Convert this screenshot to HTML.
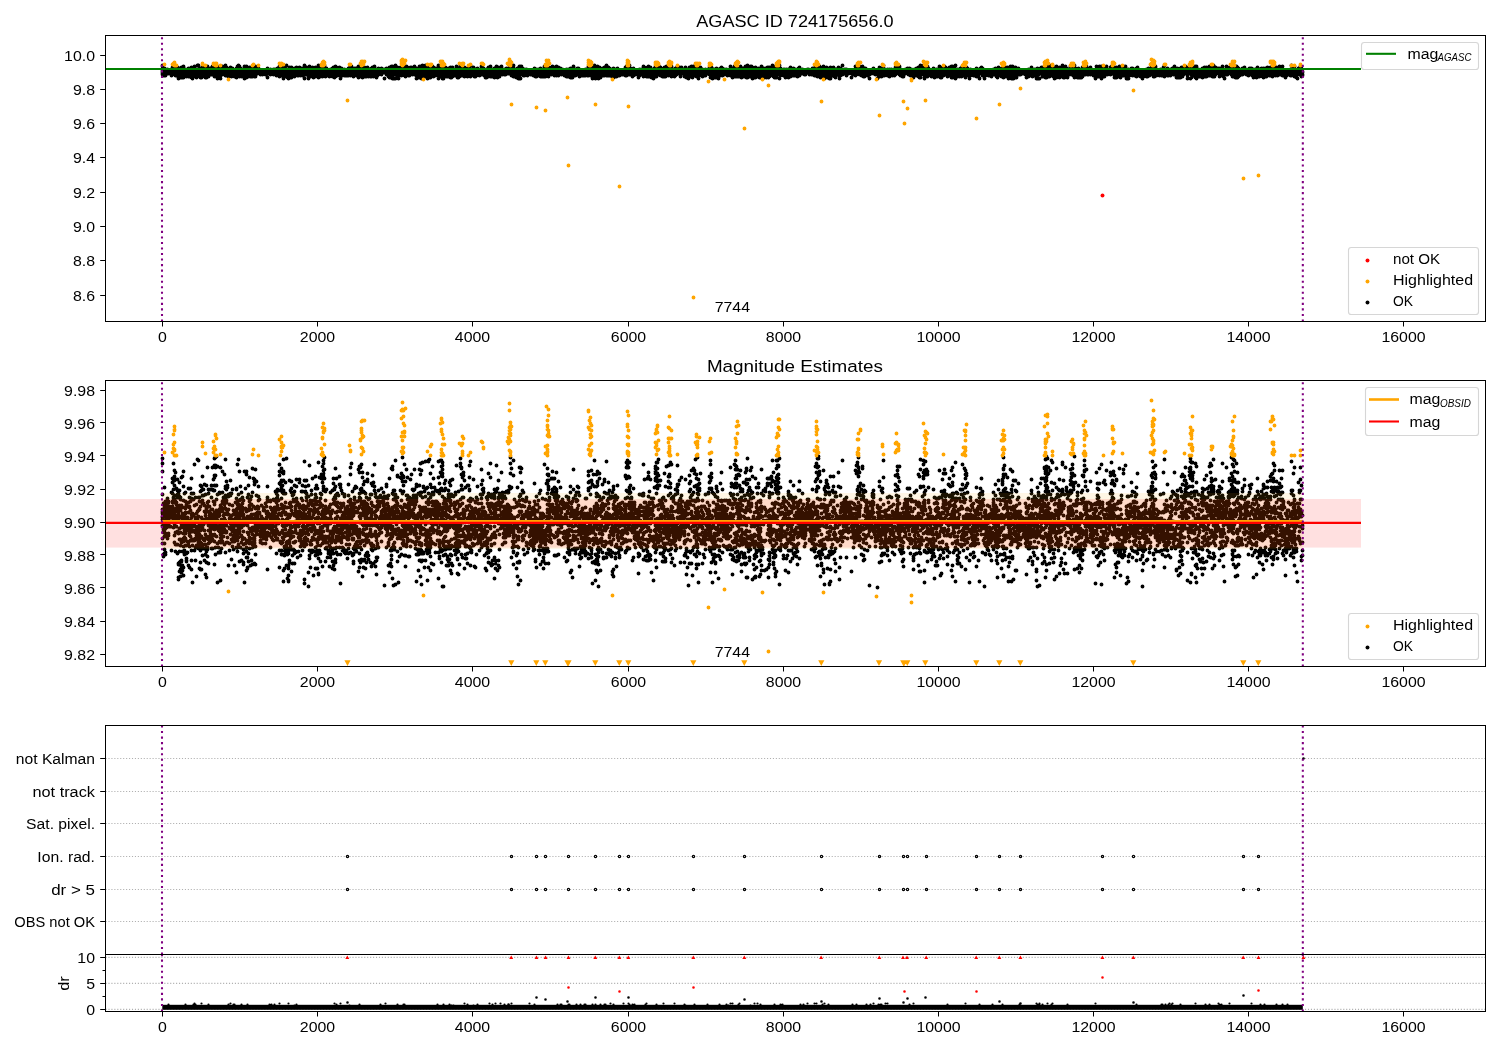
<!DOCTYPE html>
<html><head><meta charset="utf-8"><style>html,body{margin:0;padding:0;background:#fff;overflow:hidden}svg{display:block;will-change:transform}</style></head><body>
<svg width="1500" height="1050" viewBox="0 0 1500 1050" font-family="&quot;Liberation Sans&quot;, sans-serif">
<rect width="1500" height="1050" fill="#fff"/>
<defs>
<clipPath id="c1"><rect x="105.5" y="35.5" width="1380.0" height="286.0"/></clipPath>
<clipPath id="c2"><rect x="105.5" y="380.5" width="1380.0" height="286.0"/></clipPath>
<clipPath id="c3"><rect x="105.5" y="725.5" width="1380.0" height="229.0"/></clipPath>
<clipPath id="c4"><rect x="105.5" y="954.5" width="1380.0" height="57.0"/></clipPath>
</defs>
<g clip-path="url(#c1)">
<path d="M162.5 74.5h0m0-3h0m0-1h0m0-1h0m0-3h0m0 7h0m0-2h0m0 1h0m0-1h0m0 1h0m0-1h0m0-6h0m0 7h0m0-6h0m0 5h0m1 1h0m0 1h0m0-2h0m0 4h0m0-5h0m0 2h0m0 1h0m0-3h0m0 2h0m1 1h0m0-3h0m0 1h0m0 1h0m0-1h0m0 2h0m0-3h0m0-2h0m0 4h0m0 3h0m0-4h0m0 3h0m0-3h0m0 2h0m1 0h0m0-2h0m0-1h0m0 2h0m0-2h0m0 3h0m0-3h0m0 5h0m0-4h0m0-2h0m0 3h0m1-1h0m0 1h0m0-2h0m0 2h0m0-2h0m1-1h0m0 3h0m0-1h0m0-1h0m0 3h0m0-2h0m0 1h0m0-2h0m0 1h0m0 2h0m0-3h0m0 1h0m1 2h0m0-2h0m0 1h0m0 1h0m0-3h0m0 1h0m0-1h0m1 1h0m0-1h0m1 2h0m0-1h0m0-1h0m1 1h0m0 4h0m0-5h0m0-1h0m0 1h0m1 1h0m0-1h0m0 1h0m0-4h0m0 3h0m0-1h0m0 3h0m0-4h0m0 3h0m0-2h0m1 1h0m0-2h0m0 1h0m0 3h0m0-2h0m0-4h0m0 6h0m1-3h0m0 5h0m0-3h0m0-4h0m0 1h0m0 3h0m0-1h0m0 2h0m0-3h0m0 2h0m0-1h0m0 3h0m0-3h0m0 2h0m0-6h0m0 1h0m1-1h0m0 1h0m0 6h0m0-3h0m0 1h0m0 3h0m0-2h0m0-2h0m0 5h0m1-5h0m0 2h0m0-2h0m0 1h0m0-1h0m0 1h0m0-1h0m0-2h0m1 7h0m0-6h0m0 5h0m0-2h0m0-5h0m0 2h0m0-1h0m0 5h0m1-2h0m0-1h0m0-1h0m0 7h0m0 1h0m0-6h0m0-1h0m0 1h0m0 2h0m0 5h0m0-10h0m0 8h0m1-3h0m0 4h0m0-9h0m0 4h0m0-3h0m0 1h0m0 6h0m0-8h0m0 7h0m0 1h0m1-7h0m0 1h0m0 7h0m0-8h0m0 4h0m0-3h0m0 3h0m0-1h0m0-2h0m0 4h0m0 3h0m0-1h0m1-4h0m0 4h0m0-2h0m0-2h0m0-2h0m0 6h0m0-9h0m0 10h0m0-1h0m0-5h0m0 1h0m0-1h0m1-4h0m0 8h0m0-5h0m0 1h0m0 6h0m0-5h0m0 4h0m1-3h0m0 1h0m0-2h0m0 5h0m0-9h0m0 1h0m0 3h0m0-6h0m0 6h0m0 1h0m0 3h0m0-2h0m1-3h0m0 4h0m0-3h0m0 1h0m0 2h0m0-6h0m0 3h0m0-1h0m0 1h0m0-1h0m0 1h0m0-2h0m0 3h0m1-2h0m0 3h0m0-5h0m0 4h0m0-3h0m0 4h0m0-1h0m0-3h0m1 0h0m0 6h0m0-4h0m0 2h0m0-2h0m0 3h0m0 1h0m0-6h0m0 2h0m1 0h0m0 2h0m0-2h0m0-1h0m0 4h0m0-3h0m1 0h0m0-2h0m0 1h0m0 1h0m0 2h0m0-6h0m0 8h0m0-2h0m1-2h0m0-2h0m0 6h0m0-6h0m0 1h0m0 1h0m0 1h0m0-4h0m0 5h0m0-1h0m1-1h0m0 1h0m0-5h0m0 4h0m0 2h0m0-2h0m0 1h0m0-4h0m0 1h0m1 2h0m0-1h0m0-2h0m0 5h0m0-5h0m0 7h0m0-4h0m0-1h0m0 6h0m0-6h0m0 4h0m0-8h0m1 5h0m0-1h0m0 3h0m0-3h0m0 1h0m0 1h0m0 1h0m0-2h0m0 1h0m0 5h0m0-6h0m1 1h0m0-1h0m0-3h0m0 3h0m0 2h0m0-3h0m1 1h0m0 3h0m0-9h0m0 4h0m0 4h0m1-2h0m0 1h0m0-2h0m0 5h0m0-7h0m0 2h0m0 3h0m1-2h0m0 1h0m0-3h0m0 7h0m0-6h0m0 3h0m0-2h0m1 1h0m0-1h0m0-7h0m0 8h0m0-2h0m0 2h0m1-4h0m0 4h0m0-1h0m0 1h0m0 1h0m0-3h0m0 2h0m0-1h0m0-2h0m0-5h0m1 8h0m0-3h0m0 4h0m0-5h0m0 4h0m0-1h0m0-2h0m0 6h0m0-2h0m1 2h0m0-2h0m0-6h0m0 6h0m0 3h0m0-5h0m0-2h0m0 5h0m0-7h0m0 5h0m1-1h0m0-1h0m0 3h0m0-6h0m0 6h0m0-1h0m0 1h0m0-1h0m0-2h0m0 6h0m0-9h0m1 6h0m0-2h0m0 3h0m0-3h0m0-2h0m0-3h0m0 2h0m0 3h0m0 3h0m0-3h0m0 2h0m0-3h0m0-2h0m1 3h0m0-4h0m0 5h0m0 1h0m0-4h0m0-1h0m1 5h0m0-1h0m0-5h0m0 3h0m0 3h0m0-4h0m0 3h0m0 3h0m1-2h0m0-3h0m0 6h0m0-4h0m0-2h0m0 2h0m0 1h0m0-5h0m0 5h0m0 1h0m0-2h0m0-1h0m1 4h0m0-4h0m0 5h0m0-7h0m0 1h0m0 4h0m0-3h0m0-4h0m0 4h0m0 1h0m0 4h0m1-2h0m0-9h0m0 8h0m0-3h0m0-1h0m1 2h0m0 4h0m0-7h0m0 4h0m0-1h0m0-3h0m0 3h0m0-4h0m0 6h0m0-1h0m1-2h0m0 2h0m0-3h0m0 1h0m0-1h0m0 4h0m1-2h0m0 2h0m0-3h0m0-3h0m0 5h0m0-1h0m1 1h0m0-2h0m0-2h0m0 4h0m0-1h0m0-1h0m0-1h0m0 4h0m0-6h0m0 4h0m0-1h0m1 0h0m0-5h0m0 6h0m0-2h0m0 3h0m0-2h0m0 3h0m0-2h0m0-1h0m0-3h0m0 6h0m1-2h0m0-1h0m0-4h0m0 6h0m0-1h0m0-2h0m0-2h0m1 2h0m0-2h0m0 5h0m0-7h0m0 10h0m0-8h0m0 4h0m0-1h0m0 1h0m0-5h0m0 3h0m0 1h0m0-4h0m0-2h0m0 9h0m1-7h0m0 5h0m0-5h0m0-1h0m0 5h0m0 1h0m0-7h0m0 7h0m0 2h0m0-2h0m0-7h0m0 10h0m0-9h0m0 5h0m0 1h0m1-4h0m0-3h0m0 4h0m0 1h0m0 3h0m0-5h0m0 3h0m0 2h0m0-2h0m1-2h0m0 5h0m0-3h0m0-5h0m0 12h0m0-6h0m1-1h0m0 3h0m0-2h0m0 1h0m0-1h0m0-1h0m0 1h0m0 3h0m0-4h0m0 1h0m1 1h0m0-2h0m0 3h0m0-4h0m0-1h0m0 5h0m0-3h0m0-2h0m1-3h0m0 6h0m0 6h0m0-6h0m0 3h0m0-1h0m0-2h0m0 3h0m0-2h0m0-3h0m0 3h0m1 1h0m0-4h0m0 3h0m0-1h0m0 1h0m0-2h0m0 2h0m0-1h0m0 1h0m0 1h0m1 0h0m0-4h0m0-4h0m0 7h0m0-3h0m0-1h0m0 2h0m0 1h0m1-1h0m0 1h0m0-1h0m0 1h0m0-1h0m0-1h0m0 3h0m0-4h0m0 3h0m0-3h0m0 3h0m1-2h0m0-1h0m0 1h0m0 1h0m0 3h0m0-4h0m0 1h0m0 1h0m0-5h0m0 3h0m0 2h0m1 0h0m0-1h0m0-3h0m0 4h0m0-1h0m0 2h0m0-3h0m0 1h0m0-1h0m0 5h0m0-7h0m0 1h0m0-4h0m1 5h0m0 4h0m0-2h0m0 1h0m0-3h0m0-1h0m0 1h0m0-2h0m0-1h0m0 6h0m1-2h0m0 2h0m0-5h0m0 3h0m0-3h0m0 6h0m1-3h0m0-2h0m0 7h0m0-7h0m0 1h0m0 1h0m0-2h0m1 5h0m0 1h0m0-5h0m0 1h0m0 1h0m1-3h0m0 2h0m0 1h0m0-1h0m0 1h0m0 1h0m0-6h0m0 6h0m0-4h0m1 3h0m0 1h0m0-1h0m0 4h0m0-5h0m0 1h0m0-3h0m1 2h0m0 2h0m0-5h0m0 6h0m0-4h0m0 2h0m0-1h0m1 2h0m0-1h0m0-1h0m0 2h0m0 1h0m0-4h0m0 2h0m1 4h0m0-4h0m0 1h0m0-2h0m0 2h0m0-1h0m0 2h0m0-3h0m1 2h0m0-1h0m0-1h0m0 2h0m0-2h0m0 1h0m0 1h0m0-3h0m0 3h0m0-2h0m1 1h0m0 5h0m0-7h0m0-2h0m0 4h0m0-1h0m0 3h0m0-6h0m0 3h0m0 1h0m0-3h0m0 3h0m0-1h0m1 0h0m0-1h0m0 3h0m0-1h0m0-1h0m0 4h0m0-1h0m0-4h0m0-4h0m1 7h0m0-2h0m0 3h0m0-2h0m0-1h0m0 2h0m0-2h0m0 1h0m0-3h0m0 3h0m0-7h0m0 5h0m1-1h0m0 4h0m0-3h0m0 3h0m0-2h0m0 2h0m0-1h0m0-1h0m0 1h0m0-1h0m0 5h0m0-10h0m1 4h0m0 1h0m0-1h0m0 4h0m0-3h0m0-3h0m0 1h0m0 1h0m1 0h0m0 4h0m0-1h0m0 3h0m0-4h0m0-1h0m0-2h0m0 2h0m0 2h0m0-1h0m1 1h0m0-2h0m0-1h0m0 3h0m0-2h0m0-2h0m0 1h0m1 5h0m0 1h0m0-2h0m0-2h0m0 2h0m0-3h0m0-2h0m0 3h0m0-1h0m0 5h0m0-3h0m0-1h0m1 1h0m0 5h0m0-12h0m1 4h0m0 2h0m0-1h0m0 3h0m0-6h0m1 3h0m0 4h0m0-4h0m0 4h0m0-1h0m0-2h0m0 5h0m0-7h0m0-4h0m0 1h0m1 4h0m0 5h0m0-7h0m0 7h0m0-3h0m0-1h0m0 3h0m0-1h0m1-3h0m0 1h0m0 3h0m0 1h0m0-3h0m0-3h0m0-2h0m0 1h0m0 1h0m1 1h0m0-1h0m0 1h0m0 3h0m0-1h0m0-3h0m0 4h0m0-5h0m0 1h0m0 4h0m0-4h0m0-1h0m0 5h0m0-1h0m0-1h0m0-5h0m1 6h0m0-4h0m0 4h0m0 3h0m0-5h0m0 3h0m0-4h0m0 2h0m0-1h0m1 2h0m0-2h0m0-2h0m0 5h0m0-3h0m0 3h0m0-4h0m0 6h0m0-6h0m0 1h0m0-2h0m1 3h0m0 1h0m0 1h0m0-5h0m0-3h0m0 8h0m0-2h0m0 4h0m1-6h0m0 1h0m0 1h0m0-5h0m0 5h0m0-5h0m0 5h0m0 1h0m0 1h0m0-1h0m1-2h0m0 3h0m0-7h0m0 6h0m0-2h0m0-4h0m0 7h0m0-1h0m0-5h0m0 8h0m0-2h0m0-3h0m1 0h0m0 1h0m0 4h0m0-2h0m0-3h0m0 4h0m0-4h0m0-1h0m0 2h0m0-6h0m0 6h0m1-1h0m0 2h0m0-2h0m0 1h0m0-5h0m0 4h0m0 1h0m0-1h0m0 2h0m0-2h0m0 1h0m0-3h0m0 3h0m0-1h0m1 0h0m0-1h0m0 3h0m0-2h0m0-1h0m0 3h0m1-3h0m0-2h0m0 3h0m0-1h0m0-1h0m0 3h0m0-3h0m1 0h0m0 2h0m0 1h0m0-1h0m0 2h0m0-2h0m1 3h0m0-1h0m0-1h0m0-1h0m0 2h0m0 1h0m0-2h0m0 2h0m1-2h0m0 1h0m0-1h0m0-1h0m0-1h0m0 2h0m0-1h0m0 2h0m1-1h0m0 2h0m0-1h0m0-2h0m0 2h0m1-1h0m0 1h0m0-2h0m0 1h0m0-2h0m0 2h0m0-2h0m1 3h0m0-1h0m0-2h0m1 0h0m0 1h0m0 1h0m0 1h0m0 1h0m0-3h0m1 0h0m0 2h0m0-2h0m0 1h0m0 1h0m0-1h0m0-1h0m0-1h0m0 1h0m1 0h0m0 1h0m0-3h0m0 2h0m0-3h0m0 9h0m0-4h0m0-4h0m0 3h0m0-2h0m1 3h0m0-2h0m0 1h0m0-1h0m0 1h0m1 0h0m0-1h0m0 1h0m0 1h0m1-1h0m0-2h0m0 1h0m0-1h0m0 4h0m0-2h0m0-3h0m1 2h0m0 1h0m0-1h0m0-1h0m0 3h0m0-1h0m0-1h0m0 1h0m1 0h0m0-1h0m0 2h0m0-3h0m0 3h0m0-2h0m0 1h0m0-1h0m0 1h0m0-1h0m0 1h0m1-3h0m0 5h0m0-2h0m0 1h0m0-1h0m0 1h0m1 0h0m0-3h0m0 1h0m0-2h0m0 4h0m0-2h0m0-1h0m1 2h0m0 1h0m0-2h0m0 2h0m0-1h0m0-1h0m0-2h0m0 1h0m0 3h0m1 0h0m0 2h0m0-5h0m0 2h0m0-3h0m0 1h0m0-1h0m0 1h0m0 1h0m0 2h0m1-2h0m0-2h0m0 4h0m0-1h0m0-4h0m0 6h0m0-3h0m0-2h0m0 1h0m0 2h0m0-4h0m0 3h0m0 2h0m0-1h0m1-1h0m0-1h0m0-1h0m0 2h0m0-3h0m0 1h0m0 3h0m1 1h0m0-7h0m0 1h0m0 8h0m0-9h0m0 7h0m0-2h0m0-3h0m0 8h0m1-2h0m0-4h0m0-2h0m0 6h0m0-6h0m1-2h0m0 6h0m0-1h0m0-2h0m0 1h0m0 4h0m0-6h0m0 5h0m0 2h0m0-8h0m0 3h0m0-3h0m0 8h0m1-1h0m0 1h0m0-4h0m0 2h0m0-3h0m0-3h0m0 6h0m0-2h0m0 1h0m0-4h0m0 5h0m0-4h0m0 4h0m0-3h0m1 2h0m0-5h0m0 6h0m0-6h0m0-2h0m0 13h0m0-12h0m0 7h0m0-2h0m0 1h0m0-4h0m0-1h0m0 2h0m0 1h0m0 1h0m0 6h0m1-3h0m0 2h0m0-2h0m0-4h0m0 3h0m0 2h0m0-3h0m1 0h0m0-1h0m0-3h0m0 1h0m0 6h0m0-3h0m0-2h0m1 5h0m0-5h0m0-5h0m0 10h0m0-1h0m0 2h0m0-2h0m0-3h0m0 1h0m0 3h0m0-3h0m0 3h0m0-2h0m0 1h0m0-3h0m0 2h0m1-3h0m0 2h0m0 2h0m0-2h0m0-1h0m0 4h0m0-4h0m0 3h0m0 1h0m0 2h0m0-5h0m1 1h0m0 3h0m0-3h0m0 5h0m0-4h0m0 1h0m0-4h0m0 4h0m0-1h0m0 1h0m0-2h0m0 4h0m0 1h0m0-2h0m0-5h0m1-1h0m0 4h0m0-1h0m0-1h0m0 4h0m0-9h0m0 4h0m0 3h0m0-3h0m0 5h0m1-2h0m0-1h0m0-3h0m0-2h0m0 2h0m0 3h0m0-3h0m0 2h0m0-1h0m0 1h0m1-4h0m0 2h0m0 2h0m0 1h0m0-6h0m0 6h0m0 4h0m0-4h0m0-3h0m0-1h0m1 0h0m0 2h0m0 4h0m0-2h0m0 2h0m0 1h0m1-4h0m0 3h0m0-6h0m0 3h0m0-3h0m0 4h0m0-4h0m0 5h0m1-3h0m0 4h0m0-6h0m0 7h0m0-8h0m0 6h0m0-2h0m0 3h0m0-6h0m0 3h0m1-2h0m0 5h0m0-5h0m0 1h0m0 1h0m0 3h0m0-3h0m0 1h0m0-3h0m0 2h0m0-3h0m0 5h0m0-4h0m1 0h0m0 1h0m0-2h0m0 2h0m0-4h0m0 4h0m0-2h0m0-1h0m1 2h0m0 3h0m0 2h0m0-3h0m0-2h0m0 2h0m0-1h0m0 1h0m1 0h0m0-1h0m0 1h0m0 1h0m0-2h0m0-1h0m0 5h0m1-4h0m0-1h0m0 2h0m0-4h0m0 5h0m0-2h0m0-1h0m0 2h0m0-2h0m0 2h0m0-1h0m0-4h0m0 3h0m0 4h0m1 0h0m0-1h0m0-2h0m0 2h0m0-2h0m0 2h0m0 1h0m0-2h0m0 3h0m0-4h0m1 0h0m0-3h0m0 5h0m0-2h0m0 2h0m0-2h0m0-2h0m0 5h0m1-3h0m0-1h0m0 4h0m0-5h0m0 3h0m0-4h0m0 5h0m0-2h0m0-1h0m0-2h0m0 7h0m1-4h0m0 3h0m0-1h0m0-3h0m0 1h0m0 1h0m0-2h0m0 2h0m0 1h0m1 0h0m0 1h0m0-3h0m0 7h0m0-11h0m0 7h0m0-9h0m1 6h0m0-1h0m0 1h0m0-3h0m0 3h0m0-3h0m0 4h0m0 1h0m0-4h0m0 2h0m0-1h0m0 3h0m0-2h0m0 3h0m1-2h0m0-3h0m0 1h0m0-1h0m0-2h0m0 7h0m0-4h0m0 1h0m0 3h0m1-3h0m0 2h0m0 1h0m0-2h0m1-2h0m0 1h0m0-1h0m0 2h0m0 6h0m0-1h0m0-4h0m0-1h0m0-1h0m0-2h0m0-1h0m1 2h0m0 2h0m0-1h0m0 4h0m0-9h0m0 9h0m0-5h0m0 1h0m0 1h0m0-1h0m0 4h0m1-1h0m0-2h0m0 2h0m0 2h0m0-4h0m0-2h0m0-1h0m0 1h0m1 0h0m0 1h0m0 2h0m0-3h0m0 5h0m0-1h0m0-2h0m0-1h0m0 3h0m0-6h0m0 1h0m0 6h0m1-8h0m0 4h0m0 1h0m0 1h0m0 2h0m0-5h0m0 2h0m0 1h0m1-4h0m0 4h0m0-1h0m0 5h0m0-5h0m0-1h0m1-1h0m0 5h0m0-5h0m0 4h0m0-3h0m0 1h0m0 1h0m1-6h0m0 7h0m0 2h0m0-5h0m0 2h0m0 2h0m0-7h0m0 1h0m0 4h0m0-4h0m0 1h0m1 1h0m0 2h0m0-4h0m0 4h0m0-5h0m0 2h0m1 4h0m0 2h0m0-8h0m0 3h0m0 2h0m0-3h0m0 4h0m0 1h0m0-4h0m0 1h0m1 5h0m0-6h0m0 6h0m0-12h0m0 8h0m0 2h0m0-4h0m0 2h0m1-6h0m0 5h0m0-2h0m0 5h0m0-5h0m0 2h0m0-2h0m1 3h0m0-1h0m0-2h0m0 3h0m0-4h0m0 7h0m0-4h0m0 3h0m0-1h0m0-5h0m1 2h0m0 1h0m0-5h0m0 2h0m0 2h0m0-1h0m0-3h0m0 6h0m1-6h0m0 9h0m0-4h0m0 2h0m0-2h0m0-1h0m0 1h0m0-6h0m0 5h0m0 2h0m0-1h0m0-2h0m0-3h0m1-1h0m0 2h0m0 2h0m0-3h0m0-1h0m0 8h0m0-2h0m0-5h0m0-2h0m0 9h0m0-1h0m0-3h0m0 1h0m0 2h0m0-2h0m0-3h0m1-3h0m0 5h0m0 1h0m0-5h0m0 6h0m0 2h0m0-3h0m0-4h0m0 4h0m1 2h0m0-4h0m0 7h0m0-2h0m0-3h0m0-1h0m0-1h0m0 2h0m0 1h0m0 2h0m0-1h0m0-1h0m0-2h0m1 4h0m0-4h0m0 4h0m0-6h0m0 6h0m0-1h0m0-1h0m1 1h0m0-1h0m0-2h0m0 2h0m0-1h0m0 1h0m0 2h0m0-1h0m0-2h0m0 4h0m0-4h0m1 4h0m0-2h0m0 2h0m0-2h0m0-2h0m0 4h0m0-4h0m1-1h0m0 3h0m0 3h0m0-4h0m0 2h0m0-3h0m0 3h0m0 1h0m1-2h0m0 2h0m0-6h0m0 6h0m0-2h0m0-1h0m0 2h0m0-1h0m0-3h0m0 1h0m0 2h0m0-2h0m0 2h0m1-2h0m0 2h0m0-2h0m0 3h0m0 1h0m1 1h0m0-3h0m0 3h0m0-6h0m0 5h0m0-7h0m1 8h0m0-4h0m0 2h0m0-1h0m0-5h0m0 2h0m0 2h0m0-3h0m0-2h0m0 7h0m0-2h0m0 3h0m1-6h0m0-1h0m0 6h0m0-5h0m0 3h0m0-4h0m0 9h0m1-6h0m0 2h0m0-2h0m0-2h0m0 5h0m0-5h0m0 5h0m0 2h0m0-8h0m0 4h0m0-2h0m0 6h0m0-2h0m0-5h0m0 1h0m0 2h0m0-6h0m1 5h0m0 2h0m0-1h0m0 2h0m0-4h0m0-3h0m0 2h0m0 3h0m0 1h0m0 2h0m0-5h0m1 3h0m0-1h0m0-1h0m0 1h0m0-3h0m0 6h0m0-5h0m0 1h0m0-1h0m1 3h0m0-3h0m0 2h0m0-3h0m0 4h0m0 1h0m1 0h0m0-7h0m0 5h0m0-4h0m0 4h0m1-4h0m0 10h0m0-6h0m0-4h0m0 2h0m0 1h0m0 4h0m0-5h0m0 1h0m0 1h0m0 1h0m1-1h0m0 2h0m0-1h0m0-3h0m0 3h0m0-5h0m0 4h0m0-2h0m0 3h0m0-3h0m1 1h0m0 4h0m0-2h0m0-4h0m0 5h0m0-2h0m0-1h0m0 2h0m0-1h0m1 0h0m0 1h0m0-3h0m0 1h0m0 1h0m0 2h0m1-5h0m0 3h0m0 3h0m0-4h0m0-2h0m1 4h0m0-3h0m0 1h0m0 4h0m0-3h0m0-1h0m0 1h0m0-2h0m0 2h0m1-1h0m0 1h0m0-1h0m0 3h0m0-2h0m0 3h0m0-3h0m0 3h0m1-4h0m0 2h0m0-1h0m0-1h0m0 4h0m0-3h0m0 1h0m0-3h0m0 3h0m0-1h0m0-1h0m0 1h0m0-2h0m0 1h0m0 1h0m0 1h0m1-2h0m0-1h0m0 5h0m0-3h0m0-1h0m0 2h0m0-2h0m0-2h0m0 3h0m0 2h0m0-1h0m0-1h0m0 1h0m0-5h0m0 6h0m0-3h0m0 1h0m1-1h0m0 2h0m0-2h0m0 2h0m0 1h0m0-4h0m1 2h0m0 3h0m0-6h0m0 2h0m0-1h0m0-3h0m0 2h0m0 3h0m0-2h0m0-4h0m0 5h0m1 1h0m0-6h0m0 5h0m0 2h0m0-1h0m0-1h0m0 1h0m0-1h0m0 1h0m0-1h0m0-1h0m1 3h0m0-2h0m0-1h0m0 1h0m0 4h0m0-7h0m0 3h0m0-1h0m0 2h0m0-2h0m0 3h0m1-3h0m0 3h0m0 2h0m0-4h0m0 2h0m0 3h0m0-6h0m0 4h0m0-1h0m0-1h0m0-2h0m0 5h0m1-6h0m0-1h0m0 4h0m0 2h0m0-4h0m0 4h0m0-2h0m0-3h0m0 3h0m0-1h0m1-1h0m0 4h0m0-6h0m0 6h0m0-1h0m0 1h0m0-3h0m0 2h0m1 1h0m0-2h0m0 3h0m0-7h0m0 4h0m1 2h0m0-3h0m0 3h0m0-1h0m0-3h0m0 3h0m0 1h0m0-3h0m0 2h0m1 4h0m0-7h0m0 3h0m0-3h0m0 3h0m0-7h0m0 7h0m1 0h0m0-3h0m0 6h0m0-4h0m0 1h0m0-2h0m0-5h0m0 6h0m0-3h0m0 4h0m0-4h0m0 6h0m0-8h0m0 2h0m0 7h0m1-8h0m0-2h0m0 8h0m0-5h0m0 5h0m0-5h0m0 2h0m0 5h0m0-2h0m1 1h0m0-7h0m0 4h0m0-4h0m0 2h0m0 3h0m0 3h0m0-7h0m0-3h0m1 4h0m0 4h0m0-2h0m0-6h0m0 4h0m0 1h0m0 6h0m0-10h0m0 7h0m0-3h0m1-1h0m0 1h0m0 5h0m0-8h0m0 5h0m0-3h0m0 3h0m0-1h0m0-4h0m0 4h0m0 1h0m0-2h0m0-1h0m0 6h0m1-5h0m0-1h0m0 6h0m0-7h0m0 5h0m0-5h0m0 2h0m0-1h0m0 2h0m0-2h0m0-3h0m0 7h0m1 1h0m0-6h0m0 1h0m0 1h0m0 2h0m0 3h0m0-5h0m0 1h0m1-2h0m0 4h0m0-2h0m0 1h0m0-2h0m0 5h0m0-1h0m0-3h0m0 1h0m0-4h0m0 2h0m0-1h0m1 2h0m0 1h0m0-3h0m0 1h0m0-4h0m0 4h0m0-4h0m0 8h0m0-8h0m0 8h0m0-2h0m1 1h0m0-1h0m0-3h0m0 1h0m0 4h0m0-6h0m0 4h0m0 1h0m0-4h0m0 6h0m1-7h0m0 1h0m0 2h0m0-2h0m0 1h0m0-2h0m0 4h0m1 0h0m0-3h0m0-1h0m0 3h0m0-2h0m0 3h0m0 1h0m0 2h0m0-5h0m1 5h0m0-2h0m0-3h0m0-1h0m0 4h0m0-3h0m0 3h0m0-4h0m0-2h0m0 5h0m0-4h0m0 4h0m1 1h0m0-2h0m0-4h0m0 2h0m0 2h0m0-1h0m0-4h0m0 1h0m0 4h0m0 3h0m1-7h0m0 5h0m0 3h0m0-3h0m0-2h0m0 3h0m1-1h0m0-5h0m0-2h0m0 4h0m0-2h0m1 3h0m0 2h0m0-1h0m0-3h0m0 7h0m0-2h0m0-3h0m0-2h0m0 7h0m0-5h0m1-2h0m0 8h0m0-2h0m0-2h0m0-2h0m0 5h0m0-6h0m0 4h0m1 0h0m0-5h0m0 1h0m0 3h0m0-3h0m0 2h0m0 3h0m0-3h0m0 2h0m1-2h0m0 2h0m0-1h0m0-4h0m0-1h0m1 2h0m0 1h0m0 2h0m0-3h0m0 2h0m0-2h0m1 2h0m0-3h0m0 2h0m0 1h0m1 0h0m0-4h0m0 6h0m0-3h0m0 1h0m0-2h0m0 1h0m0 3h0m0-5h0m0 4h0m1-1h0m0-1h0m0-2h0m0 1h0m0 1h0m0-1h0m0 1h0m1 0h0m0 1h0m0-2h0m0 1h0m0 1h0m0-3h0m0 1h0m0-1h0m0 1h0m1 2h0m0-1h0m0-1h0m0 2h0m0-3h0m0 3h0m0-2h0m0 8h0m0-6h0m1 0h0m0-2h0m0 2h0m0-1h0m0-1h0m0 1h0m1 1h0m0-2h0m0 1h0m0 1h0m0 2h0m0-1h0m0-5h0m0 1h0m0 1h0m0-2h0m1 5h0m0-4h0m0 1h0m0 1h0m0 1h0m0-1h0m0 1h0m1 2h0m0-4h0m0 2h0m0-3h0m0 1h0m0 4h0m0-3h0m0-1h0m0 4h0m0-3h0m0 3h0m0 2h0m1 1h0m0-5h0m0 1h0m0-2h0m0-4h0m0 6h0m0-2h0m0 1h0m1 0h0m0-1h0m0 2h0m0 2h0m0-5h0m0 2h0m0 4h0m1-1h0m0-4h0m0 1h0m0 4h0m0-3h0m0 2h0m0-3h0m0 4h0m0-5h0m0 4h0m0-2h0m0 3h0m0-6h0m0 2h0m0-1h0m0 4h0m0-3h0m0 1h0m0-7h0m0 8h0m1-1h0m0-2h0m0 3h0m0-2h0m0 6h0m0-7h0m0-5h0m0 7h0m0 1h0m0-4h0m0-1h0m0 1h0m1 4h0m0-6h0m0 3h0m0 7h0m0-9h0m0 2h0m0 2h0m0-1h0m0-1h0m0-2h0m0 2h0m0 3h0m1-1h0m0 1h0m0-3h0m0-1h0m0 1h0m0 2h0m0-2h0m0 2h0m0-2h0m0-3h0m0 6h0m0-4h0m0 1h0m0 3h0m0-6h0m1 2h0m0-5h0m0 4h0m0 3h0m0 1h0m0 5h0m0-9h0m0 3h0m1 1h0m0-3h0m0 1h0m0-1h0m0 2h0m0-2h0m0 1h0m0 1h0m0-1h0m1 5h0m0-5h0m0-4h0m0 6h0m0-1h0m0-1h0m0-1h0m0 1h0m0-2h0m0-2h0m0 3h0m0 1h0m0 4h0m0-5h0m1 1h0m0 1h0m0 6h0m1-7h0m0 2h0m0 2h0m0-2h0m1 0h0m0-2h0m0-3h0m0 2h0m0 4h0m0-3h0m0 2h0m0-6h0m1 5h0m0-1h0m0-4h0m0 8h0m0-3h0m0-5h0m0 4h0m0 1h0m0-5h0m0 2h0m0 1h0m1-3h0m0 4h0m0 1h0m0 1h0m0-6h0m0 4h0m0 3h0m0-4h0m0 3h0m0-3h0m0 1h0m0-2h0m0-2h0m0 5h0m0 1h0m0-2h0m0-6h0m1 7h0m0-5h0m0 7h0m0-6h0m0 5h0m0-5h0m0 3h0m0 3h0m0-1h0m0-2h0m0-4h0m1 3h0m0 2h0m0-2h0m0 1h0m0-5h0m0 9h0m0-3h0m0 1h0m0-3h0m0 3h0m0-2h0m1 1h0m0-1h0m0 2h0m0 2h0m0-8h0m0 9h0m0-3h0m0-3h0m0 2h0m0-1h0m0-1h0m0 1h0m1-5h0m0 8h0m0-2h0m0 1h0m0 1h0m0-5h0m0 1h0m0 1h0m1 2h0m0-2h0m0 2h0m0-2h0m0 1h0m0 1h0m0-1h0m0-3h0m0 5h0m0-3h0m0-2h0m0-2h0m1 3h0m0 1h0m0 4h0m0-5h0m0 2h0m0-1h0m0 1h0m0-2h0m1 1h0m0 1h0m0-3h0m0 3h0m0-2h0m0 5h0m0-5h0m1-3h0m0 7h0m0-1h0m0-1h0m0-2h0m0-1h0m0 3h0m0-3h0m0 5h0m1-5h0m0 2h0m0-1h0m0-3h0m0 3h0m0 2h0m0-2h0m0 1h0m1-3h0m0 2h0m0 2h0m0 2h0m1-3h0m0-1h0m0 1h0m0 1h0m0-3h0m0 4h0m0-2h0m0-2h0m0 2h0m0-3h0m0 3h0m0-1h0m0-1h0m1 3h0m0-3h0m0-3h0m0 2h0m0 2h0m0 4h0m0-4h0m0 1h0m0-1h0m0 3h0m1-3h0m0 2h0m0 2h0m0-5h0m0 5h0m0-1h0m0-3h0m0 2h0m0 2h0m0-3h0m1 3h0m0-6h0m0 1h0m0 3h0m0 1h0m0 2h0m0-6h0m0-1h0m0 2h0m0 2h0m0-1h0m0 7h0m1-7h0m0 2h0m0 2h0m0-1h0m0-3h0m0 1h0m1-3h0m0 6h0m0-2h0m0-2h0m0 3h0m0 3h0m1-7h0m0-4h0m0 6h0m0-4h0m0 5h0m0 3h0m0-1h0m0-4h0m0 3h0m0-2h0m0 2h0m1 2h0m0-6h0m0 4h0m0-3h0m0 2h0m0-2h0m0 1h0m0-2h0m0 4h0m0-4h0m0 5h0m0-8h0m0 2h0m0 2h0m0 6h0m0-6h0m0-5h0m0 4h0m0 5h0m1-4h0m0 7h0m0-6h0m0 4h0m0-7h0m0 6h0m0-9h0m0 8h0m0 1h0m0-5h0m0 2h0m0-2h0m0 1h0m1 1h0m0 4h0m0-11h0m0 4h0m0 2h0m0 2h0m0 2h0m1-3h0m0-2h0m0 1h0m0-1h0m0 5h0m0-7h0m0 7h0m0-3h0m1-2h0m0-2h0m0 2h0m0 6h0m0-3h0m0-2h0m0 1h0m0 1h0m1 1h0m0-3h0m0-1h0m0 1h0m0-2h0m0 7h0m0-4h0m0-7h0m0 6h0m0 2h0m0 1h0m0-2h0m1 1h0m0-3h0m0 2h0m0-1h0m0 3h0m0-6h0m0 6h0m0-1h0m0-1h0m0 1h0m0 2h0m0-4h0m0 1h0m1 1h0m0-3h0m0 1h0m0 4h0m0-5h0m0-2h0m0 6h0m0-3h0m0 7h0m0-5h0m0 1h0m0-1h0m1-1h0m0-3h0m0 1h0m0-5h0m0 5h0m0-1h0m0 4h0m0-4h0m0 7h0m0-5h0m0 3h0m0-1h0m0 1h0m0-9h0m1 8h0m0-2h0m0 1h0m0 3h0m0-1h0m0-1h0m0-3h0m0 1h0m0 2h0m0 2h0m0-10h0m1 10h0m0-4h0m0 2h0m0-2h0m0-1h0m0 2h0m0 1h0m0-5h0m0 6h0m0-7h0m0 7h0m0 3h0m0-3h0m0-5h0m1 0h0m0 3h0m0-1h0m0 3h0m0-3h0m0 1h0m0-1h0m0 5h0m0-4h0m0-4h0m1 1h0m0-3h0m0 3h0m0 1h0m0 1h0m0 1h0m1 0h0m0-3h0m0 2h0m0 5h0m0-4h0m0 1h0m0-3h0m0 2h0m0-2h0m0-1h0m0-2h0m0 5h0m0 1h0m0 1h0m1-6h0m0 3h0m1 0h0m0 3h0m0-3h0m0 4h0m0-3h0m0-1h0m0-1h0m0-2h0m0 3h0m0-2h0m0 2h0m0-1h0m1 1h0m0 2h0m0-3h0m0 2h0m0-1h0m0-1h0m0 1h0m0 1h0m0-1h0m0-3h0m1 5h0m0-2h0m0-1h0m0 3h0m0-3h0m0 1h0m0 3h0m0-4h0m0 2h0m0-4h0m0 2h0m0 1h0m1 7h0m0-6h0m0-2h0m0 1h0m0-4h0m0 8h0m0-10h0m0 6h0m1 3h0m0-4h0m0-2h0m0 6h0m0-6h0m0 4h0m0 1h0m0 2h0m0-1h0m0-4h0m0 3h0m0-1h0m0-3h0m0 6h0m0-4h0m1 1h0m0 1h0m0-5h0m0 6h0m0-2h0m0-7h0m0 5h0m0 1h0m0 3h0m0-4h0m0-4h0m1 8h0m0-7h0m0 1h0m0 3h0m0 2h0m0-2h0m0 4h0m0-3h0m0-1h0m0 3h0m0-8h0m0 10h0m0-11h0m0 6h0m1-6h0m0 2h0m0 4h0m0-5h0m0 1h0m0 11h0m0-8h0m0-2h0m0 4h0m0-1h0m0-1h0m0 2h0m0-1h0m0 4h0m0-4h0m0-2h0m0-3h0m0 6h0m1 1h0m0 2h0m0-3h0m0-2h0m0 3h0m0-2h0m0 2h0m0 1h0m0 4h0m0-7h0m1 1h0m0 1h0m0-3h0m0-2h0m0 6h0m0-6h0m0 1h0m0 3h0m0-3h0m0 5h0m0-4h0m0 4h0m0-4h0m1 4h0m0-2h0m0-4h0m0 4h0m0 3h0m0-2h0m0-6h0m0 4h0m0 1h0m0 2h0m0-2h0m0-1h0m0-1h0m1 0h0m0 1h0m0 5h0m0-4h0m0-2h0m0 4h0m0-2h0m0-2h0m0 2h0m0-2h0m0 3h0m0-2h0m1 3h0m0-5h0m0 3h0m0-3h0m0 6h0m0 1h0m0-5h0m0 3h0m0-1h0m0-2h0m1 3h0m0-5h0m0 1h0m0-1h0m0 7h0m0-2h0m0-5h0m0 2h0m0 3h0m0 2h0m0-7h0m0-1h0m0 6h0m1-4h0m0 2h0m0 4h0m0-7h0m0-1h0m0 1h0m0 5h0m0-2h0m0-2h0m0 2h0m1-2h0m0-1h0m0 1h0m0 2h0m0-3h0m0 6h0m0-4h0m0-3h0m0 6h0m0-7h0m0 4h0m0 6h0m1-4h0m0-1h0m0 2h0m0 2h0m0 1h0m0-2h0m0-5h0m0-1h0m0 2h0m1 1h0m0-5h0m0 4h0m0 5h0m0-5h0m0 3h0m0-3h0m1 1h0m0-1h0m0 1h0m0-3h0m1 1h0m0 5h0m0-3h0m0-1h0m0-1h0m0 3h0m1 2h0m0-2h0m0 1h0m0-3h0m0 1h0m0-1h0m0-1h0m0 4h0m0-5h0m0 3h0m0 2h0m0-1h0m0-4h0m0 2h0m1 2h0m0 2h0m0-9h0m0 8h0m0-1h0m0-1h0m0 1h0m0-3h0m0 4h0m0-1h0m0 1h0m0-1h0m0-1h0m0 2h0m1-1h0m0 4h0m0-7h0m0 4h0m0-3h0m0 3h0m0-3h0m0-1h0m0 5h0m0-3h0m0 4h0m1 1h0m0-6h0m0 4h0m0-4h0m0 3h0m0-1h0m0-1h0m0-4h0m0 4h0m0 2h0m1 0h0m0-2h0m0 4h0m0-5h0m0 3h0m0-2h0m0-2h0m0 3h0m0 1h0m0-1h0m0-3h0m1-4h0m0-1h0m0 8h0m0-2h0m0 3h0m0-5h0m0 1h0m0 1h0m0-5h0m0 6h0m1 2h0m0-8h0m0 1h0m0-1h0m0 5h0m0-3h0m0-2h0m0 2h0m0 7h0m1-1h0m0-2h0m0-1h0m0 4h0m0-6h0m0-2h0m0 1h0m0 2h0m0 3h0m0-1h0m1 1h0m0-6h0m0 6h0m0-2h0m0-4h0m0 5h0m0 1h0m0-4h0m0 2h0m0-1h0m0 2h0m0-2h0m0 1h0m1 1h0m0-1h0m0 3h0m0-1h0m0 1h0m0-7h0m0 7h0m0-3h0m0 5h0m0-5h0m0 2h0m0-1h0m1-2h0m0-2h0m0 6h0m0 1h0m0-1h0m0 1h0m0-3h0m1-2h0m0 5h0m0-2h0m0-1h0m0 2h0m0-1h0m1-1h0m0-4h0m0 4h0m0 1h0m0 3h0m0-6h0m0 3h0m0-2h0m0-1h0m0 5h0m0-4h0m1 2h0m0-4h0m0 2h0m0 2h0m0-2h0m0 1h0m0-4h0m0 3h0m1 0h0m0 3h0m0-7h0m0 6h0m0-1h0m0-1h0m0 3h0m0-5h0m0 3h0m0-2h0m0-2h0m0-2h0m0 5h0m0-3h0m1 3h0m0-2h0m0 3h0m0-1h0m0-6h0m0 4h0m0 2h0m0 3h0m0-1h0m0 3h0m0-4h0m0 3h0m0-2h0m1-2h0m0 4h0m0-3h0m0 3h0m0-3h0m0 1h0m0-3h0m0 1h0m0 1h0m0-1h0m0 1h0m0 1h0m1-2h0m0 1h0m0-1h0m0 1h0m0-3h0m0 2h0m0 1h0m0-1h0m0 3h0m1-1h0m0 1h0m0-2h0m0-5h0m0 5h0m0-2h0m0 3h0m0-2h0m0 2h0m1-3h0m0 2h0m0-1h0m0 5h0m0-5h0m0 2h0m0-1h0m0 2h0m0-4h0m0 3h0m0-2h0m0 2h0m1-1h0m0 4h0m0-6h0m0 3h0m0-2h0m0 1h0m0 1h0m0-1h0m0-2h0m0 1h0m0 1h0m0-3h0m1 6h0m0-4h0m0-1h0m0 3h0m0-1h0m0-1h0m0 1h0m0 1h0m0-4h0m0 4h0m1 1h0m0-3h0m0-2h0m0 2h0m0 1h0m0-1h0m0-3h0m0 3h0m0 1h0m1 1h0m0-2h0m0 2h0m0 1h0m0-1h0m0-2h0m0 2h0m0-2h0m0-1h0m0 4h0m0-2h0m1 0h0m0-1h0m0-1h0m0 1h0m0 3h0m0-3h0m0 4h0m0-3h0m0-1h0m0 2h0m1-1h0m0 1h0m0-2h0m0 3h0m0-2h0m0-1h0m0-2h0m0 5h0m0-1h0m1-7h0m0 8h0m0-4h0m0 2h0m0-2h0m0-1h0m0-1h0m0 6h0m0-2h0m0-1h0m0 1h0m0 1h0m0-1h0m0-1h0m1 2h0m0-1h0m0-1h0m0 3h0m0-5h0m0 1h0m0 1h0m0-3h0m0 5h0m0-6h0m1 6h0m0-4h0m0 1h0m0 3h0m0-5h0m0 3h0m0 3h0m0-1h0m0-5h0m1 3h0m0 3h0m0-1h0m0 2h0m0-2h0m0-1h0m1 0h0m0 5h0m0-3h0m0-3h0m0 2h0m0-2h0m0 3h0m0-2h0m1 3h0m0-1h0m0-5h0m0 2h0m0 2h0m0 1h0m0-3h0m0 6h0m1-7h0m0 4h0m0-3h0m0 1h0m0 3h0m0-4h0m0 2h0m0 1h0m0-1h0m0 1h0m0-3h0m0-2h0m0 3h0m0-3h0m1 0h0m0 4h0m0-3h0m0 1h0m0 1h0m0-2h0m0 5h0m0 1h0m0-6h0m0 2h0m0-5h0m0 3h0m0 5h0m1-4h0m0-1h0m1 3h0m0-2h0m0 4h0m0 1h0m0-6h0m0 1h0m0-5h0m0 6h0m0-5h0m0 2h0m0 1h0m0 1h0m0 4h0m1-4h0m0-1h0m0 1h0m0 3h0m0-5h0m0 1h0m0-1h0m0 4h0m0 1h0m0 2h0m1 0h0m0-3h0m0-2h0m0 2h0m0 3h0m0-3h0m1-4h0m0 1h0m0 1h0m0-1h0m1-1h0m0 5h0m0-3h0m0-3h0m0 5h0m0-3h0m0-1h0m0 8h0m0-4h0m0-1h0m0 3h0m1 1h0m0-8h0m0 2h0m0 3h0m0-2h0m0 2h0m0-2h0m0 5h0m0-7h0m0 7h0m0-5h0m0-1h0m1-2h0m0-2h0m0 5h0m0-1h0m0-2h0m1 5h0m0 4h0m0-9h0m0 2h0m0 1h0m1 5h0m0-9h0m0 4h0m0-2h0m0 3h0m0-3h0m0 3h0m0-2h0m0-1h0m0 7h0m1-7h0m0 4h0m0-2h0m0-2h0m0 1h0m0 1h0m0 5h0m0-1h0m1-5h0m0 2h0m0-2h0m0-1h0m1 2h0m0-5h0m0 5h0m0-1h0m0 1h0m0 1h0m0-1h0m0 1h0m1 2h0m0-2h0m0-3h0m0 1h0m0-1h0m0 3h0m0-3h0m1 2h0m0 1h0m0 1h0m0-2h0m1 0h0m0-2h0m0 4h0m0-3h0m0 1h0m0-1h0m0 1h0m0 1h0m0 1h0m0 1h0m0-2h0m1-1h0m0 1h0m0-2h0m0-1h0m0 3h0m0-1h0m0-1h0m0 4h0m0-3h0m0 2h0m0-1h0m0 1h0m0-4h0m1 2h0m0 1h0m0-1h0m0-3h0m0 3h0m0-1h0m0 1h0m0 2h0m1-1h0m0-2h0m0-1h0m0 2h0m0 1h0m0-1h0m0 2h0m0-3h0m0 1h0m0 1h0m0-2h0m1-2h0m0 3h0m0-1h0m0 1h0m0-3h0m0 3h0m0-1h0m0 2h0m0-3h0m0 2h0m0 2h0m0-1h0m1-1h0m0-3h0m0 5h0m0-1h0m0-1h0m0 1h0m1-1h0m0-1h0m0-2h0m0-2h0m0 5h0m0-1h0m0-3h0m0 5h0m0-7h0m0 8h0m0-1h0m0-1h0m1-3h0m0 4h0m0-1h0m0 2h0m0-2h0m0 2h0m0-2h0m0 2h0m0-7h0m0 9h0m1-2h0m0-1h0m0 2h0m0-1h0m0-1h0m0-1h0m0 3h0m0-2h0m1 0h0m0-7h0m0 7h0m0 2h0m0-3h0m0-4h0m0 3h0m0 5h0m0-2h0m0 3h0m0-3h0m0 2h0m1-3h0m0-3h0m0 5h0m0-3h0m0 1h0m0-2h0m1 3h0m0-1h0m0 2h0m1 1h0m0-5h0m0 7h0m0-5h0m1 0h0m0 2h0m0 3h0m0-2h0m0-4h0m0 5h0m0-4h0m0-4h0m0 6h0m0-4h0m0 3h0m1-2h0m0 2h0m0-2h0m0 2h0m0-1h0m0 1h0m0 1h0m0 4h0m1-9h0m0 2h0m0 1h0m0-2h0m0 6h0m0-7h0m0-3h0m0 10h0m0-6h0m1-4h0m0 5h0m0 7h0m0-9h0m0 3h0m0 1h0m0-4h0m0-2h0m1 4h0m0 2h0m0-1h0m0-4h0m0-2h0m0 4h0m1-1h0m0-1h0m0 6h0m0-1h0m0-2h0m0-1h0m0 1h0m0 2h0m0-1h0m1-1h0m0 2h0m0 2h0m0-3h0m0-3h0m0 3h0m0-3h0m0 4h0m1-3h0m0 1h0m0-2h0m0 6h0m0-2h0m1 0h0m0-3h0m0 1h0m0 1h0m1 2h0m0-3h0m0-2h0m0 3h0m0 1h0m0-4h0m1 2h0m0 4h0m0-1h0m0-3h0m0 1h0m1-1h0m0 3h0m0-3h0m0 1h0m0-2h0m1 0h0m0 3h0m0-2h0m0 2h0m0-2h0m1 0h0m0 2h0m0-1h0m0-2h0m0 4h0m0-1h0m0-1h0m1 0h0m0-1h0m0 1h0m0 2h0m0-1h0m0-2h0m0 1h0m0 2h0m0-1h0m0-1h0m0 2h0m0-3h0m0 2h0m0-1h0m1-1h0m0 2h0m0-2h0m0 1h0m0 2h0m0-3h0m1 3h0m0-1h0m0-1h0m0-1h0m0 2h0m0 1h0m0-4h0m0 5h0m1-4h0m0 1h0m0 3h0m0-2h0m0 1h0m0-6h0m0 5h0m0-4h0m0 1h0m1 6h0m0-4h0m0 1h0m0-3h0m0 6h0m0-3h0m0-2h0m0 1h0m1 4h0m0-4h0m0-1h0m0-2h0m0 3h0m0 1h0m0 1h0m0-3h0m0 3h0m0-3h0m1 2h0m0-3h0m0 3h0m0-1h0m0-1h0m0-1h0m1 2h0m0 1h0m0-1h0m0 1h0m0-4h0m0 6h0m0-3h0m0-1h0m0 1h0m1 0h0m0 3h0m0-2h0m0-1h0m0-2h0m0 3h0m0-1h0m0 3h0m0-6h0m0 5h0m0-1h0m1-2h0m0 2h0m0 3h0m0-2h0m0-3h0m0-3h0m0 3h0m0 1h0m0 2h0m0-1h0m0-1h0m0-1h0m0 2h0m0-2h0m1 2h0m0-1h0m0 1h0m0-1h0m0-1h0m0 1h0m0 1h0m1-1h0m0 3h0m0-4h0m0 2h0m0-1h0m0-1h0m0 2h0m0 1h0m0-1h0m0-4h0m0 3h0m0 4h0m1-5h0m0 2h0m0 3h0m0-5h0m0 5h0m0-1h0m0-1h0m1-8h0m0 7h0m0 2h0m0-4h0m1-2h0m0 3h0m0 4h0m0-3h0m0 1h0m0-2h0m0 1h0m0-1h0m0 2h0m0-1h0m0 1h0m1-1h0m0 1h0m0-6h0m0 5h0m0 2h0m0-2h0m0-2h0m0 1h0m1 2h0m0-2h0m0 3h0m0-7h0m0-2h0m0 1h0m0 3h0m0-1h0m0 1h0m0-3h0m0 1h0m0-1h0m0 4h0m1 1h0m0 1h0m0-5h0m0-1h0m0 4h0m0-2h0m0-2h0m0 9h0m0-8h0m0 3h0m0 4h0m0-1h0m0-6h0m0-1h0m1 6h0m0-4h0m0 4h0m0-1h0m0-3h0m0 1h0m0 2h0m0 1h0m0 1h0m0-2h0m0-3h0m0 2h0m0-1h0m1 3h0m0-2h0m0 1h0m0 1h0m0-3h0m0 3h0m0-3h0m1-1h0m0 4h0m0-6h0m0 7h0m0-2h0m0-1h0m0 1h0m1-6h0m0 4h0m0-1h0m0-2h0m0 1h0m0 2h0m1 1h0m0-2h0m0 4h0m0-1h0m0-3h0m0 1h0m1 2h0m0-3h0m0 2h0m0 1h0m0-5h0m0 3h0m0 3h0m0-5h0m0 7h0m0-4h0m1-2h0m0 1h0m0-2h0m0 3h0m0-2h0m1-3h0m0 3h0m0 2h0m0 2h0m0-5h0m0 5h0m0-3h0m0 5h0m0-7h0m0 2h0m1 1h0m0-2h0m0 2h0m0-2h0m0 1h0m0 3h0m0-2h0m0 1h0m1-2h0m0 2h0m0-2h0m0-1h0m0 3h0m0 2h0m0-2h0m0 1h0m0-3h0m0 5h0m0-3h0m0-1h0m0-4h0m0 7h0m0-3h0m1-1h0m0 4h0m0-3h0m0-1h0m0 3h0m0 1h0m1-2h0m0-2h0m0 2h0m0-2h0m0 2h0m0 1h0m0-5h0m0 3h0m0-1h0m1 2h0m0-1h0m0-2h0m0 5h0m0-3h0m0-1h0m0 2h0m1-2h0m0-1h0m0 2h0m0 1h0m0-2h0m0 2h0m1 1h0m0 1h0m0-1h0m0-2h0m0 2h0m0-3h0m0 2h0m0-2h0m1 5h0m0-2h0m0-2h0m0 2h0m0-2h0m0-1h0m0 3h0m0-3h0m1 3h0m0-2h0m0 2h0m0-2h0m0 2h0m0 1h0m1-4h0m0 2h0m0-2h0m0-1h0m0 4h0m0-2h0m0 2h0m0 3h0m1-5h0m0-1h0m0 3h0m0-2h0m0 4h0m0-2h0m0 1h0m0-1h0m0 3h0m1-2h0m0-1h0m0 1h0m0-2h0m0-3h0m0 5h0m0-4h0m0 2h0m0-3h0m0 2h0m1 1h0m0 3h0m0-5h0m0 4h0m0-4h0m0 3h0m0 2h0m0-3h0m0 3h0m1-2h0m0-4h0m0-1h0m0 3h0m0-1h0m0 2h0m0-1h0m0 6h0m0-5h0m1 2h0m0-3h0m0-1h0m0 2h0m0 1h0m0-3h0m0 4h0m0-2h0m0 5h0m1 0h0m0-8h0m0 1h0m0 2h0m0-1h0m0 1h0m0 1h0m0 1h0m1 0h0m0-3h0m0 3h0m0-1h0m0-4h0m0 4h0m0-5h0m0 4h0m0-6h0m0 5h0m0-2h0m0 1h0m1 1h0m0 3h0m0-1h0m0-2h0m0 4h0m0-4h0m1 1h0m0 3h0m0-4h0m0 2h0m0-2h0m0 2h0m0-2h0m0 2h0m0-4h0m0 3h0m1-3h0m0 3h0m0-3h0m0 3h0m0-3h0m0 1h0m0 1h0m0 3h0m0-3h0m1-2h0m0 5h0m0-3h0m0-1h0m0 1h0m0 2h0m0-5h0m1 2h0m0 3h0m0-1h0m0-1h0m0-2h0m0 4h0m0-2h0m0 3h0m0-6h0m0 4h0m0 1h0m1 3h0m0-4h0m0-1h0m0 1h0m0-1h0m0 1h0m0-3h0m0 3h0m0 3h0m1 0h0m0-1h0m0-1h0m0 2h0m0-2h0m0-1h0m0 1h0m1 2h0m0-2h0m0-1h0m0 1h0m0 2h0m0-3h0m0 2h0m0-3h0m0 1h0m0 1h0m0-1h0m0 2h0m0-2h0m1 0h0m0-2h0m0 4h0m0 1h0m0-1h0m0-4h0m1 2h0m0-1h0m0 1h0m0 1h0m0 1h0m0 1h0m1-3h0m0 2h0m0-3h0m0 3h0m0-1h0m0-2h0m0 2h0m0 1h0m0-2h0m0 2h0m0 1h0m0-3h0m0-1h0m0 3h0m1-2h0m0 3h0m0-6h0m0 6h0m0-5h0m0 4h0m0-3h0m0 2h0m0 1h0m0-2h0m1-3h0m0 3h0m0 2h0m0-3h0m0 2h0m0-2h0m0 2h0m1 0h0m0-2h0m0 2h0m0-2h0m0 4h0m0-2h0m0-1h0m0-1h0m1 1h0m0-1h0m0-3h0m0 7h0m0-4h0m0-5h0m0 7h0m0-2h0m0 1h0m0-5h0m0 4h0m0 2h0m0-5h0m0 3h0m0 1h0m0-4h0m1 5h0m0-1h0m0-1h0m0-4h0m0 5h0m0 2h0m0-3h0m0 3h0m1-1h0m0-6h0m0 1h0m0 2h0m0 2h0m0 2h0m0-2h0m0 3h0m0-5h0m0 2h0m0-3h0m1-3h0m0 1h0m0 8h0m0-4h0m0 2h0m0 1h0m0-2h0m0-5h0m0 8h0m0-4h0m0 4h0m1 1h0m0-4h0m0 6h0m0-7h0m0-3h0m0 3h0m1 0h0m0 2h0m0 1h0m0-3h0m0-4h0m0 7h0m0-1h0m1-1h0m0-2h0m0 2h0m0 4h0m0-6h0m0-5h0m0 3h0m1 10h0m0-5h0m0-3h0m0 1h0m0 5h0m0-3h0m0 1h0m0 1h0m1-3h0m0-1h0m0 4h0m0-6h0m0 3h0m0-5h0m0 3h0m0 3h0m0 3h0m0-8h0m0 5h0m0-4h0m0 2h0m0 6h0m1-8h0m0 2h0m0-2h0m0 5h0m0-2h0m0-6h0m0 6h0m0-4h0m0 8h0m0-2h0m0-4h0m0-3h0m0 3h0m0 5h0m0-7h0m0 2h0m0 4h0m0 3h0m0-2h0m0-3h0m1 4h0m0-5h0m0 7h0m0-3h0m0-1h0m0 1h0m1-2h0m0-1h0m0-5h0m0 4h0m0 1h0m0-3h0m0-2h0m0 5h0m0-3h0m1 1h0m0 7h0m0-3h0m0-2h0m0-1h0m0 1h0m0 2h0m0-2h0m0 2h0m0-1h0m1-4h0m0 4h0m0-3h0m0 1h0m0 2h0m0-1h0m0-1h0m1-3h0m0 2h0m0 3h0m0 1h0m0 1h0m0-3h0m0-1h0m0-1h0m1 2h0m0-2h0m0 1h0m0-2h0m0 2h0m0-1h0m0 5h0m0-5h0m0 5h0m1-6h0m0-2h0m0 4h0m0 4h0m0-3h0m0 2h0m0-2h0m1 2h0m0-3h0m0-1h0m0 4h0m0-2h0m0-2h0m0 2h0m0-1h0m0 3h0m1-2h0m0-1h0m0 1h0m0-3h0m0 2h0m0 1h0m0 3h0m0-4h0m0-2h0m0 6h0m0-3h0m0-1h0m0-6h0m1 6h0m0 4h0m0-3h0m0-1h0m0 1h0m0-1h0m0-2h0m1 2h0m0-1h0m0 5h0m0-1h0m0-5h0m0 1h0m0 2h0m0-3h0m0 5h0m0-2h0m0-1h0m0 1h0m0-5h0m1 6h0m0-2h0m0 1h0m0 1h0m0-5h0m0 7h0m1-6h0m0 2h0m0-2h0m0 6h0m0-4h0m0 2h0m0 1h0m0-2h0m1 3h0m0-4h0m0-2h0m0 4h0m0-2h0m0 1h0m0 1h0m0 1h0m0-2h0m1 5h0m0-5h0m0 5h0m0-5h0m0-3h0m0 6h0m0-4h0m1 0h0m0 6h0m0-4h0m0-4h0m0 1h0m0 3h0m0-2h0m0 1h0m0 1h0m0-5h0m0 9h0m0-7h0m0 3h0m0-5h0m0 5h0m0-3h0m1 2h0m0-2h0m0-1h0m0 1h0m0 1h0m0-1h0m1 5h0m0-3h0m0-1h0m0-2h0m0 1h0m0 3h0m0-1h0m0 2h0m0 1h0m0-3h0m0-2h0m0 1h0m0 1h0m0-1h0m1-2h0m0 2h0m0 3h0m0 2h0m0-7h0m1 0h0m0 4h0m0-5h0m0 4h0m0-2h0m0 3h0m0-2h0m0 1h0m0 2h0m0-4h0m1 4h0m0-1h0m0 2h0m0-4h0m0 2h0m0-3h0m0 2h0m1 2h0m0 1h0m0-4h0m0-1h0m0 3h0m0-2h0m0 2h0m0-1h0m0 3h0m1-5h0m0 2h0m0 1h0m0 1h0m0-3h0m0-1h0m0 1h0m0-1h0m1 1h0m0 3h0m0-3h0m0-1h0m0 4h0m0-2h0m0-1h0m0 1h0m0 1h0m1-2h0m0 2h0m0 1h0m0-2h0m0-2h0m0 3h0m0-2h0m0 2h0m0-2h0m1 0h0m0 3h0m0-3h0m0 1h0m0-2h0m0 1h0m1-1h0m0 3h0m0-3h0m0 1h0m0 1h0m0 1h0m0-1h0m1-1h0m0 4h0m0-2h0m0-6h0m0 5h0m0-2h0m0 1h0m0-1h0m0 1h0m0-1h0m0 1h0m0 4h0m0-6h0m1 2h0m0 3h0m0-3h0m0-3h0m0-2h0m0 5h0m0-4h0m0-1h0m0 9h0m0-2h0m0-1h0m1 2h0m0-9h0m0 6h0m0-5h0m0 3h0m0 3h0m0-6h0m0 3h0m0 4h0m0-1h0m1 0h0m0 2h0m0-2h0m0-6h0m0 5h0m0-1h0m0-3h0m1 0h0m0 3h0m0 1h0m0-3h0m0 4h0m0-1h0m0-3h0m0 1h0m0 1h0m0-5h0m0 9h0m0-4h0m1 2h0m0-1h0m0-1h0m0 2h0m0-4h0m0 1h0m0 2h0m0 3h0m1-4h0m0-1h0m0 2h0m0-1h0m0 1h0m0-1h0m0 2h0m0 1h0m0-1h0m1-2h0m0 3h0m0 3h0m0-6h0m0 2h0m0-1h0m0 1h0m0-1h0m1 1h0m0-2h0m0 1h0m0-1h0m0 2h0m0 1h0m0-3h0m0 1h0m0 4h0m0-3h0m0-1h0m0 1h0m0-4h0m0 3h0m1-1h0m0 3h0m0-1h0m0-1h0m0 2h0m0-1h0m0 1h0m0 1h0m0-4h0m0 1h0m1 2h0m0-3h0m0 4h0m0-1h0m0-2h0m0-1h0m1 3h0m0-1h0m0-1h0m0 2h0m0-1h0m0-2h0m0 2h0m0-1h0m0 1h0m1-2h0m0 3h0m0 1h0m0-1h0m0-1h0m0-1h0m0 2h0m0-2h0m0-1h0m0 3h0m1-3h0m0 4h0m0-1h0m0-2h0m0 4h0m0-3h0m0-1h0m0-1h0m0 5h0m0-2h0m0-1h0m0-1h0m0 6h0m1-4h0m0-4h0m0 2h0m0 4h0m0-5h0m0 5h0m0-1h0m1-3h0m0 3h0m0-1h0m0-1h0m0 2h0m0-1h0m0-2h0m0-1h0m0 4h0m1-2h0m0 2h0m0-2h0m0 2h0m0-2h0m0 1h0m0-4h0m0 3h0m1-2h0m0-1h0m0 4h0m0-1h0m0 2h0m0-3h0m1 4h0m0-6h0m0 3h0m0 4h0m0-3h0m0-3h0m0 3h0m0-7h0m0 5h0m1 2h0m0-2h0m0-1h0m0 1h0m0-4h0m0 4h0m0 3h0m1-2h0m0-2h0m0 5h0m0-4h0m0-1h0m1 1h0m0 1h0m0 1h0m0 3h0m0-6h0m0 4h0m0-3h0m0 2h0m0-2h0m0 3h0m0-4h0m0 1h0m0-1h0m0 1h0m1 4h0m0-2h0m0-1h0m0-5h0m0 3h0m0 1h0m0-4h0m0 3h0m0 2h0m0 2h0m0-3h0m0 4h0m1-3h0m0 2h0m0 2h0m0-9h0m0 5h0m0-1h0m0-5h0m0 3h0m0 2h0m1 2h0m0-3h0m0-2h0m0 3h0m0 4h0m0-5h0m0 3h0m0 2h0m0-3h0m0-2h0m0 5h0m1-5h0m0 2h0m0-1h0m0 1h0m0 4h0m0-3h0m0 1h0m0-3h0m0 2h0m0 2h0m0-8h0m0 5h0m1 5h0m0-6h0m0-2h0m0 2h0m1-1h0m0 1h0m0 2h0m1 1h0m0-4h0m0 1h0m0 7h0m0-8h0m0 4h0m0-5h0m0 4h0m0 1h0m1 0h0m0-1h0m0-1h0m0-2h0m0-2h0m0 6h0m0-2h0m1-1h0m0 3h0m0 2h0m0-4h0m0-6h0m0 6h0m0 3h0m0-1h0m0-7h0m0-1h0m0 7h0m0-1h0m0 1h0m0-1h0m0-6h0m0 1h0m0 6h0m0-6h0m1 6h0m0-8h0m0 3h0m0 4h0m0-5h0m0 7h0m0 2h0m0-4h0m0 2h0m0-1h0m0-1h0m0-3h0m1-2h0m0-2h0m0 7h0m0-1h0m0-5h0m0 8h0m0-6h0m0 4h0m0-5h0m0 5h0m0-4h0m0 2h0m1 3h0m0 1h0m0-4h0m0-3h0m0 7h0m0-9h0m0 2h0m0 5h0m0 1h0m1-3h0m0 2h0m0 1h0m0-4h0m0-1h0m0 4h0m0 1h0m0 1h0m0-3h0m1 1h0m0 2h0m0-3h0m0 1h0m0-1h0m0 1h0m0 3h0m0-2h0m0-2h0m0-4h0m0 7h0m1-3h0m0 1h0m0-1h0m0 3h0m0-4h0m0-1h0m1 6h0m0-5h0m0 3h0m0-4h0m0 1h0m0 6h0m0-1h0m0-4h0m1 1h0m0 3h0m0-1h0m0-1h0m0-3h0m0-1h0m0 3h0m0 1h0m0 1h0m0 1h0m0-3h0m1 0h0m0 3h0m0-4h0m0 3h0m0-4h0m0-3h0m0 6h0m0-1h0m0 2h0m0-2h0m0 3h0m0-4h0m0 5h0m1-4h0m0 1h0m0-2h0m0 1h0m0-1h0m0-3h0m0 4h0m0-1h0m0-2h0m0 5h0m0-3h0m0 2h0m0 2h0m0 1h0m1-5h0m0 1h0m0-2h0m0 2h0m0-1h0m0-1h0m0 2h0m0 1h0m0-1h0m0 2h0m0-8h0m0 5h0m1 2h0m0-3h0m0 4h0m0-1h0m0-2h0m0 1h0m0 1h0m0-2h0m1 0h0m0-2h0m0 3h0m0 1h0m0-6h0m0 1h0m0 3h0m0 2h0m0 2h0m0-9h0m0 7h0m0-1h0m0-1h0m0 1h0m0-1h0m0-4h0m1 0h0m0 7h0m0-2h0m0 1h0m0-6h0m1-2h0m0 6h0m0 3h0m0-2h0m0 2h0m0-3h0m0 4h0m0-2h0m0-5h0m0 6h0m0-6h0m0 3h0m0-2h0m1-3h0m0 7h0m0-1h0m0-2h0m0 6h0m0-6h0m0 3h0m0 1h0m0-2h0m0-3h0m0 4h0m0-3h0m1 5h0m0-5h0m0 4h0m0-2h0m0-1h0m0-2h0m1 4h0m0-1h0m0 1h0m0-3h0m0-1h0m0 4h0m0-4h0m0 5h0m0-3h0m1 1h0m0 2h0m0 2h0m1-4h0m0 2h0m0-5h0m0 4h0m0 2h0m0-2h0m0-3h0m0 4h0m0-3h0m0-3h0m0 4h0m1 0h0m0 1h0m0 1h0m0-1h0m1-3h0m0 2h0m0-6h0m0 6h0m0-3h0m0 3h0m0-4h0m0 2h0m0-2h0m0 3h0m0-1h0m0 1h0m0 2h0m0-5h0m0 4h0m1-2h0m0-2h0m0 3h0m0 1h0m0-2h0m0 1h0m0 2h0m1 0h0m0-6h0m0 6h0m0-4h0m0 4h0m0-1h0m0 1h0m0-3h0m1 0h0m0 2h0m0-2h0m0 3h0m0-3h0m0 6h0m0-2h0m0-2h0m0-1h0m0 1h0m0 1h0m0-1h0m0-3h0m0 4h0m0-2h0m1-4h0m0 4h0m0 1h0m0-3h0m0 2h0m0-1h0m0 2h0m1 0h0m0-1h0m0 2h0m0-1h0m0-1h0m0 1h0m0-1h0m0-1h0m0 2h0m0-3h0m0 1h0m0 3h0m1 0h0m0-1h0m0 1h0m0-1h0m0-1h0m0 2h0m0-1h0m1 0h0m0-1h0m0 2h0m0 1h0m0-2h0m0 1h0m0-2h0m0 1h0m0 3h0m0-4h0m0 3h0m0-1h0m0 3h0m1-4h0m0-2h0m0 1h0m0 3h0m0-7h0m0 7h0m0-3h0m0-1h0m0 5h0m0-5h0m0 5h0m0-5h0m1 2h0m0 2h0m0 1h0m0 2h0m1-7h0m0 1h0m0-1h0m0 1h0m0-1h0m0 3h0m0-3h0m0 1h0m0 5h0m0-1h0m1-5h0m0 1h0m0 2h0m0-1h0m0 1h0m0 5h0m1-2h0m0-6h0m0 1h0m0-4h0m0 4h0m0-3h0m0 7h0m0-3h0m0-2h0m0 2h0m0 4h0m1-5h0m0-2h0m0 1h0m0-3h0m0 7h0m0 1h0m0-3h0m0-4h0m1-2h0m0 5h0m0-2h0m0 2h0m0 5h0m0-5h0m1 1h0m0-3h0m0 2h0m0 6h0m0-2h0m0-2h0m0-4h0m0 2h0m1 0h0m0 1h0m0-3h0m0 1h0m0 1h0m0 2h0m0 1h0m0-8h0m0 6h0m1 3h0m0-3h0m0 1h0m0 1h0m0-8h0m0 2h0m0 5h0m0-2h0m0 2h0m0-1h0m0-1h0m0-2h0m0-2h0m0 6h0m1-3h0m0 3h0m0 2h0m0-4h0m0 1h0m0 1h0m0-2h0m0-1h0m0-5h0m1 3h0m0 7h0m0 1h0m0-3h0m0-6h0m0 7h0m0-3h0m0 3h0m0-2h0m0-5h0m0 6h0m0-2h0m0 2h0m0 3h0m0-4h0m0-1h0m1 3h0m0-2h0m0-4h0m0 3h0m0 4h0m0-6h0m0 4h0m0-3h0m0 2h0m0-7h0m0 9h0m0-5h0m0-1h0m0 4h0m1-5h0m0 4h0m0-1h0m0 1h0m0-2h0m0 7h0m0-8h0m0 1h0m0 4h0m0-1h0m0 6h0m0-7h0m1 2h0m0-2h0m0 1h0m0-4h0m0 5h0m0-5h0m0 5h0m0-1h0m0-1h0m0 4h0m0-7h0m0 3h0m1 1h0m0-5h0m0 6h0m0 1h0m1 0h0m0-4h0m0 4h0m0-3h0m0 1h0m1 4h0m0-5h0m0-2h0m0 2h0m0 1h0m0 1h0m0-1h0m1 2h0m0-1h0m0 1h0m0-4h0m0 4h0m0-3h0m0 2h0m0-2h0m0 4h0m0-4h0m1 3h0m0-4h0m0 4h0m0-1h0m0 2h0m0-2h0m0 1h0m0-2h0m0 1h0m1 0h0m0-2h0m0 2h0m0 2h0m0-1h0m0-1h0m0-3h0m0-1h0m1 1h0m0 2h0m0 1h0m0-2h0m0 1h0m0-1h0m1-1h0m0 2h0m0-1h0m0 1h0m0 1h0m0-1h0m0-1h0m0-1h0m0 3h0m1-1h0m0 1h0m0-4h0m0 3h0m0 1h0m0-2h0m0 2h0m0-1h0m0-2h0m0-1h0m1 2h0m0-1h0m0 3h0m0-2h0m0 1h0m0-5h0m0 4h0m0-3h0m0 6h0m0-1h0m0-1h0m0 2h0m0-3h0m0-3h0m1 5h0m0-5h0m0-1h0m0 6h0m0-1h0m0 1h0m0-2h0m0 4h0m0-2h0m0-7h0m0 1h0m0 6h0m0 4h0m0-12h0m0 7h0m1-5h0m0 4h0m0 1h0m0-4h0m0-1h0m0 6h0m0-1h0m0-1h0m0 3h0m0 2h0m0-8h0m1 3h0m0 3h0m0 4h0m0-5h0m0 1h0m0 1h0m0-3h0m0-3h0m0 5h0m1-2h0m0 3h0m0-3h0m0 1h0m0-4h0m0 1h0m0 3h0m0 3h0m0-2h0m0-4h0m1 5h0m0-6h0m0 5h0m0-2h0m0 1h0m0 1h0m0-1h0m0 1h0m0-2h0m1-1h0m0 5h0m0-1h0m0-4h0m0 5h0m0-5h0m0 1h0m0-3h0m0 5h0m0 3h0m0-5h0m0 3h0m0-2h0m1-1h0m0-4h0m0 6h0m0-3h0m0-1h0m0 1h0m0-1h0m0 1h0m0 2h0m0-5h0m0 4h0m0-1h0m1 0h0m0 1h0m0-1h0m0-2h0m0 4h0m0 1h0m0-4h0m0-1h0m1 6h0m0-5h0m0 1h0m0 2h0m0-1h0m0-3h0m0 3h0m0 1h0m0-1h0m0 6h0m1-7h0m0 2h0m0-3h0m0 4h0m0-2h0m0-1h0m0 4h0m0-5h0m0 3h0m0-2h0m1-3h0m0 4h0m0 1h0m0-2h0m0 2h0m0-3h0m0 2h0m0-1h0m0 3h0m0-4h0m0 5h0m1-8h0m0 5h0m0-2h0m0-1h0m0 2h0m0 1h0m0-2h0m0 2h0m0 2h0m0-2h0m1-2h0m0 5h0m0-4h0m0 1h0m0-1h0m0 1h0m0-1h0m0-1h0m0-2h0m0 4h0m0-2h0m1 0h0m0 1h0m0-1h0m0 4h0m0-1h0m0-2h0m0 2h0m1-1h0m0-3h0m0 3h0m0-2h0m0 4h0m0-5h0m0 1h0m0 1h0m0 2h0m0-2h0m0 1h0m0-2h0m1 3h0m0-3h0m0 2h0m0-2h0m0 3h0m0-1h0m0 1h0m1 0h0m0-4h0m0 5h0m0-2h0m0 1h0m0-2h0m0 2h0m0-2h0m0-1h0m1 3h0m0-1h0m0 3h0m0-3h0m0 1h0m0-1h0m0-1h0m0 3h0m0-4h0m1 1h0m0-1h0m0 2h0m0 1h0m0-1h0m0 1h0m0-2h0m0 2h0m1-2h0m0 1h0m0 2h0m0-5h0m0 2h0m1 2h0m0-7h0m0 8h0m0-5h0m0 3h0m0-1h0m0-1h0m0 1h0m0 4h0m0-4h0m1 1h0m0-3h0m0-1h0m0 2h0m0 2h0m0-1h0m0-1h0m1 2h0m0 3h0m0 2h0m0-7h0m0 6h0m0-2h0m1-3h0m0 1h0m0-3h0m0 5h0m0-3h0m0-2h0m0 2h0m0 4h0m0-5h0m0 1h0m0-3h0m1 5h0m0-5h0m0 8h0m0-8h0m0 2h0m0 4h0m0-8h0m0 3h0m1 4h0m0-7h0m0 4h0m0 4h0m0-9h0m0 1h0m0 2h0m0 1h0m0 6h0m0-8h0m0 6h0m1 0h0m0 3h0m0-4h0m0 2h0m0-1h0m0-6h0m0 1h0m0 2h0m0 3h0m0-1h0m0-1h0m0-1h0m0 2h0m0-5h0m0 7h0m0-6h0m0 8h0m0-10h0m0 7h0m1-3h0m0 2h0m0-2h0m0 5h0m0-1h0m0-8h0m0 9h0m0-2h0m0-2h0m0-2h0m1 4h0m0-2h0m0 5h0m0-4h0m0-1h0m0 1h0m0-5h0m0 5h0m1 2h0m0-2h0m0-2h0m0-2h0m0-1h0m0 2h0m0 6h0m0-5h0m0 2h0m0 3h0m0-4h0m0 3h0m0-3h0m1-3h0m0 2h0m0 1h0m0-5h0m0 2h0m0 5h0m0-2h0m0 1h0m0-1h0m0-1h0m0 1h0m1-2h0m0 3h0m0 1h0m0-2h0m0 6h0m0-5h0m0-3h0m0 5h0m0-4h0m0 5h0m0 1h0m0-4h0m0 2h0m1-1h0m0 1h0m0-1h0m0-3h0m0-1h0m0 4h0m0 1h0m0-6h0m0 4h0m0 2h0m0-1h0m1-2h0m0 3h0m0-6h0m0 7h0m0-2h0m0-1h0m0-2h0m0 4h0m0 1h0m1-4h0m0-3h0m0 7h0m0-6h0m0 3h0m0-1h0m0 1h0m0-3h0m0 5h0m0-1h0m0 3h0m0-1h0m0-3h0m1 2h0m0-3h0m0-2h0m0-3h0m0 7h0m0 2h0m0 1h0m0-5h0m1-1h0m0 2h0m0 2h0m0 3h0m0-9h0m0 5h0m0 1h0m0 2h0m0-10h0m0 4h0m0-3h0m0-1h0m0 7h0m0-1h0m0-1h0m0 3h0m0-2h0m1-3h0m0 4h0m0 4h0m0-12h0m0 4h0m0-1h0m0 5h0m1-5h0m0 5h0m0-3h0m0-2h0m0 3h0m0-1h0m0 4h0m0 1h0m1-3h0m0 1h0m0-3h0m0 4h0m0 2h0m0-7h0m0 4h0m0-5h0m0 2h0m0 5h0m0-8h0m1 6h0m0-4h0m0 3h0m0-1h0m0-5h0m0 9h0m0-7h0m0 5h0m1 0h0m0-2h0m0-1h0m0-1h0m0 1h0m0 3h0m0-1h0m0-6h0m0 5h0m0 2h0m0-1h0m0-3h0m0 1h0m1 8h0m0-4h0m0-5h0m0 5h0m0-1h0m0 1h0m0-7h0m1 2h0m0 2h0m0 5h0m0-5h0m0 3h0m1 1h0m0 2h0m0-4h0m0-2h0m0 1h0m0 5h0m0-6h0m0 1h0m0 1h0m0 2h0m0-1h0m1 0h0m0 3h0m0-4h0m0-6h0m0 8h0m0 2h0m0-6h0m1 5h0m0-2h0m0-4h0m0-2h0m0 3h0m0-1h0m0 5h0m0-5h0m0 5h0m0-3h0m1-1h0m0-1h0m0 2h0m0-1h0m0 2h0m0-4h0m0 3h0m0-1h0m1 1h0m0-2h0m0 3h0m0 1h0m0-1h0m0-1h0m0-1h0m0-3h0m0 4h0m0-4h0m0 6h0m0-4h0m0 1h0m0 1h0m1-2h0m0 5h0m0-2h0m0-1h0m0 2h0m0 2h0m0-4h0m0 5h0m0-3h0m0-2h0m0 1h0m0 2h0m0-1h0m0-1h0m1-3h0m0 2h0m0 1h0m0-1h0m0 1h0m0-2h0m0 3h0m0-1h0m0-3h0m0 7h0m0-8h0m0 7h0m0-5h0m1 0h0m0 3h0m0-4h0m0-4h0m0 4h0m0 5h0m0-6h0m0 8h0m0-2h0m0-1h0m0-4h0m0 6h0m1-2h0m0 1h0m0-1h0m0-3h0m1 4h0m0-6h0m0 3h0m0-4h0m0 4h0m1-2h0m0 4h0m0 3h0m1-9h0m0 6h0m0-3h0m0-1h0m0-2h0m1 3h0m0 6h0m0-6h0m1 2h0m0-6h0m0 1h0m0 4h0m0-4h0m1 4h0m0 3h0m0 1h0m0-5h0m0-4h0m0 4h0m0 6h0m1-6h0m0-2h0m0 6h0m0-4h0m0-4h0m0 8h0m0-3h0m0 4h0m0-6h0m0 3h0m0-4h0m0 7h0m0-2h0m0-2h0m0 1h0m0-2h0m1-3h0m0 5h0m0-2h0m0 3h0m0-2h0m0-1h0m0 1h0m0-2h0m1-2h0m0 2h0m0-3h0m0 6h0m0-6h0m0 3h0m0 1h0m1 4h0m0-5h0m0 1h0m0-2h0m0-4h0m0 8h0m0 1h0m0-7h0m0 6h0m0 2h0m1-2h0m0-2h0m0-4h0m0 8h0m0-4h0m0 5h0m0-4h0m0-6h0m0 8h0m1-3h0m0 4h0m0-1h0m0-4h0m0 5h0m0-1h0m0-1h0m0 2h0m0 2h0m1-6h0m0 4h0m0-4h0m0 4h0m0 2h0m0-9h0m0 5h0m0-5h0m0 7h0m0 2h0m0-7h0m1 4h0m0-1h0m0-7h0m0 2h0m0 1h0m0 3h0m0-5h0m0 10h0m0-4h0m0-6h0m0-2h0m0 8h0m1-2h0m0-3h0m0 1h0m0 2h0m0-3h0m0-1h0m0 5h0m0-2h0m0-5h0m0 1h0m0 2h0m0 5h0m1-7h0m0 5h0m0-3h0m0 6h0m0-4h0m0-3h0m0 2h0m0-1h0m0-1h0m0 5h0m0-3h0m0 3h0m0-6h0m1 4h0m0-5h0m0 8h0m0 5h0m0-4h0m0-2h0m0 1h0m0 1h0m0-1h0m1 0h0m0-1h0m0 2h0m0-3h0m0 2h0m0-5h0m0 6h0m0 1h0m1-3h0m0-1h0m0 2h0m0-1h0m0 1h0m0 1h0m0-4h0m0 2h0m1-1h0m0 2h0m0-2h0m0-1h0m0 2h0m1 3h0m0-4h0m0 1h0m0 1h0m0-4h0m0 4h0m0 2h0m0-3h0m0-3h0m0 1h0m1 1h0m0 1h0m0 1h0m0-3h0m0 1h0m0-2h0m0 5h0m0-3h0m0 2h0m1-2h0m0 2h0m0-3h0m0 1h0m0 3h0m0-1h0m0-2h0m0 6h0m0-3h0m0-4h0m0 3h0m1-3h0m0 4h0m0 1h0m0-3h0m0-3h0m1 4h0m0-1h0m0 3h0m0-1h0m1-3h0m0 6h0m0-7h0m0 1h0m0-2h0m0 1h0m0-1h0m0 2h0m0 1h0m0-1h0m0-2h0m0 6h0m1-4h0m0 3h0m0-2h0m0-3h0m0 5h0m0-4h0m1-1h0m0 4h0m0-4h0m0 4h0m0 3h0m0-9h0m0 8h0m0-2h0m1-1h0m0 1h0m0 1h0m0-1h0m0 2h0m0-4h0m0 1h0m0-1h0m0 4h0m0-5h0m0 3h0m0-1h0m1-3h0m0 3h0m0 3h0m0-6h0m0 2h0m0-2h0m1 1h0m0 4h0m0-1h0m0-4h0m0 1h0m0-2h0m0 7h0m0-1h0m0-4h0m0 3h0m1 0h0m0-1h0m0 3h0m0-2h0m0-2h0m1-2h0m0 2h0m0 4h0m0-3h0m1 1h0m0-3h0m0 5h0m0-4h0m0 3h0m0-2h0m0-1h0m0 3h0m0-1h0m0-3h0m0 2h0m0 2h0m0-3h0m1 5h0m0-1h0m0-2h0m0 1h0m0-1h0m0-1h0m0-2h0m0 1h0m1 0h0m0 2h0m0-1h0m0-4h0m0 4h0m0-1h0m0 1h0m0 2h0m0-4h0m0 1h0m0-1h0m0 2h0m0-1h0m1 4h0m0-4h0m0-4h0m0 6h0m0-1h0m0-2h0m0 2h0m0-1h0m0 2h0m0-5h0m1 3h0m0 1h0m0-1h0m0-1h0m0 1h0m0-2h0m0 1h0m0 2h0m0 1h0m0-1h0m0-2h0m0 3h0m1-3h0m0 2h0m0 1h0m0-3h0m0 2h0m0-1h0m1 0h0m0 2h0m0-1h0m0 1h0m0-1h0m0-1h0m0 2h0m0-3h0m0-1h0m0 3h0m0-1h0m1 0h0m0 1h0m0 1h0m0-3h0m0 3h0m0-2h0m1 2h0m0-2h0m0 3h0m0-1h0m0-1h0m1 0h0m0 1h0m0-2h0m0 3h0m0-2h0m0-1h0m0 2h0m0-2h0m0 1h0m0-1h0m0 1h0m0-2h0m1 1h0m0 1h0m0-2h0m0 2h0m1-1h0m0-1h0m0-1h0m0 2h0m0-1h0m0 2h0m0-2h0m1 1h0m0 1h0m0-1h0m0-2h0m0 3h0m0-3h0m0 2h0m0 1h0m0-1h0m1 0h0m0-1h0m0 1h0m0-1h0m0 4h0m0-2h0m0-1h0m0-1h0m0 2h0m0 1h0m0-2h0m1 0h0m0-1h0m0 2h0m0-1h0m0 2h0m0-1h0m1 2h0m0-1h0m0-2h0m0 3h0m0-2h0m0-1h0m0-1h0m0 3h0m0-2h0m0 1h0m0-1h0m0 1h0m0 1h0m1-3h0m0 1h0m0 1h0m0 1h0m0-1h0m0-4h0m0 4h0m0-1h0m0 3h0m1-2h0m0-2h0m0 4h0m0-1h0m0-1h0m0-1h0m0 1h0m0-2h0m0 3h0m1-3h0m0 1h0m0 4h0m0-2h0m0 1h0m0-1h0m0 1h0m0-1h0m0-2h0m1 1h0m0-2h0m0 1h0m0 1h0m0-2h0m0 3h0m0 2h0m0-3h0m0-2h0m0 2h0m0-1h0m0 2h0m0-1h0m0 2h0m0-8h0m0 6h0m0-5h0m0 6h0m1-1h0m0-5h0m0 6h0m0 1h0m0-6h0m0 7h0m0-3h0m0-6h0m0 6h0m0-6h0m0 2h0m0 3h0m1-4h0m0 4h0m0-1h0m0-2h0m0 4h0m0-7h0m0 7h0m0-1h0m0 1h0m0-3h0m0 2h0m0 1h0m0-6h0m0 5h0m0 1h0m0 4h0m0-3h0m0-8h0m1 0h0m0 1h0m0-1h0m0 3h0m0 4h0m0 3h0m0-8h0m1 4h0m0 2h0m0-6h0m0 5h0m0 3h0m0-1h0m0-2h0m0-6h0m0 3h0m0 5h0m0 1h0m0-3h0m1 3h0m0-5h0m0-1h0m0 5h0m0-7h0m0 7h0m0 3h0m1-1h0m0-2h0m0-4h0m0 6h0m0-3h0m0 1h0m0-3h0m0 3h0m0 1h0m1 0h0m0-5h0m0 2h0m0-1h0m1 2h0m0-2h0m0 6h0m0-11h0m0 8h0m0-4h0m0 7h0m1-9h0m0 6h0m0 4h0m0-4h0m0-5h0m0 3h0m0-1h0m1-3h0m0 4h0m0 2h0m0-4h0m0-2h0m0 1h0m0 2h0m0 4h0m0-5h0m1 1h0m0 2h0m0-2h0m0 1h0m0-5h0m0 4h0m0 2h0m0-5h0m0 4h0m1-2h0m0 3h0m0-2h0m0-1h0m0-2h0m0 3h0m0 6h0m0-4h0m0-2h0m1-2h0m0 6h0m0-4h0m0-3h0m0 7h0m0-2h0m0-1h0m0 1h0m0-3h0m0 5h0m1 0h0m0-6h0m0 2h0m0 2h0m0 5h0m0-9h0m0 6h0m0-4h0m0 2h0m0 5h0m0-6h0m0-3h0m1 1h0m0 3h0m0 4h0m0-4h0m0 5h0m0-11h0m0 8h0m0-5h0m0 5h0m0-3h0m1-3h0m0 5h0m0 1h0m0-2h0m1 1h0m0 1h0m0-4h0m0 1h0m0-4h0m0 3h0m0 3h0m1-6h0m0 3h0m0-1h0m0-1h0m0 6h0m0-6h0m0 4h0m0-2h0m0-4h0m1 8h0m0-3h0m0-2h0m0 6h0m0-3h0m0-3h0m0 3h0m0-1h0m1 1h0m0 3h0m0-2h0m0-1h0m0 4h0m0-5h0m0-3h0m0 2h0m0 1h0m0-1h0m1 2h0m0-2h0m0-2h0m0 2h0m0-2h0m1 3h0m0 2h0m0-4h0m0 1h0m0 1h0m1-1h0m0 3h0m0-6h0m0-1h0m1 9h0m0-5h0m0 1h0m0-1h0m0 7h0m0-7h0m0 1h0m0 1h0m1-3h0m0 4h0m0-1h0m0-2h0m0 2h0m0 2h0m0-3h0m0-4h0m0 1h0m1 2h0m0 2h0m0-3h0m0 1h0m0 1h0m0-2h0m0 3h0m0-1h0m1 2h0m0-4h0m0 3h0m0-8h0m0 7h0m0 1h0m0-2h0m0-1h0m1 2h0m0-1h0m0 1h0m0 1h0m0-3h0m0 2h0m0-1h0m0 1h0m0-2h0m0 2h0m1-1h0m0 2h0m0-3h0m0-1h0m0 1h0m0 3h0m0-2h0m0 2h0m1-3h0m0 1h0m0-2h0m0 3h0m1-2h0m0 2h0m0-1h0m0-1h0m0 5h0m0-3h0m0-2h0m0-1h0m0 2h0m0 1h0m1 1h0m0-1h0m0 1h0m0-2h0m0 2h0m0-3h0m0 1h0m0 1h0m1-2h0m0 1h0m0 1h0m0 1h0m0-2h0m0-1h0m1 0h0m0 1h0m0-1h0m0 1h0m0-1h0m0 1h0m0 1h0m1-2h0m0 1h0m0 1h0m0-2h0m0 1h0m0-1h0m0 1h0m1-1h0m0 7h0m0-4h0m0-2h0m0-1h0m0 2h0m0-1h0m0 2h0m1-2h0m0 1h0m0-1h0m0 2h0m0-1h0m0-1h0m1-1h0m0 3h0m0-3h0m0 2h0m0 2h0m1-1h0m0-1h0m0 1h0m0-3h0m0 3h0m0-1h0m0 2h0m0-3h0m0 3h0m0-4h0m0 1h0m0 2h0m1 0h0m0 2h0m0-2h0m0-2h0m0-5h0m0 7h0m1 0h0m0-7h0m0 8h0m0-4h0m0 3h0m0-1h0m0-5h0m0 5h0m0-1h0m0 1h0m0-1h0m0-2h0m1-1h0m0 4h0m0-3h0m0 4h0m0-5h0m0 4h0m0-2h0m0-4h0m0 7h0m0-1h0m0-6h0m0-1h0m1 6h0m0-5h0m0 4h0m0 3h0m0-8h0m0 7h0m0-5h0m0 4h0m0-3h0m0 5h0m0-7h0m0 4h0m1 3h0m0 1h0m0-4h0m0-4h0m0 5h0m0 2h0m0-1h0m0-3h0m0 4h0m0-2h0m0-3h0m0 6h0m0-3h0m1 1h0m0-2h0m0-1h0m0 4h0m0-5h0m0 5h0m0-1h0m0-2h0m1-1h0m0-1h0m0 6h0m0 1h0m0-3h0m1-6h0m0 6h0m0-6h0m0 6h0m0-3h0m1 4h0m0 3h0m0-7h0m0 5h0m0-6h0m0 7h0m0-6h0m0 3h0m0-1h0m0-2h0m1 0h0m0 3h0m0-4h0m0 4h0m0 3h0m0 1h0m1-8h0m0 5h0m0-2h0m0-1h0m0 2h0m0-2h0m0 1h0m0-1h0m0 3h0m0-1h0m0-2h0m1 1h0m0 1h0m0 2h0m0-3h0m0 1h0m0 1h0m0-3h0m0 1h0m0-1h0m0-1h0m0 1h0m1 0h0m0 2h0m0-1h0m0-1h0m0 2h0m0-2h0m0 1h0m0 1h0m0-1h0m0 4h0m1-2h0m0-1h0m0 1h0m0-1h0m0-1h0m0 1h0m0 1h0m0-1h0m1 0h0m0-1h0m0 1h0m0 1h0m0-1h0m0-1h0m0 1h0m0 6h0m0-8h0m0 2h0m0 2h0m0-3h0m1 1h0m0-2h0m0 2h0m0-1h0m0 1h0m1-2h0m0 2h0m0-1h0m0 2h0m0-2h0m0 1h0m1-3h0m0 2h0m0-2h0m0 1h0m0 2h0m0-2h0m0-1h0m0 2h0m0-2h0m1-1h0m0 2h0m0 1h0m0-1h0m0-1h0m0 2h0m0-2h0m0 3h0m0-3h0m0 3h0m0 1h0m1 0h0m0-1h0m0-1h0m0 2h0m0-1h0m1 2h0m0-1h0m0-1h0m0 2h0m0-1h0m0-1h0m1 0h0m0 1h0m1-3h0m0 2h0m0 1h0m0-2h0m0-1h0m0 2h0m0 6h0m0-4h0m0-2h0m0 1h0m0 1h0m0-1h0m1-2h0m0 1h0m0-1h0m0-1h0m0 2h0m0-1h0m0 1h0m1-4h0m0-1h0m0 4h0m0 1h0m0 1h0m0-3h0m0 1h0m0 5h0m0-3h0m0-1h0m0 1h0m0-1h0m0-1h0m1-1h0m0-1h0m0 1h0m0 1h0m0 3h0m0-3h0m0 2h0m0 1h0m0-1h0m1 1h0m0-6h0m0 6h0m0-1h0m0-1h0m0-1h0m0 4h0m0-2h0m0 3h0m0-5h0m1 0h0m0 2h0m0-1h0m0-3h0m0 4h0m0-1h0m0-4h0m0 4h0m0 1h0m0 2h0m0-1h0m1-2h0m0 1h0m0-1h0m0 3h0m0-8h0m0 3h0m0-5h0m0 6h0m1 1h0m0 2h0m0-2h0m0 2h0m0 1h0m0-1h0m0-2h0m0 2h0m0-3h0m0 1h0m1 2h0m0-4h0m0 4h0m0-3h0m0 2h0m0-1h0m0 1h0m0-3h0m0 2h0m0 1h0m1-1h0m0 1h0m0-3h0m0 1h0m0 3h0m0-1h0m1-1h0m0 2h0m0-3h0m0 3h0m0 1h0m0-3h0m0-1h0m0 4h0m0-6h0m0 3h0m1-1h0m0 3h0m0-4h0m0 2h0m0-1h0m0 2h0m0-3h0m1 1h0m0 5h0m0-4h0m0-1h0m0 2h0m0-4h0m0 1h0m0 1h0m0 1h0m1 1h0m0-1h0m0 1h0m0 1h0m0-1h0m0-1h0m1-1h0m0 3h0m0-1h0m0 1h0m0-2h0m0 1h0m0-3h0m0-1h0m0 2h0m1 0h0m0 1h0m0-1h0m0 3h0m0-3h0m0 1h0m0-1h0m0 3h0m0 1h0m1-5h0m0 3h0m0 1h0m0-1h0m1-1h0m0 3h0m0-2h0m0-2h0m0 1h0m0-1h0m1 0h0m0 2h0m0 1h0m0-6h0m0 4h0m0-5h0m0 7h0m1-4h0m0 2h0m0-1h0m0 2h0m0-2h0m0-2h0m1-3h0m0 5h0m0-1h0m0 1h0m0-2h0m0-2h0m0 3h0m0 2h0m0-6h0m0 4h0m0-2h0m0 3h0m1-3h0m0 3h0m0 1h0m0 1h0m0-2h0m0 2h0m0-1h0m0-3h0m0 2h0m0 2h0m0-2h0m0-4h0m1-1h0m0 4h0m0 2h0m0-1h0m0 2h0m0-1h0m0 1h0m0-6h0m0 7h0m0-2h0m0-1h0m0 2h0m1-2h0m0 3h0m0-3h0m0 1h0m0 2h0m0 1h0m0-2h0m0 1h0m0-1h0m0-1h0m1 0h0m0 2h0m0 1h0m0-2h0m0 2h0m0-4h0m0 1h0m1 2h0m0-2h0m0-1h0m0 1h0m0 4h0m0-4h0m0-1h0m0-1h0m0 4h0m1-2h0m0 4h0m0-1h0m0-4h0m0 3h0m0 2h0m0-4h0m1-1h0m0-1h0m0 1h0m0-1h0m0 2h0m0-1h0m0 1h0m0-2h0m0 3h0m1 0h0m0-2h0m0 1h0m0 1h0m0-1h0m0-3h0m0 3h0m0-1h0m0-2h0m1 1h0m0 2h0m0-1h0m0 1h0m0-2h0m0 2h0m0-1h0m1 0h0m0 2h0m0-3h0m0 1h0m0-1h0m0 2h0m0-1h0m0-3h0m0 2h0m0 2h0m1-1h0m0 1h0m0-1h0m0 1h0m0 1h0m0 1h0m0-5h0m0 2h0m0 2h0m1-1h0m0 2h0m0-3h0m0 2h0m0-1h0m0 1h0m0-2h0m0 1h0m0-1h0m0-3h0m0 4h0m1 0h0m0 2h0m0-4h0m0-1h0m0 5h0m0 1h0m0-5h0m0 1h0m0 2h0m0-1h0m0-1h0m1-1h0m0 4h0m0-2h0m0-3h0m0 4h0m1-1h0m0 1h0m0-2h0m1 1h0m0 5h0m0-6h0m0 1h0m0 3h0m0-1h0m0 2h0m0-1h0m0-5h0m0 4h0m1-2h0m0-3h0m0 1h0m0 2h0m0 3h0m0-1h0m0-1h0m1-2h0m0 1h0m0 1h0m0 1h0m0-2h0m0-3h0m0 2h0m0 3h0m0-1h0m1 1h0m0-3h0m0-3h0m0 7h0m0-4h0m0-1h0m1 2h0m0 1h0m0-1h0m1 1h0m0-3h0m0-3h0m0 3h0m0 6h0m0-5h0m0-1h0m0 4h0m0-4h0m0 3h0m1 1h0m0-4h0m0 7h0m0-2h0m0-4h0m0-4h0m0 3h0m0 4h0m0-3h0m1-1h0m0 2h0m0-7h0m0 7h0m0 2h0m0-8h0m0 6h0m0-4h0m0 5h0m0 2h0m0-7h0m0 6h0m0-2h0m0 5h0m1-4h0m0 1h0m0-3h0m0 1h0m0-1h0m0-1h0m0 3h0m0-2h0m0 2h0m0-2h0m1-1h0m0 1h0m0 1h0m0-2h0m0-1h0m1-2h0m0-1h0m0 6h0m0 1h0m0-5h0m0 4h0m0-7h0m0 2h0m0 5h0m0-1h0m0-1h0m0-3h0m0 7h0m1-5h0m0 1h0m0-1h0m0 8h0m0-7h0m0 5h0m0-9h0m0 4h0m0 5h0m0-3h0m0-3h0m0 9h0m1-13h0m0 2h0m0 3h0m0 3h0m0-3h0m0-2h0m0-1h0m1 6h0m0-6h0m0 7h0m0-1h0m0 2h0m0-4h0m0-5h0m0 7h0m0 1h0m0-2h0m1-5h0m0 9h0m0-1h0m0-2h0m0-1h0m0-6h0m0 5h0m0 2h0m0 1h0m0-2h0m0 1h0m0-1h0m0 1h0m0-2h0m1 0h0m0 4h0m0-7h0m0 1h0m0 3h0m0-1h0m0-1h0m0 4h0m1-3h0m0 1h0m0-2h0m0 1h0m0 2h0m0-2h0m0 3h0m0-1h0m1-2h0m0 1h0m0 2h0m0 1h0m0-4h0m0 1h0m0 1h0m0 1h0m0-4h0m0 2h0m0 2h0m1 2h0m0-2h0m0 1h0m0-2h0m0-1h0m1 2h0m0-3h0m0 1h0m0 1h0m0 1h0m0-1h0m0 2h0m1 0h0m0-7h0m0 5h0m0 1h0m0-1h0m0-1h0m0 2h0m0-2h0m0-1h0m1 1h0m0-2h0m0 4h0m0-3h0m0 4h0m0-1h0m0-2h0m0 5h0m0-8h0m1 3h0m0-2h0m0 4h0m0 2h0m0-5h0m0-1h0m0 1h0m1 3h0m0-1h0m0-1h0m0-1h0m0 1h0m0-1h0m0 5h0m0-6h0m0 2h0m0 1h0m0-3h0m0-1h0m0 3h0m0 1h0m1 3h0m0-3h0m0-2h0m0-1h0m0-1h0m0 2h0m1 0h0m0 4h0m0-6h0m0 2h0m0-1h0m1 1h0m0-5h0m0 6h0m0 2h0m0 1h0m0-2h0m0-4h0m0 2h0m1 1h0m0-1h0m0 2h0m0-1h0m0 3h0m0-4h0m0 3h0m0 3h0m0-4h0m0 1h0m1-2h0m0-4h0m0 9h0m0-8h0m0 3h0m1-2h0m0-3h0m0 8h0m0-1h0m0-3h0m0 3h0m0-3h0m0-2h0m0-1h0m0 3h0m0-1h0m0 1h0m1-2h0m0-2h0m0 3h0m0 5h0m0-2h0m0-3h0m0 1h0m0-1h0m0 3h0m0 2h0m1-2h0m0-4h0m0-1h0m0 4h0m0-2h0m0-4h0m0 6h0m1-2h0m0-3h0m0 3h0m0 1h0m0-2h0m0 5h0m0-1h0m1-4h0m0 4h0m0 1h0m0-2h0m0-2h0m0 1h0m1 0h0m0 2h0m0 1h0m0 1h0m0-5h0m0 5h0m0 1h0m1-5h0m0 1h0m0-2h0m0 3h0m0-1h0m0-4h0m1 7h0m0-8h0m0 3h0m0-2h0m0 2h0m0-1h0m0 1h0m0-1h0m0 3h0m1-1h0m0-3h0m0 5h0m0-4h0m0 3h0m0-1h0m0 2h0m1-1h0m0 5h0m0-11h0m0 5h0m0-1h0m0-1h0m1-1h0m0 5h0m0-4h0m0 2h0m0-2h0m0 2h0m0-2h0m0 8h0m0-11h0m0 10h0m0-2h0m0-5h0m0-1h0m0 3h0m1 0h0m0 1h0m0-5h0m0 3h0m0 2h0m0 3h0m0-6h0m0 2h0m0 1h0m1 1h0m0 2h0m0-5h0m0 3h0m0-2h0m0-1h0m0 2h0m0-2h0m0 1h0m1 2h0m0 5h0m0-6h0m0-3h0m0 5h0m0-2h0m0 2h0m0-9h0m0 5h0m0 1h0m0-2h0m1 0h0m0 3h0m0-3h0m0 3h0m0 2h0m0-3h0m1 3h0m0-3h0m0 3h0m0-1h0m0 3h0m0-2h0m0 1h0m0 1h0m0-7h0m0 7h0m0-2h0m0-3h0m1 4h0m0-3h0m0-1h0m0 1h0m0 1h0m0-3h0m1 2h0m0 1h0m0 1h0m0-3h0m0-1h0m0-1h0m0 6h0m0 1h0m1-7h0m0-1h0m0 4h0m0-2h0m1 3h0m0 3h0m0-4h0m0-2h0m0 4h0m0-1h0m0-4h0m1 4h0m0-4h0m0 4h0m0-1h0m0 1h0m0-3h0m0 3h0m0-5h0m0 5h0m0-7h0m1 5h0m0 2h0m0-4h0m0 4h0m0 2h0m0-4h0m0 1h0m0-1h0m0 2h0m1-4h0m0 2h0m0 3h0m0-5h0m0 5h0m0-8h0m0 5h0m0 1h0m0 1h0m0-3h0m0 2h0m1-3h0m0-2h0m0-1h0m0 6h0m0 2h0m0 3h0m0-9h0m0 4h0m1-1h0m0-3h0m0 2h0m0 5h0m0-2h0m0-6h0m0 6h0m0-2h0m0 2h0m0-2h0m1-3h0m0 3h0m0-1h0m0-1h0m0 2h0m0 1h0m0 2h0m0-2h0m0 2h0m0-3h0m0 1h0m1-1h0m0 2h0m0-3h0m0 2h0m0-1h0m1 5h0m0-4h0m0-1h0m0 7h0m0-6h0m0 1h0m1-2h0m0-2h0m0 6h0m0-2h0m0-2h0m0-1h0m0 1h0m0 1h0m0-3h0m0 2h0m0 3h0m1-1h0m0-2h0m0 3h0m0-3h0m0 1h0m0 1h0m0-1h0m0-2h0m0 4h0m0-3h0m0 2h0m0-2h0m1 1h0m0 1h0m0-3h0m0 3h0m0-2h0m0 3h0m1-1h0m0-1h0m0 2h0m0-2h0m0 1h0m0-3h0m0 3h0m0-1h0m0 2h0m0 1h0m0-3h0m1 2h0m0-2h0m0 3h0m0-2h0m0-1h0m0-2h0m0 3h0m0-2h0m0 3h0m1-1h0m0-1h0m0-1h0m0 1h0m0-1h0m0 3h0m0-2h0m1-3h0m0 4h0m0 3h0m0-4h0m0-4h0m0 5h0m1-1h0m0-1h0m0-1h0m0 3h0m0-2h0m0 3h0m0-2h0m0-2h0m0 2h0m0 1h0m0-2h0m0-2h0m1 3h0m0 4h0m0-5h0m0-1h0m0 4h0m0-3h0m0 1h0m1 6h0m0-6h0m0-3h0m0 3h0m0-3h0m0 1h0m1 2h0m0-1h0m0 1h0m0-2h0m0 1h0m0-1h0m0-1h0m0-1h0m1 2h0m0-3h0m0 3h0m0 2h0m0 1h0m0-1h0m0-2h0m1 0h0m0 2h0m0-3h0m0 1h0m0 5h0m0-7h0m0 3h0m0-2h0m0 3h0m0-2h0m0 2h0m1 0h0m0 2h0m0-5h0m0 1h0m1 1h0m0 3h0m0-2h0m0 1h0m0 5h0m0-5h0m0-1h0m1 2h0m0-1h0m0 2h0m0-4h0m0 1h0m0-2h0m0 1h0m0 1h0m0-1h0m0 4h0m0-4h0m1 2h0m0-1h0m0-1h0m0 2h0m0 1h0m0-2h0m0 2h0m0-1h0m0-1h0m0 2h0m1-2h0m0 2h0m0-3h0m0-1h0m0 3h0m0-1h0m0 1h0m0 1h0m0-1h0m0-2h0m1 4h0m0-4h0m0 2h0m0 1h0m0-1h0m0 1h0m0-1h0m1 0h0m0-3h0m0 2h0m0 1h0m0 2h0m0-4h0m0 2h0m0-1h0m0 2h0m0-3h0m1 2h0m0 2h0m0-2h0m0 1h0m0-1h0m0-1h0m0 1h0m1-2h0m0 2h0m0-1h0m0 1h0m0 1h0m0-3h0m0 5h0m0-5h0m0 3h0m0-4h0m1 3h0m0-1h0m0-2h0m0 1h0m0 3h0m0-3h0m0 2h0m0-2h0m1-1h0m0 4h0m0-4h0m0-1h0m0 4h0m0-3h0m0 2h0m0-1h0m0-1h0m0 2h0m0-2h0m0 2h0m0-3h0m1 3h0m0-1h0m0-1h0m0 4h0m0-3h0m0 1h0m0 1h0m0-3h0m1 1h0m0-1h0m0 2h0m0-1h0m0 2h0m0-2h0m0 1h0m0-4h0m0 3h0m0 1h0m0-3h0m0 5h0m1-1h0m0-3h0m0 4h0m0-4h0m0 6h0m0-4h0m0-1h0m0-1h0m0 4h0m0-1h0m0-2h0m0 3h0m0 1h0m1-4h0m0 2h0m0 1h0m0-2h0m0 5h0m0-8h0m0 4h0m0 3h0m0-1h0m0-1h0m0-2h0m0 1h0m1-1h0m0-2h0m0 2h0m0-5h0m0 7h0m0-3h0m0-3h0m0 3h0m0 3h0m1-3h0m0 2h0m0-1h0m0-1h0m0 2h0m0 1h0m0-5h0m0 2h0m1 2h0m0-4h0m0 1h0m0 2h0m0 2h0m0-3h0m0-2h0m0 6h0m1-2h0m0 1h0m0-3h0m0 1h0m0 4h0m0-7h0m1 2h0m0-3h0m0 4h0m0 2h0m0 2h0m0-9h0m0 7h0m0-7h0m0 2h0m1 5h0m0-1h0m0-2h0m0-4h0m0 4h0m0 1h0m0-5h0m0-1h0m0 4h0m0-5h0m0 12h0m0-4h0m0 4h0m0-5h0m0-3h0m0-2h0m0 8h0m0-6h0m0 4h0m0-2h0m0-5h0m0 5h0m0-3h0m1 3h0m0 2h0m0-1h0m0-3h0m0-3h0m0 4h0m0 5h0m0-7h0m0 7h0m1-7h0m0 8h0m0-7h0m0 1h0m0-3h0m0 3h0m0 2h0m0-1h0m1 3h0m0-3h0m0-1h0m0 3h0m0 1h0m0-4h0m0-1h0m0 6h0m0-2h0m0-3h0m0-1h0m1-2h0m0 6h0m0-2h0m0-2h0m0 3h0m0-1h0m0 2h0m0-2h0m0-1h0m1 1h0m0-1h0m0 6h0m0-4h0m0-2h0m0-1h0m0 9h0m0-7h0m1 2h0m0 3h0m0-7h0m0 3h0m0 3h0m0-2h0m1-2h0m0 1h0m0-2h0m0-4h0m0 4h0m0 2h0m0 3h0m0-3h0m0 1h0m0 1h0m0-4h0m0 1h0m0 2h0m0-3h0m1-2h0m0 2h0m0 1h0m0 2h0m0-3h0m0 2h0m0-2h0m0 4h0m0-5h0m0 5h0m0 4h0m0-8h0m0 3h0m1-4h0m0 3h0m0 3h0m0-7h0m0-2h0m0 8h0m0 1h0m0-4h0m1-1h0m0 2h0m0 2h0m0-7h0m0 11h0m0-5h0m1 0h0m0-2h0m0-1h0m0 3h0m0-2h0m0 2h0m0-1h0m0-1h0m0-1h0m1 7h0m0-5h0m0-5h0m0 3h0m0 3h0m0-1h0m0-1h0m0-3h0m0 5h0m1 4h0m0-4h0m0-2h0m0 3h0m0-1h0m0-1h0m0-2h0m0-2h0m0 3h0m1 1h0m0-1h0m0 2h0m0-4h0m0 4h0m0 1h0m1-2h0m0-1h0m0-3h0m0 5h0m0 1h0m0-2h0m0-1h0m0 3h0m0-3h0m0 2h0m0-4h0m0 3h0m0 1h0m0 1h0m0-3h0m1 0h0m0 2h0m0-3h0m0 1h0m0 3h0m0-3h0m0 1h0m1-1h0m0 3h0m0-1h0m0-1h0m0-1h0m0 1h0m0-1h0m1 1h0m0-1h0m0 2h0m0-1h0m1 1h0m0-1h0m0-1h0m0 1h0m0-1h0m0 1h0m1 0h0m0 1h0m0-1h0m0 1h0m0-1h0m1 0h0m0 1h0m0-1h0m0 1h0m1 0h0m0-1h0m0-1h0m0-1h0m0 3h0m0 1h0m0-2h0m0 1h0m0-1h0m0-1h0m1 0h0m0 2h0m0-2h0m0 2h0m0-3h0m0 4h0m0-3h0m0-1h0m0 3h0m0-2h0m0 6h0m0-3h0m1-1h0m0-1h0m0 1h0m0-1h0m0-1h0m0-1h0m0 2h0m0-1h0m0 3h0m0-1h0m0-2h0m0 1h0m0-1h0m1 3h0m0-1h0m0-3h0m0 6h0m0-7h0m0 3h0m0-1h0m1 1h0m0-1h0m0-1h0m0 3h0m0-2h0m0 2h0m0 1h0m0-3h0m0 3h0m0-3h0m0 1h0m0 1h0m1-2h0m0 1h0m0 1h0m0 1h0m0-2h0m0 1h0m0 2h0m0-4h0m0 1h0m0 2h0m0-3h0m1-4h0m0 2h0m0 3h0m0-4h0m0 3h0m0 2h0m0-2h0m1 5h0m0-2h0m0-1h0m0-3h0m0 2h0m0 1h0m0-3h0m0 3h0m0 3h0m0-4h0m0-3h0m1 6h0m0-2h0m0-2h0m0 2h0m0-3h0m0 2h0m0 2h0m0-3h0m1-1h0m0 2h0m0 1h0m0 2h0m0-1h0m0-5h0m0 3h0m0 1h0m0-4h0m0 2h0m0-1h0m1 2h0m0-2h0m0 3h0m0-1h0m0 1h0m0-3h0m0 1h0m0-2h0m1 2h0m0 3h0m0-4h0m0 3h0m0 4h0m0-5h0m0 1h0m0 4h0m0-5h0m0-3h0m0 5h0m0 4h0m1-6h0m0 1h0m0-3h0m0 2h0m0-4h0m0 10h0m0-7h0m0 1h0m0 3h0m1-2h0m0 1h0m0-3h0m0-1h0m0-1h0m0 1h0m0 1h0m0 2h0m0-2h0m0-2h0m0 2h0m1 2h0m0-2h0m0 2h0m0-2h0m0 2h0m0 5h0m0-8h0m0-1h0m1 2h0m0 2h0m0-5h0m0 4h0m0-2h0m0 2h0m1 0h0m0-3h0m0 3h0m0-3h0m0 4h0m0-6h0m0 4h0m0-1h0m0 2h0m0-2h0m1 6h0m0-6h0m0 4h0m0-2h0m0-1h0m0 4h0m0-3h0m0-3h0m0 2h0m0-1h0m0 3h0m0-2h0m1-4h0m0 2h0m0 2h0m0 3h0m0-2h0m0 1h0m0-2h0m1-1h0m0 1h0m0-1h0m0-1h0m0 7h0m0-2h0m0-8h0m0 4h0m0-4h0m0 5h0m0 4h0m1-10h0m0 8h0m0-1h0m0-1h0m0-2h0m0 1h0m0 1h0m0 2h0m0-1h0m0 5h0m0-6h0m0-4h0m0 4h0m0-3h0m0-2h0m0-1h0m0 2h0m0 2h0m1-2h0m0 2h0m0 8h0m0-12h0m0 11h0m0-8h0m0 4h0m0-2h0m0-4h0m0 5h0m0-5h0m0 2h0m0 4h0m0-3h0m0 1h0m0-4h0m0 2h0m1 1h0m0 1h0m0-5h0m0 6h0m0-2h0m0 5h0m0-5h0m0-2h0m0 6h0m0-2h0m0-3h0m1 6h0m0-8h0m0 5h0m0 2h0m0-3h0m0 4h0m0-7h0m0 2h0m0 2h0m1 3h0m0-3h0m0 1h0m0 1h0m0-1h0m0-2h0m0 4h0m0 2h0m0-2h0m0-1h0m0 2h0m0-1h0m1-2h0m0-6h0m0 7h0m0-1h0m0-1h0m0 1h0m0 2h0m0-2h0m0 2h0m0-1h0m0-4h0m0 4h0m1 2h0m0-3h0m0-3h0m0 4h0m0-5h0m0 4h0m0-3h0m0 6h0m0-2h0m0-8h0m0 9h0m0-2h0m0 2h0m0-3h0m0 1h0m1-7h0m0 7h0m0-4h0m0 4h0m0 2h0m0-3h0m0 1h0m1 3h0m0-3h0m0 4h0m0-3h0m0-2h0m0 1h0m1-1h0m0 2h0m0 2h0m0 3h0m0-10h0m0 4h0m0-3h0m0 6h0m0-5h0m0 2h0m1 2h0m0-4h0m0 2h0m0-1h0m0 2h0m0-1h0m0-2h0m1 3h0m0 4h0m0-3h0m0-8h0m0 7h0m0-2h0m0-2h0m0-1h0m1 2h0m0 4h0m0-5h0m0 3h0m0 1h0m0-2h0m1-3h0m0 6h0m0-4h0m0 1h0m0-1h0m0-1h0m0 3h0m0-1h0m0 4h0m0-1h0m0-3h0m0 3h0m1-2h0m0 1h0m0-4h0m0 1h0m0-2h0m0 2h0m0 2h0m0 1h0m0 4h0m0-7h0m0-3h0m0 6h0m1 1h0m0 2h0m0-7h0m0 1h0m0 1h0m0 1h0m0-3h0m0 4h0m1-3h0m0-1h0m0 4h0m0-2h0m0 5h0m0-6h0m0 4h0m0 1h0m0-5h0m0 3h0m0-3h0m1-2h0m0-2h0m0 4h0m0-2h0m0 4h0m0-7h0m1 7h0m0-2h0m0 7h0m0-10h0m0 5h0m0-1h0m1 1h0m0 3h0m0-6h0m0 8h0m0-7h0m1 4h0m0 2h0m0-10h0m0 7h0m0-1h0m1 0h0m0-4h0m0 5h0m0-5h0m1 1h0m0 2h0m0-2h0m0 5h0m0-3h0m0 6h0m0-6h0m1 2h0m0-4h0m0 1h0m0 1h0m0-1h0m0 1h0m0 1h0m1 0h0m0 2h0m0-3h0m0 2h0m0-1h0m1 0h0m0-2h0m0 2h0m0-5h0m0 2h0m0 3h0m0-3h0m0 1h0m0-1h0m0 2h0m0 1h0m0-4h0m0 2h0m0-2h0m0-2h0m1 6h0m0-2h0m0 2h0m0-5h0m0 6h0m0-2h0m0 3h0m0-5h0m0 2h0m1 1h0m0-6h0m0 2h0m0-1h0m0 6h0m0-1h0m0-4h0m0 2h0m0 2h0m0-1h0m1 2h0m0-5h0m0 3h0m0-1h0m0 5h0m0-7h0m0 3h0m1 1h0m0-5h0m0 4h0m0 4h0m0-10h0m0 7h0m0-2h0m0 2h0m0 5h0m0-3h0m0-2h0m1 2h0m0 1h0m0-4h0m0 3h0m0-4h0m0 2h0m0-1h0m0 3h0m0-2h0m0-4h0m1 7h0m0-2h0m0-1h0m0-1h0m0 1h0m0-1h0m0-1h0m0-1h0m0 5h0m0-4h0m0 5h0m0-4h0m0 1h0m0 2h0m1-5h0m0 4h0m0 4h0m0-8h0m0 3h0m0-1h0m0 1h0m1 0h0m0-1h0m0 2h0m0 1h0m0-6h0m0 6h0m0-3h0m0 1h0m0 2h0m0-1h0m0 2h0m0-5h0m1 4h0m0-2h0m0 1h0m0 4h0m0-5h0m0 2h0m0 2h0m1-4h0m0 3h0m0-3h0m0 3h0m0-2h0m0-1h0m0 2h0m0-3h0m0 4h0m0-2h0m1 0h0m0-3h0m0 1h0m0 3h0m0-3h0m0-2h0m0 5h0m0-1h0m0 4h0m0-2h0m0-6h0m0 2h0m1 2h0m0-2h0m0 4h0m0-3h0m0 3h0m0-8h0m0 1h0m0 8h0m0-7h0m1 4h0m0-6h0m0 5h0m0-5h0m0 2h0m1 4h0m0-3h0m0 4h0m0-8h0m0 8h0m0-4h0m0 2h0m0 2h0m0-4h0m0 4h0m0-4h0m0 3h0m0-8h0m1 7h0m0 2h0m0-2h0m0 1h0m0-2h0m0-1h0m0-3h0m0 1h0m0 5h0m0-2h0m0 3h0m0-3h0m1-1h0m0 2h0m0 1h0m0-2h0m0-1h0m0-4h0m0 5h0m0 2h0m0-3h0m0 3h0m0-7h0m0 4h0m0 3h0m1-2h0m0 1h0m0-2h0m0 1h0m0 2h0m0 1h0m0-2h0m0-4h0m0 4h0m1 2h0m0-4h0m0 2h0m1-1h0m0 1h0m0-2h0m0 2h0m0-1h0m1 2h0m0 1h0m0-1h0m0-1h0m0 1h0m0-1h0m0 1h0m0-1h0m0-1h0m0 1h0m0 1h0m0-6h0m0 3h0m1 0h0m0 2h0m0 1h0m0-3h0m0 2h0m1-1h0m0 2h0m0 1h0m0-1h0m0-1h0m0-1h0m0 3h0m0-2h0m0 1h0m1-3h0m0 5h0m0-2h0m0-1h0m0-1h0m0 1h0m0-1h0m0 2h0m1-1h0m0-2h0m0 3h0m0-2h0m0 1h0m0 2h0m1-3h0m0-1h0m0 1h0m0-1h0m0 8h0m0-8h0m1 3h0m0-3h0m0 5h0m0-2h0m0-2h0m0 2h0m0-3h0m0 3h0m0-1h0m0 3h0m0-2h0m0-7h0m1 9h0m0-3h0m0-2h0m0 1h0m0 2h0m0-1h0m0-4h0m0 1h0m0-1h0m0 1h0m0 2h0m1 1h0m0-1h0m0-2h0m0-1h0m0 5h0m0-1h0m0 3h0m0 1h0m1-8h0m0 4h0m0 3h0m0-5h0m0 5h0m0-5h0m0 1h0m0-1h0m0 2h0m0-6h0m0 8h0m0-3h0m1 2h0m0-1h0m0 2h0m0-4h0m0 1h0m0 5h0m0-4h0m1 3h0m0-9h0m0 5h0m0 3h0m0-1h0m0 5h0m0-4h0m0-2h0m0 3h0m1-5h0m0 2h0m0-2h0m0 4h0m0-4h0m0 3h0m1 1h0m0-1h0m0 2h0m0-4h0m0 1h0m0 1h0m0-5h0m0 2h0m1 4h0m0-2h0m0 2h0m0-7h0m0 7h0m0-1h0m0 3h0m0-5h0m0 1h0m1-4h0m0 3h0m0 1h0m0 2h0m0-1h0m0-1h0m1 0h0m0-2h0m0 2h0m0-2h0m0 3h0m0-7h0m0 5h0m1 3h0m0-4h0m0 3h0m0-3h0m0 2h0m0-1h0m0 1h0m0 1h0m0-3h0m0 3h0m1-3h0m0 1h0m0 2h0m0-3h0m0 1h0m1 0h0m0-1h0m0 2h0m0-2h0m0 2h0m0-1h0m0 1h0m0-1h0m0 1h0m0-1h0m0-1h0m0 2h0m0-1h0m0-1h0m1 3h0m0-2h0m0 1h0m0-5h0m0 5h0m0-2h0m0 1h0m0 1h0m0 2h0m0-3h0m0-2h0m0 2h0m0-4h0m0 4h0m1-2h0m0 1h0m0-4h0m0 4h0m0 1h0m0-1h0m0-2h0m0 2h0m0 1h0m1 2h0m0-2h0m0-2h0m0-2h0m0 5h0m0-5h0m0 5h0m0-1h0m0-4h0m0 3h0m0 2h0m0-3h0m0-2h0m1 5h0m0-6h0m0 1h0m0 5h0m0-3h0m0 3h0m0 1h0m0-2h0m0 1h0m0 1h0m0-5h0m0 4h0m1-5h0m0 1h0m0 5h0m0 1h0m0 3h0m0-7h0m0 2h0m0-4h0m0 4h0m0 3h0m0-4h0m0 1h0m0-2h0m1 0h0m0 2h0m0 4h0m0-3h0m0 2h0m0-3h0m0-1h0m0 3h0m1-2h0m0-5h0m0 6h0m0 1h0m0 2h0m0 1h0m1-6h0m0 5h0m0-6h0m0 3h0m0 1h0m0-4h0m0 4h0m0-2h0m0 2h0m1-5h0m0 4h0m0-1h0m0 1h0m0 3h0m0-1h0m0-2h0m0 1h0m0-2h0m0-1h0m0 1h0m1 0h0m0 2h0m0-1h0m0-1h0m0-6h0m0 9h0m1 0h0m0-5h0m0 7h0m0-6h0m0 4h0m0-5h0m0 3h0m1 0h0m0 1h0m0-5h0m0 2h0m0 4h0m0-6h0m0 2h0m0-2h0m1 5h0m0-1h0m0-1h0m0 3h0m0-1h0m0-2h0m0 1h0m0-1h0m0 2h0m0-1h0m1 1h0m0-2h0m0 2h0m0-7h0m0 8h0m0-1h0m0-2h0m0-6h0m0 7h0m0-1h0m0-4h0m0 7h0m1-3h0m0 1h0m0-1h0m0 1h0m0-1h0m0 3h0m0-4h0m0 4h0m1-3h0m0 1h0m0-7h0m0 6h0m0-1h0m0 2h0m0 1h0m0-1h0m0 1h0m0-2h0m0 2h0m0-2h0m0 1h0m1-3h0m0 3h0m0 5h0m0-5h0m0-3h0m0 1h0m0 2h0m0-1h0m0 1h0m1-1h0m0-3h0m0 8h0m0-6h0m0 1h0m0-1h0m1 1h0m0 3h0m0-4h0m0-2h0m0 9h0m0-6h0m0-1h0m0 5h0m0-6h0m0 3h0m0-2h0m1 2h0m0-2h0m0 4h0m0-1h0m0-2h0m0 1h0m0-2h0m1 2h0m0-1h0m0-2h0m0 1h0m0-1h0m0 2h0m0 1h0m0-3h0m1 1h0m0-2h0m0 2h0m0 3h0m0-6h0m0 6h0m1-1h0m0 2h0m0-5h0m0-2h0m0 4h0m0 1h0m0 2h0m0-3h0m1-2h0m0 1h0m0 1h0m0-3h0m0 4h0m0 1h0m1-4h0m0-1h0m0 1h0m0 2h0m0 2h0m0-3h0m0 4h0m0-2h0m0-2h0m0 2h0m0-1h0m0-1h0m1 2h0m0 1h0m0-1h0m0-1h0m0-3h0m0 4h0m0-1h0m0 3h0m0-4h0m1-1h0m0 2h0m0-4h0m0 8h0m0-6h0m0 4h0m0-4h0m0-1h0m1 3h0m0-5h0m0 6h0m0-1h0m0 1h0m0 2h0m0-3h0m1 1h0m0-1h0m0-2h0m0 4h0m0-1h0m0-2h0m0 2h0m0-1h0m0-1h0m0 4h0m0-4h0m1 1h0m0 1h0m0 1h0m0-1h0m0-2h0m1 1h0m0-1h0m0 5h0m0-4h0m0 2h0m0-3h0m1 0h0m0-1h0m0 1h0m0 2h0m0 2h0m0-1h0m1 0h0m0 4h0m0-5h0m0 1h0m0 1h0m0-3h0m0 1h0m0 1h0m0 1h0m0 2h0m0-2h0m0-3h0m1-1h0m0 2h0m0-2h0m0 1h0m0 3h0m0-5h0m0 5h0m0 1h0m1-6h0m0 2h0m0-1h0m0 2h0m0-3h0m0 3h0m0-1h0m0-1h0m0 3h0m0-1h0m0 1h0m1 0h0m0-3h0m0 3h0m0-1h0m0-2h0m0-1h0m0 1h0m0-1h0m0 3h0m0-1h0m1 1h0m0-4h0m0 7h0m0-5h0m0 2h0m0-1h0m0-1h0m0 2h0m0-1h0m1 2h0m0-2h0m0 4h0m0-2h0m0-2h0m0-1h0m1 3h0m0-6h0m0 3h0m0 2h0m1-1h0m0-1h0m0-1h0m0 5h0m0-4h0m0 1h0m0 2h0m0-5h0m0 4h0m0-3h0m1 4h0m0-2h0m0 2h0m0-3h0m0 2h0m0-2h0m0 1h0m0 1h0m0-4h0m0 2h0m0 1h0m0-1h0m0 1h0m0 2h0m0-5h0m0 3h0m0-1h0m1-3h0m0 3h0m0-4h0m0 1h0m0 4h0m0-4h0m0 2h0m0-2h0m0 4h0m0-2h0m0 1h0m1-1h0m0 2h0m0-7h0m0 2h0m0 4h0m0-2h0m0-1h0m0 2h0m0-1h0m0 4h0m0-4h0m0-1h0m0 4h0m0-4h0m0-1h0m1 4h0m0 4h0m0-5h0m0 1h0m0-1h0m0 6h0m0-5h0m0-1h0m0-4h0m0 5h0m0-3h0m0 7h0m0-5h0m1 2h0m0-3h0m0-2h0m0 4h0m0 5h0m0-3h0m0-2h0m1-4h0m0 5h0m0-5h0m0 4h0m0 1h0m0 1h0m0-2h0m0-3h0m0 4h0m0 1h0m0 1h0m0-8h0m0 7h0m0-2h0m0-2h0m0 4h0m0-6h0m0 5h0m1-1h0m0 1h0m0-2h0m0 2h0m0 3h0m0-2h0m1-2h0m0 3h0m0-1h0m0-2h0m0 3h0m0-2h0m0 1h0m0-2h0m0 1h0m1 0h0m0 1h0m0-2h0m0 2h0m0-1h0m0 1h0m1 2h0m0-4h0m0 3h0m0-2h0m1 1h0m0-1h0m0-1h0m0 2h0m0-4h0m0 2h0m0 2h0m1 2h0m0-2h0m0-2h0m0 1h0m0-1h0m0 1h0m1 0h0m0 1h0m0 2h0m0-3h0m1 1h0m0 1h0m0-1h0m0-2h0m0 1h0m0-1h0m0-4h0m0 5h0m0 1h0m0-4h0m0 4h0m0-1h0m1 4h0m0-2h0m0-1h0m0-8h0m0 6h0m0 3h0m0-3h0m0-1h0m0 3h0m1 2h0m0-4h0m0-1h0m0 2h0m0 1h0m0-1h0m0 1h0m0 1h0m1-2h0m0 2h0m0-2h0m0 1h0m0-1h0m0-3h0m0 3h0m0 2h0m1 1h0m0-2h0m0-3h0m0 3h0m0-3h0m0 3h0m0-5h0m0 2h0m0 3h0m0-1h0m1 0h0m0 2h0m0-3h0m0-1h0m0 2h0m0 3h0m0-1h0m1-1h0m0 1h0m0-3h0m0 1h0m0 1h0m1 0h0m0-2h0m0 1h0m0-3h0m0 2h0m0-2h0m0 3h0m0 3h0m0-4h0m0 2h0m0-2h0m1 1h0m0-2h0m0 4h0m0-2h0m0-2h0m0-1h0m0 5h0m0-3h0m0-1h0m0 1h0m1 1h0m0-2h0m0 2h0m0 1h0m0-5h0m0 5h0m1-4h0m0 5h0m0-2h0m0 2h0m0-2h0m0-3h0m0 5h0m1-1h0m0-4h0m0 5h0m0-1h0m0-3h0m0 3h0m0-7h0m1 8h0m0-3h0m0 1h0m0-3h0m0 1h0m0 3h0m0 1h0m1 3h0m0-7h0m0 7h0m0-4h0m0 1h0m0-5h0m0 3h0m1 0h0m0-2h0m0 4h0m0-6h0m0 1h0m1 1h0m0 3h0m0 4h0m0-3h0m0-4h0m0-1h0m0 5h0m1-4h0m0 4h0m0 2h0m0-2h0m0 2h0m0-5h0m0 1h0m0 1h0m1-1h0m0-4h0m0 7h0m0-3h0m0 1h0m0 2h0m0-2h0m0-3h0m0 4h0m0 3h0m0-7h0m1 3h0m0-1h0m0-3h0m0 4h0m0-3h0m0-3h0m0 4h0m0 1h0m0 3h0m0-4h0m0-2h0m0 7h0m1-6h0m0 4h0m0-1h0m0-2h0m0 3h0m0-3h0m0 3h0m0-7h0m0 9h0m0-5h0m0 1h0m0-1h0m0 4h0m0-7h0m0 2h0m1 3h0m0-1h0m0-3h0m0 2h0m0 3h0m1-3h0m0-4h0m0 4h0m0-2h0m0 1h0m0-1h0m0-2h0m0 4h0m0 1h0m0 1h0m1-1h0m0-1h0m0-3h0m0-1h0m0 4h0m0-3h0m0 1h0m0 2h0m0-5h0m0 2h0m1 0h0m0 3h0m0-1h0m0-2h0m0 3h0m0-2h0m0 3h0m1 2h0m0 1h0m0-6h0m0 9h0m0-10h0m0 3h0m1-1h0m0 1h0m0 2h0m0-4h0m0 1h0m0 3h0m0-1h0m1 1h0m0-3h0m0-2h0m0-1h0m0 3h0m0-4h0m1 6h0m0-2h0m0-3h0m0 11h0m0-13h0m0 6h0m0-6h0m0 1h0m0 1h0m0 5h0m0-3h0m0-3h0m1 11h0m0-8h0m0 1h0m0 1h0m0-2h0m0 8h0m0-4h0m0-8h0m0 9h0m1-4h0m0 2h0m0 1h0m0-6h0m0 4h0m0-4h0m0 8h0m0-3h0m0 2h0m0-7h0m0-1h0m0 2h0m0 4h0m1 3h0m0-4h0m0-5h0m1 6h0m0-3h0m0 5h0m0-1h0m0 1h0m0-5h0m0-1h0m0 5h0m0-1h0m1 3h0m0-6h0m0 3h0m0-1h0m0-1h0m0 2h0m0-6h0m0 5h0m0 6h0m0-1h0m0-2h0m0-4h0m1 1h0m0 7h0m0-4h0m0 1h0m0-4h0m0 5h0m0-3h0m0 3h0m0-10h0m0 6h0m0-4h0m1 7h0m0-4h0m0 1h0m0-1h0m0-2h0m0 3h0m0 4h0m0-5h0m1 0h0m0 2h0m0-2h0m0 3h0m0-2h0m0-1h0m0-1h0m0 1h0m0 3h0m0 1h0m0-6h0m1 5h0m0 2h0m0-6h0m0 2h0m0 1h0m1-1h0m0 4h0m0-4h0m1 2h0m0-2h0m0-1h0m0-2h0m0 1h0m0 6h0m0-4h0m0-1h0m0-2h0m1 0h0m0 2h0m0-2h0m0 5h0m0 1h0m0 2h0m0-4h0m0-1h0m0-4h0m0 2h0m0 4h0m1-5h0m0 1h0m0 2h0m0 1h0m0-2h0m0 1h0m0-2h0m0 2h0m0-2h0m0 6h0m0-3h0m0-2h0m0-2h0m1 5h0m0 2h0m0-6h0m0-2h0m0 6h0m0-2h0m0 1h0m0-3h0m0 1h0m0 2h0m0-3h0m0-3h0m0 2h0m0 3h0m0-2h0m0 2h0m1 1h0m0-1h0m0 2h0m0-3h0m0-1h0m0-1h0m1 2h0m0 1h0m0 2h0m0-7h0m0 3h0m0 3h0m0 3h0m0-6h0m0 2h0m1-4h0m0 3h0m0 3h0m0 1h0m0-3h0m0-3h0m0 3h0m1-2h0m0 4h0m0-1h0m0-2h0m0 1h0m0 3h0m0-6h0m0 1h0m1-2h0m0 2h0m0-1h0m0 6h0m0-2h0m0-7h0m1 3h0m0-2h0m0 4h0m0 4h0m0-1h0m0-3h0m0-5h0m0 4h0m0 3h0m0-4h0m0 1h0m0-3h0m1 6h0m0-1h0m0-4h0m0 3h0m0-4h0m0 4h0m0-2h0m0-1h0m0-2h0m0 5h0m0-2h0m0 4h0m0-3h0m0 1h0m0-3h0m0-1h0m1 5h0m0 1h0m0 3h0m0-6h0m0 1h0m0-3h0m0 3h0m0-4h0m1 5h0m0 3h0m0-1h0m0-5h0m0-1h0m0 7h0m0-7h0m0 1h0m0-1h0m0-3h0m0 6h0m1 2h0m0 3h0m0-1h0m0-4h0m0 3h0m0-5h0m0 4h0m0-3h0m0 3h0m1-3h0m0 2h0m0-5h0m0 6h0m0-2h0m0 3h0m0-2h0m0-1h0m0 2h0m0-3h0m1 1h0m0 2h0m0-3h0m0-1h0m0 2h0m0 2h0m1-3h0m0 2h0m0-1h0m0-3h0m1 2h0m0 2h0m0-3h0m0 1h0m0 1h0m0 1h0m0-1h0m0-2h0m0-1h0m1 3h0m0-3h0m0 8h0m0-7h0m0 3h0m0-2h0m0 2h0m0 2h0m0-1h0m0-3h0m0 2h0m0-2h0m0 1h0m1-2h0m0 4h0m0-3h0m0 3h0m0-3h0m0 1h0m0-2h0m0 5h0m1-6h0m0 3h0m0 1h0m0 1h0m0-4h0m0 2h0m0 4h0m0-4h0m0 3h0m0-5h0m1 1h0m0 2h0m0 1h0m0-2h0m0 2h0m0-7h0m0 8h0m0-3h0m0 2h0m0-4h0m0 3h0m0-5h0m0 4h0m0 3h0m1-2h0m0 2h0m0-4h0m0 6h0m0-5h0m0 2h0m0 2h0m0-3h0m0-2h0m0-1h0m1 2h0m0 7h0m0-8h0m0 1h0m0 2h0m1-2h0m0 3h0m0-3h0m0-1h0m0 2h0m0-1h0m1-1h0m0-4h0m0 4h0m0 3h0m0-3h0m0 1h0m0 1h0m0 2h0m0-2h0m1-1h0m0 3h0m0-1h0m0-2h0m1-2h0m0 3h0m0-3h0m0 3h0m0 1h0m0-1h0m0-3h0m0 1h0m0 3h0m1-4h0m0-2h0m0 1h0m0 3h0m0-2h0m0-2h0m0 3h0m0-1h0m0 3h0m0-1h0m0 1h0m1-2h0m0 1h0m0 1h0m0-3h0m0 3h0m0-3h0m0 4h0m0-2h0m1 0h0m0 1h0m0-5h0m0 7h0m0-2h0m0-4h0m0 4h0m0-4h0m0-3h0m0 7h0m0-4h0m1 3h0m0 2h0m0-6h0m0 7h0m0 1h0m0 1h0m0-5h0m0-5h0m0 9h0m0-4h0m0 3h0m0-7h0m0 4h0m0-2h0m0-1h0m0 3h0m1-1h0m0 4h0m0-8h0m0 6h0m0 3h0m0 1h0m0-11h0m0 7h0m0-3h0m0 4h0m0-6h0m0 5h0m1-5h0m0 8h0m0-9h0m0 3h0m0-1h0m0 3h0m0-1h0m0 2h0m0-2h0m0 4h0m0-3h0m0-1h0m0-5h0m0 7h0m1 4h0m0-5h0m0 3h0m0-3h0m0 6h0m1-8h0m0-1h0m0 2h0m0 5h0m0 1h0m0-10h0m0 5h0m0-2h0m0 2h0m0 2h0m1-6h0m0 6h0m0-4h0m0 5h0m0-2h0m0-4h0m0 6h0m0-4h0m0 7h0m0-8h0m1 1h0m0 1h0m0-3h0m0 1h0m0 2h0m0 4h0m0-2h0m0 3h0m0-2h0m1 1h0m0-3h0m0 2h0m0-4h0m0 1h0m0 1h0m0-2h0m1 1h0m0-1h0m0 1h0m0 3h0m0-4h0m0 2h0m0-1h0m0 1h0m1 1h0m0 1h0m0-3h0m0 3h0m0-3h0m0-2h0m0 2h0m0 2h0m0-1h0m0-2h0m0 3h0m0-1h0m1-1h0m0-3h0m0 6h0m0-3h0m0 1h0m1-1h0m0 1h0m0-2h0m0 2h0m0 1h0m1-1h0m0-1h0m0 1h0m0-4h0m0 4h0m0 1h0m0-3h0m0 3h0m0-4h0m0 3h0m0-5h0m0 5h0m0-1h0m1 2h0m0-3h0m0 1h0m0-1h0m0 3h0m0-4h0m0 2h0m0 1h0m0-2h0m1 3h0m0-3h0m0 2h0m0 2h0m0-3h0m0 2h0m0-3h0m1 1h0m0 1h0m0-2h0m0 1h0m0 1h0m1 3h0m0-4h0m0 3h0m0-4h0m0 3h0m0-3h0m0 3h0m0-4h0m1 4h0m0-2h0m0 1h0m0-3h0m0 4h0m0-1h0m0-4h0m0 1h0m0 3h0m1 0h0m0-1h0m0 1h0m0-2h0m0 1h0m0 3h0m0-6h0m1 0h0m0 6h0m0-1h0m0 1h0m0-1h0m0-2h0m0 1h0m1-2h0m0 3h0m0-1h0m0 1h0m0 1h0m0-2h0m0 3h0m1-4h0m0 1h0m0 1h0m0 4h0m0-4h0m0-4h0m0 3h0m0 1h0m0-1h0m0-2h0m1 5h0m0-3h0m0-1h0m0 1h0m0-1h0m0-1h0m0 3h0m0-2h0m0 3h0m1-2h0m0-1h0m0 2h0m0-1h0m0-3h0m0 6h0m0-2h0m0-2h0m0 2h0m0-1h0m0-2h0m0 2h0m1-1h0m0 2h0m0-2h0m0 1h0m0 1h0m0-4h0m0 3h0m0 2h0m0-2h0m0 5h0m0-3h0m0-4h0m0 3h0m0-1h0m1 1h0m0-6h0m0 6h0m0-3h0m0-1h0m0 3h0m0 1h0m0-1h0m0 3h0m1-4h0m0 2h0m0 2h0m0-5h0m0 1h0m0-1h0m0 3h0m0-4h0m1 3h0m0-3h0m0 7h0m0-5h0m0 4h0m0-3h0m0-1h0m0 1h0m0 1h0m0 2h0m0-3h0m1-1h0m0 2h0m0 1h0m0 1h0m0-6h0m0 2h0m0-2h0m0 3h0m0 3h0m0-6h0m1 4h0m0-2h0m0 4h0m0-4h0m0-3h0m0 3h0m0 2h0m0-2h0m0-1h0m0-1h0m0 4h0m0-2h0m1 2h0m0 2h0m0-1h0m0 2h0m0-5h0m0 2h0m0-2h0m1-3h0m0 5h0m0-2h0m0-3h0m0 3h0m0 2h0m0-4h0m0 8h0m0-6h0m1-1h0m0 5h0m0-4h0m0-1h0m0 1h0m0 2h0m0-1h0m0 3h0m0-2h0m0-4h0m1-1h0m0 2h0m0 5h0m0-1h0m0-1h0m0-4h0m0 3h0m0-2h0m0 2h0m0 1h0m0 2h0m1 1h0m0-4h0m0-2h0m0 5h0m0-3h0m0-2h0m0 1h0m0-1h0m0-1h0m0 1h0m1-1h0m0 4h0m0-1h0m0-5h0m0 1h0m0 3h0m0 4h0m0-3h0m0-2h0m0 3h0m0-2h0m0-2h0m1 3h0m0-2h0m0 1h0m0-2h0m0 1h0m1 3h0m0-2h0m0 3h0m0 1h0m0-2h0m0-1h0m0-1h0m1 0h0m0 1h0m0-1h0m0-1h0m0-3h0m0 2h0m0 6h0m0-8h0m0 5h0m0 1h0m1-2h0m0-3h0m0 4h0m0 2h0m0-2h0m0 3h0m0-1h0m0-7h0m0 4h0m0 2h0m0 1h0m1-1h0m0-1h0m0 2h0m0-4h0m0 1h0m0 3h0m0 2h0m0-9h0m0 7h0m0-1h0m0-1h0m1 3h0m0-5h0m0 3h0m0-1h0m0-3h0m0-2h0m0 1h0m0-2h0m0 1h0m0 7h0m0-2h0m0 3h0m1-5h0m0-2h0m0 1h0m0-3h0m0 6h0m0-2h0m0-2h0m0 6h0m0-8h0m0 8h0m0-3h0m0 1h0m1 1h0m0 1h0m0-2h0m0-4h0m0 5h0m0 1h0m0-6h0m0 3h0m0 3h0m0-6h0m0 3h0m0-1h0m0 2h0m0 2h0m0-1h0m0 2h0m1-4h0m0 2h0m0-6h0m0 6h0m0-3h0m0 2h0m0-3h0m1 6h0m0-3h0m0 2h0m0 1h0m0-6h0m0 3h0m0-4h0m0 6h0m0-2h0m1-1h0m0-2h0m0 5h0m0-4h0m0 3h0m0-4h0m0 2h0m0-3h0m1 3h0m0-5h0m0 6h0m0-4h0m0 3h0m0 3h0m0-6h0m0 6h0m1-6h0m0 1h0m0 3h0m0-1h0m0 1h0m0-1h0m0-2h0m0 1h0m0 1h0m0 1h0m0-1h0m0 2h0m0-3h0m0 4h0m0-5h0m1 4h0m0-3h0m0-1h0m0 3h0m0-4h0m0 1h0m0 1h0m0 4h0m0-3h0m0 3h0m0-7h0m0 3h0m1 3h0m0-4h0m0 1h0m0 1h0m0 1h0m0 3h0m0-6h0m0 3h0m0 1h0m0-2h0m0-5h0m0 3h0m1 6h0m0-5h0m0 2h0m0-2h0m0 5h0m0-2h0m0-3h0m0 3h0m1 1h0m0-3h0m0 3h0m0-2h0m0 1h0m0-3h0m0 3h0m1 0h0m0 3h0m0-5h0m0 3h0m0 3h0m0-3h0m1-2h0m0 2h0m0-2h0m0-1h0m0 4h0m0-1h0m0 1h0m0-2h0m1 1h0m0-3h0m0 2h0m0 1h0m0-2h0m0-2h0m0 4h0m0-3h0m0 3h0m0-1h0m0-1h0m0 2h0m1 0h0m0-1h0m0 1h0m0-2h0m0-2h0m0 3h0m0-1h0m0-2h0m0 1h0m1 2h0m0-1h0m0 1h0m0 1h0m1-3h0m0 2h0m0-3h0m0 5h0m0-4h0m0 2h0m1-1h0m0-1h0m0 3h0m0-3h0m0 1h0m0-3h0m0 6h0m0-4h0m0 3h0m0-9h0m0 7h0m0-4h0m1 5h0m0-2h0m0 2h0m0-2h0m0-3h0m0 2h0m0 1h0m0 1h0m0 2h0m1 0h0m0-3h0m0 4h0m0-3h0m0 1h0m0-6h0m0 2h0m0 6h0m0-5h0m1 6h0m0-10h0m0 4h0m0-1h0m0 1h0m0 1h0m0 2h0m0 1h0m0-1h0m0 2h0m0-3h0m0-3h0m1 2h0m0 3h0m0-2h0m0-1h0m0 3h0m0-2h0m1 2h0m0 3h0m0-5h0m0-1h0m0 4h0m1-4h0m0 2h0m0 5h0m0-8h0m1 1h0m0 2h0m0-3h0m0 1h0m0-1h0m0-2h0m0 4h0m1 2h0m0-1h0m0-2h0m0-3h0m0 3h0m0-1h0m0 2h0m0-3h0m0 4h0m1-2h0m0-3h0m0 6h0m0-8h0m0 1h0m0 3h0m0-2h0m0 6h0m0-5h0m1 2h0m0 4h0m0-6h0m0-1h0m0 8h0m0-5h0m1 3h0m0 1h0m0-4h0m0 1h0m0 3h0m0-3h0" stroke="#000" stroke-width="3.90" stroke-linecap="round" fill="none"/>
<path d="M164.5 64.5h0m8 0h0m1 0h0m0-1h0m1 0h0m0 1h0m0-2h0m0 3h0m0-1h0m0-2h0m0 2h0m0 1h0m0-3h0m2 3h0m26-2h0m0 1h0m3 1h0m8-1h0m0-1h0m1 1h0m1 1h0m0-1h0m0-1h0m1 0h0m0 2h0m4 0h0m8 14h0m24-14h0m1-1h0m5 1h0m21-2h0m1 2h0m1-1h0m0-1h0m0 1h0m1 0h0m1 0h0m38 0h0m0 1h0m1 0h0m0-2h0m0 2h0m0-3h0m0 1h0m0 1h0m0-1h0m1 2h0m0-4h0m0 1h0m1 0h0m0 2h0m25 0h0m1 0h0m10-1h0m1 1h0m0-3h0m0 4h0m0-3h0m0 3h0m0-3h0m1 1h0m0-2h0m0 2h0m0 1h0m1-1h0m0 1h0m1-3h0m37 3h0m0-1h0m0-2h0m0-1h0m1 4h0m0-2h0m0-3h0m0 5h0m0-4h0m0 3h0m0 2h0m1-5h0m0 4h0m0-3h0m0 3h0m0-3h0m1 1h0m0 1h0m0-1h0m1-2h0m18 19h0m4-15h0m3 0h0m0 1h0m1-1h0m9-3h0m1 4h0m0-1h0m0-2h0m0-1h0m0 3h0m0-2h0m1-1h0m0 2h0m0 2h0m0-1h0m0 1h0m1 0h0m0-2h0m1 1h0m15-1h0m2 1h0m1 0h0m0 1h0m0-1h0m0-1h0m0 1h0m1-1h0m5 2h0m2-1h0m11-1h0m1 0h0m1 1h0m24-1h0m1 0h0m0 1h0m1-2h0m0-2h0m0 2h0m0 1h0m0 1h0m0-5h0m1 2h0m0 2h0m0-1h0m0 2h0m0-2h0m0 3h0m0-2h0m0 1h0m1-2h0m34 2h0m0 1h0m1-5h0m1 4h0m0 1h0m0-4h0m0 3h0m0-2h0m0-1h0m0 4h0m0-2h0m0 1h0m0-2h0m0 2h0m1-4h0m0 2h0m0 1h0m0-2h0m0 1h0m1 1h0m39-3h0m0 4h0m0-2h0m0-2h0m1 2h0m0-1h0m0 3h0m0 1h0m1-4h0m0 2h0m0 1h0m0-1h0m0 2h0m0-4h0m1 2h0m0-1h0m0 1h0m0-1h0m0 2h0m21 15h0m15-15h0m0-4h0m0 2h0m0 3h0m0-3h0m0 1h0m0 1h0m1 0h0m0 1h0m0-3h0m0 2h0m0-1h0m0-2h0m0 3h0m0-1h0m0 2h0m0-1h0m27-2h0m0 1h0m0 1h0m1-2h0m0 3h0m0-1h0m0-2h0m0 2h0m1-2h0m0 2h0m1-1h0m0 1h0m10-2h0m0 1h0m0 1h0m0-1h0m1-1h0m0 2h0m0-3h0m0 3h0m0 1h0m0-1h0m0 1h0m0-1h0m0-1h0m0 2h0m1 0h0m1-3h0m0 1h0m6 2h0m18-2h0m1 0h0m0 2h0m0-2h0m0 1h0m1 0h0m0 1h0m0-2h0m0 1h0m0 1h0m2-2h0m9 18h0m1-16h0m0-2h0m1 0h0m1 1h0m13 15h0m11-15h0m0-1h0m1 0h0m0 2h0m0-3h0m0 1h0m0 1h0m1 1h0m0-4h0m0 1h0m1 0h0m24 17h0m6 6h0m8-22h0m0 2h0m1-3h0m0 3h0m0-2h0m0 1h0m0 1h0m1-1h0m0-1h0m0-1h0m0 2h0m0 1h0m0-4h0m0 4h0m1-4h0m0 1h0m35 2h0m2-2h0m0 2h0m0-1h0m0-1h0m0 3h0m0-4h0m0 3h0m0 1h0m0-2h0m0-1h0m1 2h0m0-1h0m0-1h0m1 2h0m5 15h0m34-15h0m0 1h0m0-2h0m1 2h0m0-1h0m0-2h0m0 2h0m0-1h0m2-1h0m16 17h0m6-15h0m1 1h0m12-2h0m0 1h0m1-1h0m0 1h0m0-2h0m1 2h0m1 0h0m13 15h0m0 1h0m12-19h0m1 2h0m0 1h0m1-1h0m0-1h0m0 3h0m0-1h0m0-1h0m0 1h0m1-1h0m0-1h0m0 3h0m1-3h0m16 3h0m19 0h0m1-1h0m1 0h0m0-2h0m0 2h0m1 1h0m0-3h0m0 1h0m0 1h0m0-2h0m0 1h0m0 1h0m1-2h0m35 1h0m1 0h0m0 2h0m0-1h0m0-1h0m1 0h0m0 2h0m0-3h0m0 2h0m1-1h0m0 1h0m40 1h0m0-3h0m1 2h0m0-1h0m0 1h0m0-3h0m0 3h0m0-1h0m0 2h0m1-2h0m1-3h0m0 1h0m0 1h0m0-1h0m1 2h0m4 2h0m0-1h0m18 1h0m1-2h0m0 2h0m1-2h0m0 1h0m1 0h0m0-1h0m0 2h0m10 0h0m0-3h0m1 0h0m0 2h0m0-1h0m0-1h0m0 3h0m0-2h0m0 1h0m0-1h0m1-2h0m0 4h0m0-1h0m0-2h0m1 1h0m17 2h0m9-3h0m0 1h0m0 2h0m0-3h0m1 1h0m0 1h0m0-2h0m1 1h0m8 2h0m28-1h0m1-1h0m0-4h0m1 4h0m0-1h0m0 2h0m0-2h0m0 3h0m0-4h0m0 3h0m1-2h0m0 1h0m0-1h0m0-2h0m0 5h0m0-1h0m0-3h0m0 1h0m0 3h0m1-1h0m0-3h0m10 3h0m1 0h0m19 1h0m5 0h0m0-1h0m1-2h0m1 2h0m0-1h0m0-1h0m0 3h0m0-2h0m0-1h0m1 0h0m0-1h0m0 3h0m19 0h0m1 0h0m18 0h0m1 0h0m0 1h0m1-2h0m0 2h0m0-1h0m0-3h0m0 3h0m0 1h0m1-1h0m0-1h0m0-1h0m0 1h0m1-2h0m0 4h0m36-3h0m0-1h0m1 0h0m1 2h0m0-2h0m0 2h0m0-2h0m0 3h0m0 1h0m1-1h0m0 1h0m0-2h0m0-2h0m0 3h0m0 1h0m0-1h0m1 0h0m0-2h0m17 3h0m3 0h0m6 0h0m0-1h0" stroke="#ffa500" stroke-width="3.90" stroke-linecap="round" fill="none"/>
<path d="M347.5 100.5h0m164 4h0m25 3h0m9 3h0m22-13h0m1 68h0m27-61h0m24 82h0m9-80h0m65 191h0m51-169h0m77-27h0m58 14h0m24-14h0m1 22h0m3-15h0m18-8h0m51 18h0m23-14h0m21-16h0m113 2h0m110 88h0m15-3h0" stroke="#ffa500" stroke-width="3.90" stroke-linecap="round" fill="none"/>
<path d="M1102.5 195.5h0" stroke="#ff0000" stroke-width="3.90" stroke-linecap="round" fill="none"/>
<line x1="105.5" y1="69" x2="1361" y2="69" stroke="#008000" stroke-width="2.08"/>
<line x1="162.0" y1="321.5" x2="162.0" y2="35.5" stroke="#800080" stroke-width="2.08" stroke-dasharray="2.09 3.445"/>
<line x1="1302.81795" y1="321.5" x2="1302.81795" y2="35.5" stroke="#800080" stroke-width="2.08" stroke-dasharray="2.09 3.445"/>
</g>
<text x="732.30" y="311.70" font-size="14.58" text-anchor="middle" textLength="35.35" lengthAdjust="spacingAndGlyphs" fill="#000">7744</text>
<g clip-path="url(#c2)">
<path d="M162.5 543.5h0m0-30h0m0-4h0m0-15h0m0-23h0m0 67h0m0-22h0m0 10h0m0-9h0m0 5h0m0-3h0m0-7h0m0-54h0m0 67h0m0-62h0m0 48h0m1 14h0m0 2h0m0 5h0m0-21h0m0 43h0m0 2h0m0-47h0m0-6h0m0 21h0m0-2h0m0 9h0m0-27h0m0 18h0m0 7h0m1 7h0m0-33h0m0 13h0m0-2h0m0 8h0m0-2h0m0 5h0m0-12h0m0 17h0m0-24h0m0-19h0m0 37h0m0 29h0m0-40h0m0 36h0m0-6h0m0-23h0m0 12h0m1 3h0m0-20h0m0-13h0m0 21h0m0-13h0m0 23h0m0-28h0m0 47h0m0 2h0m0-39h0m0-14h0m0 27h0m1-11h0m0 5h0m0-17h0m0 1h0m0 21h0m0-22h0m1-7h0m0 28h0m0-11h0m0-8h0m0 31h0m0-24h0m0 11h0m0-22h0m0-1h0m0 18h0m0 15h0m0-29h0m0 4h0m0 2h0m1 21h0m0-17h0m0 4h0m0 6h0m0-2h0m0 11h0m0-34h0m0 17h0m0 1h0m0-17h0m1 14h0m0-6h0m0-4h0m1 20h0m0-10h0m0-4h0m0 3h0m0-8h0m1 7h0m0 3h0m0 33h0m0-40h0m0-18h0m0 18h0m1 4h0m0-7h0m0 5h0m0-34h0m0 29h0m0-5h0m0 4h0m0-13h0m0 28h0m0-39h0m0 35h0m0-16h0m1 1h0m0-13h0m0 8h0m0 1h0m0 23h0m0-11h0m0-47h0m0 64h0m0-5h0m0-2h0m1-25h0m0 47h0m0-30h0m0-32h0m0 5h0m0 26h0m0-2h0m0 15h0m0-25h0m0 18h0m0-8h0m0 26h0m0-25h0m0 13h0m0-53h0m0 6h0m1-4h0m0 7h0m0 53h0m0-31h0m0 19h0m0-5h0m0 29h0m0-18h0m0-24h0m0 49h0m1-49h0m0 24h0m0-22h0m0 7h0m0-2h0m0 10h0m0-12h0m0-19h0m1 65h0m0-56h0m0 47h0m0-23h0m0-42h0m0 15h0m0-4h0m0 41h0m1-20h0m0-2h0m0-16h0m0 71h0m0 13h0m0-60h0m0-10h0m0 12h0m0-5h0m0 19h0m0 46h0m0-89h0m0 73h0m1-24h0m0 32h0m0-89h0m0 46h0m0-32h0m0 9h0m0 57h0m0-72h0m0 61h0m0 12h0m1-64h0m0 7h0m0 70h0m0-79h0m0 42h0m0-29h0m0 22h0m0-10h0m0-12h0m0 35h0m0 24h0m0-8h0m1-38h0m0 37h0m0-19h0m0 1h0m0-16h0m0-21h0m0 61h0m0-89h0m0 95h0m0-11h0m0-1h0m0-44h0m0 11h0m0-3h0m0-7h0m1-41h0m0 75h0m0-44h0m0 6h0m0 5h0m0 52h0m0-48h0m0 43h0m1-27h0m0 8h0m0-24h0m0 53h0m0-89h0m0 14h0m0 26h0m0-55h0m0 56h0m0 6h0m0 34h0m0-26h0m1-25h0m0 34h0m0-23h0m0 10h0m0 17h0m0-61h0m0 29h0m0-3h0m0 6h0m0-1h0m0-9h0m0 6h0m0-14h0m0 23h0m1-17h0m0-1h0m0 33h0m0-53h0m0 39h0m0-30h0m0 39h0m0-7h0m0 5h0m0-30h0m1-2h0m0 55h0m0-37h0m0 21h0m0-23h0m0 31h0m0 5h0m0 2h0m0-56h0m0 24h0m0-7h0m1 5h0m0 15h0m0-12h0m0-12h0m0 35h0m0-29h0m1 0h0m0-21h0m0 10h0m0 8h0m0 10h0m0-9h0m0 21h0m0-54h0m0 77h0m0-20h0m1-19h0m0-20h0m0 61h0m0-60h0m0 13h0m0 4h0m0 7h0m0-1h0m0 3h0m0-36h0m0 49h0m0-11h0m0-4h0m1-3h0m0 2h0m0-42h0m0 33h0m0 19h0m0-16h0m0 12h0m0-6h0m0-29h0m0 9h0m1 11h0m0-7h0m0-16h0m0 42h0m0-47h0m0 67h0m0-39h0m0 6h0m0-10h0m0 52h0m0-55h0m0 36h0m0-72h0m1 48h0m0-13h0m0 27h0m0-25h0m0 6h0m0 10h0m0 14h0m0-19h0m0 13h0m0 43h0m0-56h0m1 13h0m0-9h0m0-8h0m0-23h0m0-6h0m0 37h0m0 10h0m0-26h0m1 11h0m0 25h0m0-86h0m0 41h0m0 35h0m1-14h0m0 12h0m0-6h0m0-14h0m0 42h0m0-63h0m0 20h0m0 30h0m1-18h0m0 6h0m0-31h0m0 72h0m0-57h0m0-6h0m0 32h0m0-17h0m1 11h0m0-5h0m0-8h0m0-67h0m0 74h0m0 5h0m0-27h0m0 8h0m0 17h0m1-39h0m0 36h0m0 4h0m0-11h0m0 6h0m0-1h0m0 17h0m0-6h0m0 2h0m0-28h0m0 20h0m0-9h0m0-17h0m0-50h0m1 75h0m0-34h0m0 8h0m0 38h0m0-8h0m0-42h0m0 37h0m0-4h0m0-7h0m0-15h0m0 60h0m0-27h0m1 21h0m0-18h0m0-53h0m0 51h0m0 27h0m0-44h0m0-19h0m0 44h0m0-65h0m0 45h0m0 6h0m1-10h0m0-6h0m0 23h0m0-57h0m0 59h0m0-9h0m0 10h0m0-9h0m0-20h0m0 52h0m0-79h0m1 57h0m0-20h0m0 28h0m0-26h0m0-26h0m0-27h0m0 19h0m0 27h0m0 33h0m0-29h0m0 18h0m0-24h0m0-20h0m1 24h0m0-35h0m0 50h0m0 9h0m0-45h0m0-8h0m1 45h0m0-1h0m0-9h0m0-46h0m0 27h0m0 8h0m0 20h0m0-34h0m0 33h0m0 22h0m1-16h0m0-29h0m0-3h0m0 62h0m0-40h0m0-14h0m0 14h0m0 4h0m0 9h0m0-53h0m0 53h0m0 7h0m0-20h0m0-14h0m1 42h0m0-41h0m0 56h0m0-69h0m0 10h0m0 32h0m0 1h0m0-29h0m0-37h0m0 37h0m0 14h0m0 41h0m1-21h0m0-7h0m0-82h0m0 80h0m0-36h0m0-9h0m0 3h0m1 17h0m0 41h0m0-62h0m0 29h0m0-5h0m0-32h0m0 28h0m0-32h0m0 54h0m0-4h0m1-28h0m0 6h0m0-2h0m0-2h0m0 23h0m0-30h0m0 12h0m0-12h0m0 36h0m1-15h0m0 14h0m0-28h0m0-24h0m0 44h0m0-3h0m0 8h0m0-14h0m1 10h0m0 3h0m0-19h0m0-21h0m0 37h0m0-7h0m0-8h0m0-10h0m0 39h0m0-63h0m0 42h0m0-13h0m1 1h0m0-48h0m0 60h0m0-18h0m0 30h0m0-20h0m0 21h0m0-14h0m0-11h0m0-26h0m0 59h0m1-25h0m0-5h0m0-39h0m0 56h0m0-7h0m0-5h0m0-22h0m0-11h0m1 14h0m0-19h0m0 49h0m0-69h0m0 99h0m0-74h0m0 39h0m0-17h0m0 14h0m0-51h0m0 27h0m0 17h0m0-42h0m0-19h0m0 83h0m1-66h0m0 50h0m0-50h0m0-8h0m0 50h0m0 3h0m0-64h0m0 65h0m0 26h0m0-24h0m0-66h0m0 97h0m0-89h0m0 50h0m0 13h0m0-1h0m1-42h0m0-29h0m0 43h0m0 11h0m0 26h0m0-51h0m0 27h0m0 3h0m0 21h0m0-18h0m1-24h0m0 49h0m0-23h0m0-8h0m0-46h0m0 116h0m0-56h0m1-14h0m0 35h0m0-20h0m0 3h0m0-4h0m0-11h0m0 11h0m0 26h0m0-36h0m0 6h0m1 9h0m0-16h0m0 26h0m0-32h0m0-16h0m0 48h0m0-29h0m0-20h0m1-25h0m0 59h0m0 1h0m0 53h0m0-57h0m0 29h0m0-10h0m0-21h0m0 30h0m0-17h0m0-27h0m0-2h0m0 32h0m1 5h0m0-35h0m0 28h0m0-10h0m0 14h0m0-20h0m0 11h0m0-4h0m0 13h0m0 9h0m1-7h0m0-40h0m0-30h0m0 61h0m0-23h0m0-6h0m0-11h0m0 19h0m0 11h0m1-7h0m0 8h0m0-1h0m0 5h0m0-8h0m0 3h0m0-3h0m0-11h0m0 28h0m0-37h0m0 23h0m0-25h0m0 29h0m1-22h0m0-5h0m0 8h0m0 7h0m0 30h0m0-40h0m0-1h0m0 15h0m0 11h0m0-55h0m0 28h0m0 19h0m1 1h0m0-2h0m0-32h0m0 35h0m0-10h0m0 19h0m0-24h0m0 12h0m0-12h0m0 44h0m0-66h0m0 9h0m0 3h0m0-39h0m1 43h0m0 40h0m0-17h0m0 6h0m0-22h0m0-9h0m0 9h0m0-20h0m0-8h0m0 51h0m1-21h0m0 26h0m0-50h0m0 27h0m0-29h0m0 57h0m1-28h0m0-19h0m0 70h0m0-71h0m0 15h0m0 5h0m0-18h0m1 47h0m0 7h0m0-46h0m0 14h0m0 10h0m0-1h0m1-32h0m0 22h0m0 6h0m0-8h0m0 12h0m0 7h0m0-54h0m0 54h0m0-41h0m1 35h0m0-1h0m0-4h0m0 16h0m0-14h0m0 34h0m0-44h0m0 14h0m0-36h0m1 26h0m0 12h0m0-42h0m0 52h0m0 5h0m0-41h0m0 18h0m0-4h0m1 18h0m0-2h0m0-12h0m0-9h0m0 25h0m0 10h0m0-39h0m0 19h0m0-2h0m0-5h0m1 43h0m0-44h0m0 17h0m0-6h0m0 6h0m0-19h0m0-7h0m0 23h0m0-11h0m0 17h0m0-27h0m0-1h0m1 22h0m0-11h0m0-5h0m0 14h0m0-15h0m0 6h0m0 6h0m0-28h0m0 36h0m0-19h0m1 2h0m0 51h0m0-63h0m0-20h0m0 41h0m0-19h0m0 36h0m0-59h0m0 23h0m0 13h0m0-26h0m0 27h0m0-8h0m1-3h0m0-10h0m0 31h0m0-4h0m0-8h0m0-3h0m0 31h0m0-4h0m0-7h0m0-39h0m0 6h0m0-43h0m1 69h0m0-18h0m0 29h0m0-21h0m0-7h0m0 21h0m0-20h0m0 4h0m0 4h0m0-31h0m0 28h0m0 5h0m0-68h0m0 45h0m1-4h0m0 32h0m0-24h0m0-2h0m0 24h0m0-17h0m0 18h0m0-2h0m0-16h0m0 12h0m0-7h0m0 43h0m0-90h0m1 36h0m0 4h0m0-6h0m0 42h0m0-33h0m0-28h0m0 13h0m0 7h0m1 4h0m0 32h0m0-6h0m0 24h0m0-33h0m0-16h0m0-19h0m0 23h0m0 20h0m0-11h0m1 15h0m0-28h0m0-1h0m0-7h0m0 34h0m0-17h0m0-23h0m0 10h0m1 46h0m0 9h0m0-18h0m0-23h0m0 28h0m0-31h0m0-18h0m0 21h0m0-7h0m0 2h0m0 48h0m0-33h0m0-6h0m1 13h0m0 44h0m0-111h0m1 37h0m0 16h0m0-5h0m0 24h0m0-55h0m1 30h0m0 33h0m0-40h0m0 46h0m0-17h0m0 7h0m0-24h0m0 47h0m0-60h0m0-39h0m0 3h0m1 42h0m0 52h0m0-71h0m0 70h0m0-35h0m0-7h0m0 32h0m0-15h0m1-22h0m0 2h0m0 31h0m0 8h0m0-27h0m0-25h0m0-24h0m0 9h0m0 16h0m1 8h0m0-12h0m0 10h0m0 26h0m0-5h0m0-32h0m0 43h0m0-49h0m0 6h0m0 35h0m0-39h0m0-2h0m0 44h0m0-4h0m0-11h0m0-51h0m1 54h0m0-32h0m0 39h0m0 27h0m0-45h0m0 22h0m0-33h0m0 20h0m0-9h0m1 11h0m0-13h0m0-22h0m0 46h0m0-27h0m0 27h0m0-38h0m0 56h0m0-51h0m0 5h0m0-18h0m1 31h0m0 7h0m0 10h0m0-52h0m0-24h0m0 79h0m0-27h0m0 44h0m1-58h0m0 8h0m0 7h0m0-43h0m0 49h0m0-49h0m0 42h0m0 10h0m0 11h0m0-3h0m1-20h0m0 27h0m0-66h0m0 59h0m0-24h0m0-33h0m0 59h0m0-4h0m0-52h0m0 79h0m0-20h0m0-1h0m0-22h0m1-3h0m0 1h0m0 8h0m0 38h0m0-18h0m0-32h0m0 40h0m0-40h0m0-6h0m0 16h0m0-55h0m0 54h0m1-7h0m0 16h0m0-13h0m0 8h0m0-46h0m0 39h0m0 7h0m0-14h0m0 21h0m0-16h0m0 6h0m0-29h0m0 34h0m0-15h0m0 5h0m1-3h0m0-4h0m0-6h0m0 24h0m0-18h0m0 3h0m0-2h0m0-5h0m0 22h0m1-22h0m0-22h0m0 33h0m0-12h0m0-7h0m0 24h0m0-28h0m1 3h0m0 14h0m0 14h0m0-15h0m0 22h0m0-15h0m1 23h0m0-11h0m0-11h0m0 16h0m0 6h0m0-18h0m0 2h0m0 14h0m1-20h0m0 14h0m0-2h0m0-4h0m0-9h0m0-14h0m0 22h0m0-11h0m0 16h0m1-10h0m0 1h0m0 20h0m0-8h0m0-17h0m0 18h0m1-13h0m0 5h0m0-1h0m0 10h0m0 1h0m0-18h0m0 6h0m0-16h0m0 20h0m0-6h0m0-17h0m1 25h0m0-3h0m0-19h0m1-7h0m0 16h0m0 5h0m0-4h0m0 15h0m0 8h0m0-23h0m1-3h0m0-4h0m0 26h0m0-22h0m0 7h0m0 2h0m0 1h0m0-6h0m0 15h0m0-14h0m0-4h0m0-12h0m0 6h0m1 2h0m0 10h0m0-27h0m0 18h0m0-4h0m0-25h0m0 83h0m0-37h0m0-33h0m0 27h0m0-25h0m1 32h0m0-20h0m0 12h0m0-10h0m0 1h0m0 10h0m1 2h0m0-13h0m0 11h0m0 9h0m1-11h0m0-17h0m0 12h0m0-18h0m0 46h0m0-25h0m0-22h0m1 15h0m0 11h0m0 3h0m0-11h0m0-3h0m0-6h0m0 23h0m0 5h0m0-12h0m0-2h0m0-9h0m0 2h0m0 13h0m1-4h0m0 2h0m0-15h0m0 20h0m0-23h0m0 30h0m0-20h0m0 7h0m0-13h0m0 8h0m0-9h0m0 12h0m1-25h0m0 41h0m0-14h0m0 8h0m0-13h0m0 9h0m1 2h0m0-23h0m0 7h0m0-16h0m0 33h0m0-18h0m0 2h0m0-10h0m1 19h0m0 8h0m0-22h0m0 23h0m0-13h0m0-2h0m0-29h0m0 19h0m0 26h0m1-3h0m0 20h0m0-46h0m0 22h0m0-36h0m0 9h0m0-4h0m0 4h0m0 17h0m0 20h0m1-21h0m0-23h0m0 43h0m0-17h0m0-31h0m0 49h0m0-23h0m0-18h0m0 7h0m0 2h0m0 15h0m0-33h0m0 27h0m0 15h0m0-8h0m1-9h0m0-5h0m0-9h0m0 19h0m0-29h0m0 10h0m0 23h0m1 11h0m0-70h0m0 11h0m0 75h0m0-79h0m0 62h0m0-20h0m0-30h0m0 84h0m1-25h0m0-34h0m0-18h0m0 51h0m0-59h0m0 2h0m1-16h0m0 53h0m0-6h0m0-17h0m0 9h0m0 36h0m0-56h0m0 45h0m0 18h0m0-70h0m0 24h0m0-23h0m0 73h0m1-12h0m0 12h0m0-35h0m0 18h0m0-30h0m0-2h0m0-33h0m0 58h0m0-18h0m0 13h0m0-40h0m0 46h0m0-39h0m0 39h0m0-24h0m1 19h0m0-53h0m0 60h0m0-61h0m0-13h0m0 122h0m0-110h0m0 68h0m0-19h0m0 2h0m0-32h0m0-10h0m0 13h0m0 15h0m0 3h0m0 59h0m1-24h0m0 22h0m0-21h0m0-41h0m0 30h0m0 14h0m0 5h0m0-29h0m1 3h0m0-15h0m0-2h0m0-30h0m0 11h0m0 59h0m0-28h0m0-22h0m1 48h0m0-43h0m0-49h0m0 91h0m0-7h0m0 23h0m0-18h0m0-33h0m0 8h0m0 30h0m0-27h0m0 26h0m0-18h0m0 11h0m0-25h0m0 16h0m1-28h0m0 16h0m0 25h0m0-24h0m0-6h0m0 36h0m0-2h0m0-38h0m0 27h0m0 11h0m0 26h0m0-57h0m1 11h0m0 33h0m0-31h0m0 46h0m0-38h0m0 11h0m0-39h0m0 35h0m0-8h0m0 9h0m0-17h0m0 42h0m0 6h0m0-13h0m0-52h0m1-13h0m0 37h0m0 1h0m0-6h0m0-5h0m0 30h0m0-80h0m0 34h0m0 29h0m0-3h0m0-23h0m0 45h0m1-13h0m0-3h0m0-8h0m0-33h0m0-15h0m0 17h0m0 28h0m0-33h0m0 25h0m0-12h0m0 10h0m1-37h0m0 18h0m0 21h0m0 10h0m0-56h0m0 55h0m0 35h0m0-40h0m0-21h0m0-18h0m1 3h0m0 18h0m0 36h0m0-17h0m0 23h0m0 8h0m1-37h0m0 23h0m0-55h0m0 32h0m0-25h0m0-2h0m0 37h0m0-43h0m0 49h0m1-27h0m0 38h0m0-3h0m0-59h0m0 72h0m0-78h0m0 57h0m0-16h0m0-2h0m0 27h0m0-50h0m0 24h0m1-17h0m0 43h0m0-50h0m0 11h0m0 18h0m0 22h0m0-31h0m0 11h0m0-22h0m0 17h0m0-4h0m0-22h0m0 40h0m0-35h0m1-1h0m0 11h0m0-16h0m0-1h0m0 16h0m0-36h0m0 33h0m0-14h0m0-12h0m1 16h0m0 31h0m0 24h0m0-32h0m0-5h0m0-17h0m0 19h0m0-4h0m0 3h0m1 0h0m0-9h0m0 2h0m0 3h0m0 9h0m0 11h0m0-26h0m0-6h0m0 46h0m1-35h0m0-12h0m0 19h0m0-41h0m0 54h0m0-23h0m0-7h0m0 15h0m0-14h0m0 16h0m0-12h0m0-32h0m0 26h0m0 35h0m1 6h0m0-16h0m0 5h0m0-1h0m0-20h0m0 24h0m0-26h0m0 19h0m0 9h0m0-18h0m0 33h0m0-35h0m1-6h0m0-1h0m0-22h0m0 44h0m0-20h0m0 20h0m0-4h0m0-17h0m0-16h0m0 45h0m1-25h0m0-10h0m0-1h0m0-1h0m0 35h0m0-41h0m0 26h0m0-41h0m0 49h0m0-21h0m0 2h0m0-9h0m0-15h0m0 59h0m1-31h0m0 26h0m0-14h0m0-26h0m0 7h0m0 17h0m0-8h0m0-12h0m0 16h0m0 8h0m1 5h0m0 8h0m0-27h0m0 64h0m0-4h0m0-99h0m0 60h0m0 4h0m0-83h0m1 59h0m0-11h0m0 5h0m0-23h0m0 24h0m0-29h0m0 41h0m0 5h0m0 5h0m0-45h0m0 25h0m0-9h0m0 25h0m0-19h0m0 29h0m1-23h0m0 8h0m0-31h0m0-4h0m0 13h0m0-6h0m0-4h0m0-16h0m0 64h0m0-37h0m0 10h0m0 23h0m1-20h0m0 12h0m0-1h0m0 9h0m0-1h0m0-14h0m1-20h0m0 7h0m0-9h0m0 20h0m0 63h0m0-14h0m0-38h0m0-5h0m0-13h0m0 3h0m0-23h0m0-11h0m1 24h0m0 15h0m0-11h0m0 4h0m0 38h0m0-90h0m0 93h0m0-49h0m0 9h0m0 2h0m0-5h0m0 35h0m1-8h0m0 2h0m0-16h0m0-6h0m0-2h0m0 22h0m0 25h0m0-46h0m0-12h0m0-9h0m0 3h0m1-1h0m0 16h0m0 13h0m0-21h0m0 40h0m0-10h0m0-18h0m0 8h0m0-12h0m0 26h0m0-54h0m0 4h0m0 58h0m1-74h0m0 39h0m0 11h0m0 10h0m0 12h0m0-45h0m0 19h0m0 3h0m0 10h0m1-37h0m0 38h0m0-9h0m0 46h0m0-50h0m0-11h0m0-3h0m1-7h0m0 47h0m0-43h0m0 31h0m0-27h0m0 15h0m0 7h0m1-58h0m0 71h0m0 21h0m0-50h0m0 14h0m0 23h0m0-67h0m0 9h0m0-3h0m0 45h0m0-41h0m0 6h0m1 7h0m0 21h0m0-35h0m0 33h0m0-45h0m0 16h0m0 3h0m1 41h0m0 23h0m0-80h0m0 29h0m0 3h0m0 13h0m0-24h0m0 33h0m0 8h0m0 2h0m0 2h0m0-35h0m0 4h0m1 51h0m0-62h0m0 61h0m0-111h0m0 75h0m0-5h0m0 26h0m0-45h0m0 4h0m0 22h0m1-62h0m0 46h0m0-19h0m0 46h0m0-43h0m0 23h0m0-29h0m1 37h0m0-3h0m0-7h0m0-1h0m0-24h0m0 28h0m0-38h0m0 68h0m0-34h0m0 26h0m0-8h0m0-47h0m1 21h0m0 2h0m0-43h0m0 16h0m0 20h0m0-8h0m0-32h0m0 60h0m1-52h0m0-6h0m0 90h0m0-39h0m0 16h0m0-17h0m0-15h0m0 10h0m0-55h0m0 51h0m0-2h0m0 16h0m0-5h0m0-21h0m0-27h0m1-15h0m0 27h0m0-4h0m0 24h0m0-37h0m0-3h0m0 70h0m0-19h0m0-45h0m0-16h0m0 82h0m0-6h0m0 2h0m0-29h0m0 8h0m0 14h0m0-15h0m0-28h0m1-31h0m0 53h0m0 9h0m0-50h0m0 54h0m0 17h0m0-24h0m0-38h0m0 34h0m0 7h0m1 20h0m0-39h0m0 61h0m0-19h0m0-22h0m0-3h0m0-8h0m0-18h0m0 22h0m0 12h0m0 23h0m0-12h0m0-15h0m0-15h0m0 4h0m1 37h0m0-39h0m0 39h0m0-58h0m0 58h0m0-10h0m0-16h0m1 9h0m0-7h0m0-13h0m0 16h0m0 3h0m0-17h0m0 13h0m0 17h0m0-12h0m0-18h0m0 45h0m0-39h0m1 32h0m0-13h0m0 14h0m0-15h0m0-24h0m0 41h0m0-34h0m1-12h0m0-1h0m0 33h0m0 27h0m0-43h0m0 22h0m0-34h0m0 34h0m0 6h0m1-19h0m0 22h0m0-62h0m0 65h0m0-26h0m0-8h0m0 24h0m0-7h0m0-1h0m0-35h0m0 10h0m0 24h0m0-21h0m0 16h0m1-20h0m0 18h0m0-20h0m0 8h0m0 23h0m0 11h0m1 15h0m0-33h0m0 2h0m0 24h0m0-51h0m0 39h0m0 3h0m0-62h0m1 75h0m0-36h0m0 19h0m0-15h0m0-50h0m0 20h0m0 25h0m0-29h0m0-21h0m0 62h0m0-11h0m0 24h0m1-53h0m0-12h0m0 60h0m0-51h0m0 29h0m0-37h0m0 80h0m1-57h0m0 19h0m0-13h0m0-23h0m0 45h0m0-42h0m0 42h0m0 19h0m0-73h0m0 42h0m0-26h0m0 60h0m0-22h0m0 8h0m0-6h0m0-44h0m0 6h0m0 23h0m0-59h0m1 44h0m0 7h0m0 17h0m0-7h0m0 18h0m0-44h0m0-25h0m0 16h0m0 33h0m0-6h0m0 17h0m0 14h0m0-47h0m1 27h0m0-7h0m0-14h0m0 18h0m0-36h0m0 61h0m0-48h0m0 10h0m0-14h0m1 37h0m0-32h0m0 18h0m0-30h0m0 41h0m0 4h0m1 7h0m0-71h0m0 54h0m0-46h0m0 40h0m0 1h0m1-38h0m0 96h0m0-54h0m0-45h0m0 19h0m0 4h0m0 11h0m0 36h0m0-46h0m0 3h0m0 10h0m0 12h0m1-6h0m0 15h0m0-3h0m0-33h0m0-2h0m0 33h0m0-47h0m0 31h0m0-14h0m0 30h0m0-6h0m0-24h0m1 8h0m0 35h0m0-17h0m0-40h0m0 54h0m0-18h0m0-6h0m0-7h0m0 21h0m0-3h0m0-6h0m1-3h0m0 11h0m0-31h0m0-2h0m0 14h0m0-5h0m0 2h0m0 6h0m0 28h0m1-54h0m0 33h0m0 25h0m0-38h0m0 5h0m0-23h0m1 36h0m0 5h0m0-28h0m0 10h0m0 31h0m0 3h0m0-26h0m0-15h0m0 8h0m0 5h0m0-17h0m0 16h0m1-7h0m0 6h0m0-3h0m0 24h0m0-21h0m0 28h0m0-31h0m0 31h0m1-38h0m0 18h0m0-9h0m0-10h0m0 46h0m0-29h0m0 10h0m0-33h0m0 29h0m0 2h0m0-8h0m0-11h0m0 2h0m0-10h0m0 9h0m0 3h0m0 15h0m0 2h0m1-27h0m0-11h0m0 52h0m0-24h0m0-12h0m0 13h0m0-14h0m0 4h0m0-25h0m0 25h0m0 28h0m0-11h0m0-15h0m0 4h0m0 9h0m0-51h0m0 55h0m0-24h0m0 6h0m0 6h0m1-14h0m0 7h0m0 11h0m0 4h0m0-24h0m0 21h0m0 12h0m0-35h0m1 17h0m0 2h0m0 24h0m0-53h0m0 14h0m0-9h0m0-30h0m0 27h0m0 25h0m0-17h0m0-42h0m0 53h0m1 2h0m0-59h0m0 56h0m0 15h0m0-7h0m0-16h0m0 5h0m0 10h0m0-13h0m0 15h0m0-8h0m0 3h0m0-7h0m0-10h0m1 32h0m0-25h0m0-3h0m0 6h0m0 39h0m0-64h0m0 20h0m0-6h0m0 19h0m0-19h0m0 34h0m1-30h0m0 29h0m0 16h0m0-39h0m0 16h0m0 2h0m0 28h0m0 2h0m0-56h0m0 41h0m0-9h0m0-14h0m0 4h0m0-26h0m0 3h0m0 47h0m1-54h0m0-11h0m0 36h0m0 25h0m0-46h0m0 43h0m0-18h0m0-31h0m0 25h0m0 1h0m0-12h0m1-4h0m0 42h0m0-63h0m0 58h0m0-11h0m0-2h0m0 16h0m0-35h0m0 20h0m1 10h0m0-16h0m0 25h0m0-64h0m0 41h0m1 13h0m0-29h0m0 35h0m0-12h0m0-34h0m0 31h0m0 13h0m0-33h0m0-1h0m0 20h0m1 40h0m0-63h0m0 24h0m0-24h0m0 25h0m0-64h0m0 68h0m1-4h0m0-27h0m0 54h0m0-38h0m0 15h0m0-21h0m0-50h0m0 63h0m0-30h0m0 36h0m0-38h0m0 56h0m0-81h0m0 21h0m0 74h0m1-78h0m0-22h0m0 76h0m0-45h0m0 49h0m0-47h0m0 18h0m0-5h0m0 3h0m0 46h0m0-21h0m1 8h0m0-61h0m0 34h0m0-33h0m0 14h0m0 29h0m0 27h0m0-67h0m0-28h0m1 40h0m0 37h0m0-17h0m0-52h0m0 36h0m0 6h0m0 62h0m0-99h0m0 63h0m0-27h0m1-3h0m0 5h0m0 52h0m0-76h0m0 42h0m0-32h0m0 33h0m0-9h0m0-41h0m0 45h0m0 5h0m0-19h0m0-10h0m0 55h0m1-45h0m0-5h0m0 49h0m0-67h0m0 48h0m0-39h0m0 13h0m0-5h0m0 20h0m0-24h0m0-24h0m0 64h0m1 10h0m0-62h0m0 11h0m0 14h0m0 17h0m0 33h0m0-56h0m0 8h0m0 3h0m1-15h0m0 34h0m0-14h0m0 11h0m0-27h0m0 50h0m0-9h0m0-28h0m0 9h0m0 4h0m0-41h0m0 18h0m0-12h0m1 18h0m0 15h0m0-32h0m0 14h0m0-39h0m0 34h0m0-40h0m0 79h0m0-71h0m0 75h0m0-20h0m1 4h0m0-5h0m0-25h0m0 10h0m0 35h0m0-56h0m0 35h0m0 7h0m0-34h0m0 52h0m1-61h0m0 10h0m0 17h0m0-17h0m0 10h0m0-20h0m0 35h0m1-2h0m0-22h0m0-15h0m0 35h0m0-19h0m0 22h0m0 1h0m0 10h0m0 19h0m0-50h0m1 54h0m0-21h0m0 4h0m0-31h0m0-16h0m0 46h0m0-33h0m0 28h0m0-40h0m0 6h0m0-26h0m0 53h0m0-42h0m0 42h0m1 10h0m0-21h0m0-40h0m0 20h0m0 18h0m0-4h0m0-44h0m0 9h0m0 40h0m0 26h0m1-68h0m0 52h0m0 1h0m0 28h0m0-29h0m0-22h0m0 33h0m1-11h0m0-44h0m0-26h0m0 42h0m0-20h0m1 32h0m0 13h0m0 2h0m0-8h0m0-29h0m0 70h0m0-18h0m0-33h0m0-22h0m0 68h0m0-50h0m1-14h0m0 77h0m0-17h0m0-20h0m0-21h0m0 44h0m0-50h0m0 30h0m1 3h0m0-42h0m0 8h0m0 26h0m0-27h0m0-3h0m0 21h0m0 31h0m0-33h0m0 21h0m1-18h0m0 20h0m0-12h0m0-38h0m0-7h0m1 16h0m0 12h0m0 2h0m0 13h0m0-32h0m0 28h0m0-26h0m1 25h0m0-1h0m0-32h0m0 25h0m0-4h0m0 7h0m1-1h0m0-34h0m0 53h0m0-24h0m0 10h0m0-1h0m0-24h0m0 11h0m0-2h0m0 30h0m0-44h0m0 35h0m1-8h0m0-13h0m0-10h0m0 9h0m0 10h0m0-18h0m0 13h0m1 4h0m0 5h0m0-15h0m0 11h0m0 1h0m0-29h0m0 9h0m0-2h0m0 6h0m1 16h0m0-3h0m0-1h0m0-9h0m0 17h0m0-29h0m0 2h0m0 23h0m0-11h0m0 75h0m0-61h0m1 1h0m0-21h0m0 4h0m0 20h0m0-12h0m0-7h0m0 4h0m0 6h0m1 10h0m0-19h0m0 7h0m0 10h0m0 20h0m0-12h0m0-49h0m0 10h0m0 13h0m0-25h0m1 48h0m0-34h0m0 5h0m0 17h0m0 9h0m0-11h0m0 6h0m1 18h0m0-33h0m0 18h0m0-32h0m0 11h0m0 36h0m0-28h0m0-4h0m0 33h0m0-24h0m0 26h0m0 20h0m1 7h0m0-49h0m0 11h0m0-18h0m0-38h0m0 61h0m0-24h0m0 11h0m1-1h0m0-13h0m0 1h0m0 25h0m0 12h0m0-41h0m0 14h0m0 40h0m1-13h0m0-37h0m0 16h0m0 30h0m0-25h0m0 21h0m0-26h0m0 37h0m0-47h0m0 36h0m0-22h0m0 26h0m0-49h0m0 18h0m0-16h0m0 43h0m0-28h0m0 6h0m0 5h0m0-70h0m0 80h0m1-12h0m0-23h0m0 36h0m0-23h0m0 52h0m0-64h0m0-45h0m0-3h0m0 67h0m0 14h0m0-39h0m0-15h0m0 14h0m0 3h0m1 34h0m0-54h0m0 26h0m0-3h0m0 72h0m0-91h0m0 22h0m0 14h0m0-1h0m0-18h0m0 6h0m0 3h0m0-21h0m0-5h0m0 19h0m0 31h0m1-11h0m0 9h0m0-31h0m0-5h0m0 14h0m0 11h0m0-15h0m0 16h0m0-13h0m0-29h0m0 57h0m0-41h0m0 7h0m0 36h0m0-59h0m1 15h0m0-45h0m0 34h0m0 5h0m0 30h0m0 2h0m0 53h0m0-87h0m0 32h0m1 5h0m0-26h0m0 10h0m0-7h0m0 1h0m0-5h0m0 17h0m0-23h0m0 19h0m0 9h0m0-17h0m1 49h0m0-42h0m0-44h0m0 63h0m0-8h0m0-14h0m0-4h0m0-3h0m0 2h0m0-14h0m0-21h0m0 29h0m0 14h0m0 32h0m0-48h0m1 14h0m0-6h0m0 17h0m0 54h0m1-66h0m0 2h0m0 14h0m0 2h0m0 22h0m0-21h0m1 3h0m0-22h0m0-26h0m0 16h0m0 42h0m0-34h0m0 24h0m0-61h0m1 53h0m0-14h0m0-43h0m0 5h0m0 76h0m0-32h0m0-49h0m0 46h0m0 2h0m0-44h0m0 23h0m0 7h0m1-32h0m0 41h0m0 7h0m0 8h0m0-50h0m0 32h0m0 30h0m0-33h0m0 24h0m0-26h0m0 9h0m0-24h0m0-16h0m0 48h0m0 10h0m0-23h0m0 4h0m0 3h0m0-62h0m1 69h0m0-50h0m0 69h0m0-54h0m0 41h0m0-47h0m0 31h0m0-5h0m0 29h0m0 2h0m0-6h0m0-17h0m0-42h0m1 29h0m0 21h0m0-6h0m0-17h0m0 13h0m0-53h0m0 91h0m0-26h0m0 5h0m0-29h0m0 28h0m0-18h0m1 6h0m0 2h0m0-2h0m0-8h0m0 18h0m0 24h0m0-74h0m0 85h0m0-31h0m0-30h0m0 21h0m0-14h0m0-7h0m0 10h0m1-46h0m0 77h0m0-19h0m0-4h0m0-1h0m0 14h0m0 8h0m0-49h0m0 12h0m0 7h0m1 20h0m0-17h0m0 21h0m0-21h0m0 11h0m0 11h0m0-15h0m0-29h0m0 46h0m0-24h0m0-18h0m0-22h0m1 31h0m0 10h0m0-7h0m0 5h0m0 40h0m0-53h0m0 22h0m0-11h0m0 15h0m0-6h0m0-17h0m1 11h0m0-6h0m0 13h0m0-27h0m0 27h0m0-17h0m0 49h0m0-46h0m0-7h0m0 6h0m1-30h0m0 61h0m0-7h0m0-1h0m0-10h0m0-12h0m0-6h0m0-4h0m0 24h0m0 4h0m0-3h0m0-27h0m0 48h0m1-47h0m0 13h0m0-2h0m0-7h0m0-29h0m0 27h0m0 26h0m0-24h0m0 12h0m1-26h0m0 14h0m0 26h0m0 12h0m1-28h0m0 3h0m0-7h0m0-5h0m0 9h0m0 10h0m0-28h0m0 36h0m0-14h0m0-20h0m0 17h0m0-24h0m0 23h0m0-12h0m0-2h0m1 23h0m0-23h0m0-30h0m0 20h0m0 18h0m0 35h0m0-36h0m0 10h0m0-12h0m0 30h0m1-30h0m0 20h0m0 3h0m0 17h0m0-49h0m0 49h0m0-14h0m0-28h0m0 18h0m0 28h0m0-31h0m1 24h0m0-57h0m0 11h0m0 2h0m0 28h0m0 12h0m0-4h0m0 21h0m0-57h0m0 1h0m0-12h0m0 15h0m0 25h0m0-11h0m0 66h0m1-66h0m0 22h0m0 17h0m0-5h0m0-31h0m0 6h0m1-31h0m0 61h0m0-3h0m0-2h0m0-11h0m0-25h0m0 36h0m0 21h0m1-64h0m0-37h0m0 53h0m0-37h0m0 52h0m0 23h0m0-8h0m0-39h0m0 3h0m0 28h0m0-17h0m0 15h0m1 18h0m0-51h0m0 35h0m0-29h0m0 18h0m0-3h0m0-19h0m0 3h0m0 10h0m0-17h0m0 42h0m0-42h0m0 44h0m0-77h0m0 18h0m0 3h0m0 16h0m0 65h0m0-64h0m0 3h0m0-52h0m0 46h0m0 44h0m1-34h0m0-2h0m0 67h0m0-55h0m0 32h0m0-69h0m0 58h0m0-80h0m0 73h0m0 2h0m0 5h0m0-42h0m0 19h0m0-18h0m0 8h0m1 12h0m0 31h0m0-98h0m0 35h0m0 22h0m0 15h0m0 19h0m1-25h0m0-21h0m0 4h0m0-2h0m0 44h0m0-67h0m0 1h0m0 65h0m0-24h0m1-19h0m0-18h0m0 18h0m0 58h0m0-33h0m0-18h0m0 13h0m0 5h0m1 10h0m0-31h0m0-6h0m0 6h0m0-17h0m0 64h0m0-36h0m0-63h0m0 53h0m0 19h0m0 7h0m0-19h0m1 15h0m0-34h0m0 20h0m0-5h0m0 32h0m0-61h0m0 53h0m0-9h0m0-2h0m0 8h0m0 12h0m0-37h0m0 9h0m1 15h0m0-7h0m0-20h0m0 2h0m0 41h0m0-51h0m0-15h0m0 60h0m0-32h0m0 65h0m0-47h0m0 14h0m0-1h0m0-16h0m1-8h0m0-23h0m0 10h0m0-5h0m0-43h0m0 41h0m0-2h0m0 37h0m0-44h0m0 74h0m0-51h0m0 26h0m0-5h0m0 5h0m0-82h0m1 70h0m0-15h0m0 6h0m0 28h0m0-4h0m0-11h0m0-32h0m0 10h0m0 18h0m0 22h0m0-93h0m1 97h0m0-40h0m0 18h0m0-18h0m0-7h0m0 19h0m0 10h0m0-8h0m0-46h0m0 63h0m0-74h0m0 71h0m0 26h0m0-30h0m0-43h0m1-3h0m0 29h0m0 6h0m0-16h0m0 28h0m0-28h0m0 7h0m0-1h0m0 44h0m0-35h0m0-41h0m1 5h0m0-26h0m0 35h0m0 1h0m0 3h0m0 7h0m0 14h0m1-2h0m0-31h0m0 21h0m0 50h0m0-35h0m0 3h0m0-28h0m0 19h0m0-14h0m0-15h0m0-16h0m0 42h0m0 11h0m0 12h0m1-56h0m0 32h0m0-8h0m0 4h0m1 5h0m0 24h0m0-31h0m0 39h0m0-31h0m0-1h0m0-14h0m0-16h0m0 21h0m0 8h0m0-18h0m0 13h0m0-2h0m0-7h0m0-1h0m1 14h0m0 12h0m0-25h0m0 17h0m0-5h0m0-10h0m0-6h0m0 16h0m0 7h0m0-13h0m0-21h0m1 43h0m0-19h0m0-4h0m0 23h0m0-29h0m0 7h0m0 7h0m0 22h0m0-38h0m0 19h0m0-30h0m0 17h0m0 6h0m1 64h0m0-51h0m0-5h0m0-15h0m0 13h0m0-43h0m0 75h0m0-91h0m0 54h0m1 28h0m0-37h0m0-16h0m0 50h0m0-57h0m0 39h0m0 9h0m0 25h0m0-10h0m0-42h0m0 28h0m0-10h0m0-29h0m0 65h0m0-45h0m1 11h0m0 10h0m0-45h0m0 60h0m0-25h0m0-64h0m0 49h0m0 5h0m0 1h0m0 33h0m0-39h0m0-37h0m1 77h0m0-74h0m0 13h0m0 27h0m0 18h0m0-15h0m0 33h0m0-29h0m0-8h0m0 28h0m0-76h0m0 96h0m0-102h0m0 60h0m1-58h0m0 11h0m0 40h0m0-44h0m0 7h0m0 110h0m0-77h0m0-19h0m0 34h0m0-13h0m0-4h0m0 18h0m0-12h0m0 37h0m0-31h0m0-23h0m0-31h0m0 59h0m1 7h0m0 24h0m0-34h0m0-14h0m0-4h0m0 28h0m0-16h0m0 24h0m0 6h0m0-1h0m0 42h0m0-67h0m1 10h0m0 8h0m0-35h0m0-19h0m0 66h0m0-59h0m0 8h0m0 29h0m0-27h0m0 41h0m0-40h0m0 45h0m0-39h0m1 42h0m0-27h0m0-34h0m0 32h0m0 34h0m0-18h0m0-56h0m0 34h0m0 15h0m0 19h0m0-21h0m0-3h0m0-12h0m0-4h0m1-2h0m0 8h0m0 2h0m0 49h0m0-37h0m0-24h0m0 42h0m0-24h0m0-14h0m0 14h0m0-13h0m0 22h0m0-16h0m1 26h0m0-41h0m0 25h0m0-26h0m0 57h0m0 3h0m0-42h0m0 24h0m0-11h0m0-14h0m1 32h0m0-50h0m0 9h0m0-13h0m0 67h0m0-19h0m0-45h0m0 18h0m0 27h0m0 23h0m0-69h0m0-6h0m0 55h0m1-37h0m0 13h0m0 38h0m0-62h0m0-15h0m0 12h0m0 47h0m0-20h0m0-11h0m0 17h0m1-25h0m0-2h0m0-4h0m0 9h0m0 20h0m0-31h0m0 60h0m0-37h0m0-6h0m0-26h0m0 63h0m0-68h0m0 40h0m0 50h0m1-31h0m0-14h0m0 20h0m0 18h0m0 10h0m0-18h0m0-51h0m0-10h0m0 26h0m1 3h0m0-44h0m0 40h0m0 46h0m0-48h0m0 29h0m0-27h0m1 5h0m0-2h0m0-2h0m0 6h0m0 1h0m0-4h0m0-27h0m1 10h0m0-4h0m0 48h0m0-22h0m0-12h0m0-8h0m0 30h0m1 16h0m0-21h0m0 11h0m0-1h0m0-27h0m0 12h0m0-13h0m0-11h0m0 39h0m0-49h0m0 30h0m0 22h0m0-8h0m0-46h0m0 19h0m1 20h0m0 21h0m0-87h0m0 78h0m0-12h0m0-4h0m0 8h0m0-33h0m0 45h0m0-13h0m0 13h0m0-14h0m0-5h0m0 14h0m1-6h0m0 37h0m0-64h0m0 39h0m0-33h0m0 30h0m0-32h0m0-12h0m0 57h0m0-32h0m0 33h0m1 15h0m0-59h0m0 36h0m0-33h0m0 22h0m0-9h0m0-8h0m0-32h0m0 29h0m0 4h0m0 19h0m1 0h0m0-19h0m0 3h0m0-2h0m0 39h0m0-50h0m0 27h0m0-13h0m0-24h0m0 31h0m0 11h0m0-16h0m0-24h0m1-40h0m0-8h0m0 77h0m0 1h0m0-18h0m0 23h0m0-42h0m0 6h0m0 14h0m0-56h0m0 62h0m1 16h0m0 1h0m0-74h0m0 6h0m0-7h0m0 46h0m0-28h0m0-18h0m0 22h0m0 65h0m1-13h0m0-20h0m0 1h0m0-9h0m0 44h0m0-60h0m0-20h0m0 12h0m0 14h0m0 27h0m0-1h0m1 4h0m0-61h0m0 64h0m0-18h0m0-43h0m0 46h0m0 14h0m0-38h0m0 18h0m0-6h0m0 13h0m0-12h0m0 8h0m1 10h0m0-14h0m0 27h0m0-1h0m0 1h0m0-5h0m0 6h0m0-62h0m0 63h0m0-30h0m0 55h0m0-51h0m0 18h0m0-7h0m1-18h0m0-23h0m0 58h0m0 13h0m0-12h0m0 8h0m0-28h0m1-20h0m0 52h0m0-19h0m0-3h0m0-8h0m0 18h0m0-1h0m0-6h0m1-18h0m0-36h0m0 45h0m0-2h0m0 1h0m0 9h0m0 25h0m0-54h0m0 27h0m0-18h0m0-12h0m0 47h0m0-34h0m1 15h0m0-34h0m0 19h0m0 17h0m0-4h0m0-15h0m0 9h0m0-41h0m0 34h0m1-3h0m0 31h0m0-70h0m0 58h0m0-8h0m0-13h0m0 32h0m0-46h0m0 27h0m0-22h0m0-16h0m0-24h0m0 50h0m0-25h0m1 28h0m0-17h0m0 21h0m0-8h0m0-53h0m0 37h0m0 18h0m0-5h0m0 37h0m0-1h0m0-11h0m0 3h0m0 26h0m0-36h0m0-2h0m0 24h0m0-16h0m1-24h0m0 41h0m0-23h0m0 21h0m0 2h0m0-27h0m0 2h0m0 9h0m0-29h0m0 5h0m0 17h0m0-3h0m0-13h0m0 13h0m0 8h0m1-17h0m0-2h0m0 10h0m0-14h0m0 3h0m0 7h0m0-22h0m0 18h0m0 12h0m0-18h0m0 32h0m1-13h0m0 15h0m0-21h0m0-45h0m0 44h0m0-14h0m0 24h0m0-20h0m0 18h0m1-22h0m0 13h0m0-4h0m0 48h0m0-48h0m0 20h0m0-9h0m0 15h0m0-34h0m0 24h0m0-18h0m0 14h0m1-7h0m0 44h0m0-65h0m0 28h0m0-18h0m0 14h0m0 5h0m0-7h0m0-16h0m0-7h0m0 10h0m0 14h0m0-24h0m1 53h0m0-35h0m0-9h0m0 24h0m0 1h0m0-10h0m0-14h0m0 10h0m0 15h0m0-6h0m0-33h0m0 34h0m1 12h0m0-31h0m0-13h0m0 13h0m0 10h0m0-3h0m0-33h0m0 27h0m0 7h0m1 16h0m0-24h0m0 24h0m0 4h0m0-5h0m0-20h0m0 24h0m0-22h0m0 2h0m0-16h0m0 7h0m0 30h0m0-14h0m1-1h0m0-8h0m0-1h0m0-7h0m0 8h0m0 23h0m0-22h0m0 32h0m0-21h0m0-12h0m0 22h0m1-18h0m0 14h0m0-20h0m0 27h0m0-15h0m0-3h0m0-7h0m0-3h0m0-20h0m0 47h0m0-7h0m1-65h0m0 75h0m0-41h0m0 26h0m0 1h0m0-27h0m0-5h0m0-14h0m0 63h0m0-20h0m0-11h0m0 13h0m0 7h0m0-10h0m0-6h0m0-3h0m1 21h0m0-16h0m0-7h0m0-4h0m0 9h0m0 25h0m0-51h0m0 13h0m0 6h0m0-24h0m0 43h0m0-52h0m1 52h0m0-40h0m0 15h0m0 27h0m0-46h0m0 31h0m0 26h0m0-11h0m0 2h0m0-45h0m1 20h0m0 4h0m0 27h0m0-11h0m0 24h0m0-22h0m0-4h0m1-3h0m0 42h0m0-25h0m0-25h0m0 18h0m0-24h0m0 30h0m0-20h0m1 31h0m0-12h0m0-44h0m0 20h0m0 15h0m0 1h0m0 12h0m0-30h0m0 55h0m1-67h0m0 44h0m0-4h0m0-25h0m0 7h0m0 26h0m0-31h0m0 19h0m0 2h0m0-10h0m0 11h0m0 6h0m0-29h0m0-23h0m0 27h0m0-24h0m1-6h0m0 45h0m0-33h0m0 10h0m0 11h0m0-20h0m0 46h0m0 10h0m0-56h0m0 15h0m0-48h0m0 31h0m0 53h0m1-39h0m0-9h0m1 30h0m0-28h0m0 39h0m0 13h0m0-59h0m0 7h0m0-48h0m0 63h0m0 2h0m0-51h0m0 19h0m0 7h0m0 16h0m0 31h0m1-33h0m0-14h0m0 10h0m0 31h0m0-50h0m0 12h0m0-9h0m0 39h0m0 9h0m0 20h0m1-1h0m0-28h0m0-18h0m0 19h0m0 23h0m0-26h0m1-40h0m0 14h0m0-4h0m0 9h0m0-7h0m0-2h0m1-11h0m0 5h0m0 45h0m0-27h0m0-5h0m0-22h0m0 43h0m0-28h0m0-8h0m0 82h0m0-42h0m0-10h0m0 31h0m1 11h0m0-5h0m0-73h0m0 19h0m0 26h0m0-23h0m0 25h0m0-19h0m0 42h0m0-68h0m0 71h0m0-43h0m0-5h0m0-7h0m1-18h0m0-25h0m0 55h0m0-17h0m0 6h0m0-18h0m1 39h0m0 40h0m0-82h0m0 17h0m0 13h0m0-2h0m1 49h0m0-85h0m0 35h0m0-18h0m0 26h0m0-26h0m0 25h0m0-21h0m0-3h0m0 62h0m1-63h0m0-3h0m0 40h0m0-19h0m0-22h0m0 16h0m0-7h0m0 18h0m0 47h0m0-18h0m1-43h0m0-2h0m0 24h0m0-25h0m0-9h0m1 20h0m0-2h0m0-40h0m0 46h0m0-16h0m0 18h0m0 5h0m0-6h0m0 4h0m1 21h0m0-23h0m0 6h0m0-35h0m0 14h0m0-5h0m0 21h0m0-24h0m0-3h0m1 16h0m0 4h0m0 9h0m0 13h0m0-4h0m0-14h0m1 1h0m0-24h0m0 36h0m0-24h0m0 5h0m0 4h0m0-11h0m0 9h0m0 14h0m0 6h0m0 7h0m0-13h0m1-16h0m0 11h0m0-17h0m0-15h0m0 33h0m0-12h0m0-6h0m0 35h0m0-22h0m0 14h0m0-14h0m0 2h0m0-1h0m0 16h0m0-39h0m1 18h0m0-4h0m0 12h0m0-11h0m0-22h0m0 22h0m0-3h0m0 5h0m0 16h0m1-9h0m0-18h0m0 6h0m0-18h0m0 22h0m0 13h0m0-9h0m0 17h0m0-28h0m0 13h0m0 7h0m0-4h0m0-19h0m0 4h0m1-18h0m0 22h0m0-7h0m0 7h0m0-22h0m0 21h0m0 2h0m0-5h0m0 17h0m0 2h0m0-35h0m0 23h0m0 15h0m0-1h0m1-17h0m0-26h0m0 49h0m0-3h0m0-7h0m0-13h0m0 8h0m0-8h0m0 14h0m1-11h0m0 2h0m0-10h0m0-19h0m0-25h0m0 51h0m0-4h0m0-37h0m0 54h0m0-70h0m0 73h0m0-6h0m0-6h0m1-31h0m0 34h0m0-2h0m0-2h0m0 13h0m0-11h0m0 12h0m0-16h0m0 16h0m0-63h0m0 89h0m1-27h0m0-9h0m0 26h0m0-15h0m0-4h0m0-9h0m0 22h0m0-15h0m1-5h0m0-61h0m0 67h0m0 17h0m0-3h0m0-24h0m0-42h0m0 32h0m0 44h0m0-19h0m0 32h0m0-29h0m0 2h0m0-7h0m0 1h0m0 3h0m0-3h0m0 21h0m1-25h0m0-28h0m0 47h0m0-29h0m0 8h0m0-5h0m0-13h0m1 28h0m0-9h0m0 15h0m1 14h0m0-49h0m0-4h0m0 66h0m0-46h0m1 3h0m0 21h0m0 30h0m0-23h0m0-37h0m0 46h0m0-34h0m0-41h0m0 59h0m0-42h0m0 34h0m1-23h0m0 21h0m0-21h0m0 24h0m0-11h0m0 3h0m0 16h0m0 37h0m1-88h0m0 15h0m0 18h0m0-25h0m0 58h0m0-62h0m0-33h0m0 94h0m0-56h0m1-38h0m0 45h0m0 68h0m0-85h0m0 28h0m0 8h0m0-37h0m0-22h0m1 39h0m0 7h0m0 12h0m0-7h0m0-41h0m0-14h0m0 38h0m1-7h0m0-9h0m0 50h0m0-3h0m0-22h0m0-10h0m0 12h0m0 19h0m0-9h0m1-9h0m0 21h0m0 10h0m0-26h0m0 4h0m0-27h0m0 24h0m0-32h0m0 43h0m1-29h0m0 8h0m0-14h0m0 54h0m0-19h0m1-4h0m0-30h0m0 14h0m0 12h0m0-4h0m0 2h0m1 17h0m0 3h0m0-29h0m0-5h0m0-11h0m0 24h0m0 8h0m0-35h0m1 16h0m0 3h0m0-5h0m0 41h0m0-9h0m0-27h0m0 8h0m1-12h0m0 4h0m0 32h0m0-30h0m0 1h0m0 3h0m0-14h0m1-2h0m0-4h0m0 34h0m0-21h0m0 2h0m0 18h0m0-22h0m0 7h0m1-4h0m0 14h0m0-7h0m0-15h0m0 33h0m0 3h0m0-12h0m0-7h0m1 2h0m0-13h0m0 10h0m0 18h0m0-9h0m0-21h0m0 13h0m0 20h0m0-11h0m0-6h0m0 12h0m0-21h0m0 14h0m0-9h0m1-10h0m0 21h0m0-24h0m0 16h0m0 14h0m0-30h0m1 33h0m0 2h0m0-8h0m0-15h0m0 4h0m0-13h0m0 16h0m0 17h0m0-40h0m0 43h0m1-39h0m0 3h0m0 5h0m0 5h0m0 4h0m0 21h0m0-16h0m0 10h0m0-60h0m0 49h0m0-31h0m0 8h0m1 52h0m0-38h0m0 11h0m0 3h0m0-3h0m0-30h0m0 55h0m0-20h0m0-22h0m0 6h0m1 44h0m0-42h0m0-1h0m0-2h0m0-11h0m0-15h0m0 33h0m0-4h0m0 5h0m0 10h0m0-22h0m0 23h0m0-22h0m1 19h0m0-5h0m0-23h0m0 28h0m0-8h0m0-6h0m0-2h0m0 1h0m0-12h0m0-7h0m1 18h0m0 14h0m0-16h0m0 15h0m0-35h0m0 50h0m0-23h0m0-8h0m0 5h0m0 5h0m0-5h0m1 5h0m0 25h0m0-21h0m0-12h0m0-14h0m0 30h0m0-13h0m0 26h0m0-57h0m0 53h0m0-12h0m1-21h0m0 26h0m0 25h0m0-23h0m0-25h0m0-26h0m0 28h0m0 9h0m0 13h0m0 4h0m0 2h0m0-11h0m0-7h0m0-8h0m0 19h0m0-19h0m1 11h0m0-10h0m0 18h0m0-17h0m0-3h0m0 2h0m0 18h0m1-17h0m0 28h0m0-35h0m0 20h0m0-9h0m0-13h0m0 17h0m0 8h0m0 3h0m0-9h0m0-34h0m0 23h0m0 3h0m0 37h0m1-47h0m0 18h0m0 36h0m0-51h0m0 43h0m0-3h0m0-9h0m0-6h0m1-78h0m0 69h0m0-2h0m0 22h0m0-1h0m0-36h0m1-17h0m0 23h0m0 41h0m0-28h0m0-3h0m0 12h0m0-14h0m0 9h0m0-18h0m0 1h0m0 19h0m0-4h0m0 7h0m1-9h0m0 13h0m0-8h0m0-57h0m0 56h0m0 11h0m0-15h0m0-19h0m0 4h0m0 9h0m1 19h0m0-25h0m0 4h0m0 24h0m0-68h0m0-15h0m0 12h0m0 24h0m0-11h0m0 16h0m0-35h0m0 9h0m0-3h0m0 32h0m1 14h0m0 5h0m0-42h0m0-15h0m0 45h0m0-19h0m0-20h0m0 83h0m0-76h0m0 31h0m0 33h0m0-11h0m0-54h0m0-11h0m1 61h0m0-37h0m0 32h0m0-3h0m0-1h0m0-27h0m0 5h0m0 20h0m0 10h0m0 6h0m0-14h0m0-30h0m0 20h0m0-2h0m0-3h0m0-8h0m1 29h0m0-22h0m0 12h0m0 7h0m0-22h0m0 1h0m0 30h0m0-32h0m1-14h0m0 41h0m0-56h0m0 64h0m0-18h0m0-1h0m0-6h0m0 6h0m1-52h0m0 35h0m0-15h0m0-13h0m0 11h0m0 15h0m1 9h0m0-19h0m0-2h0m0 43h0m0-11h0m0-32h0m0 1h0m0 17h0m1 12h0m0-25h0m0 16h0m0 10h0m0-45h0m0 30h0m0 29h0m0-50h0m0 68h0m0-36h0m1-20h0m0-4h0m0 1h0m0 11h0m0-19h0m0 30h0m0-2h0m0-16h0m1-28h0m0 22h0m0 24h0m0 14h0m0-41h0m0 45h0m0-30h0m0 1h0m0 3h0m0 45h0m0-66h0m0 12h0m0 2h0m1 12h0m0-15h0m0 20h0m0-22h0m0 7h0m0 30h0m0-22h0m0-2h0m0 13h0m1-14h0m0 13h0m0-17h0m0-10h0m0 25h0m0 19h0m0-10h0m0 1h0m0-21h0m0 44h0m0-25h0m0-7h0m0-5h0m0-1h0m0-35h0m0 62h0m0-26h0m1-7h0m0 30h0m0-25h0m0-5h0m0 22h0m0 9h0m1-16h0m0-23h0m0 18h0m0-10h0m0-7h0m0 22h0m0 7h0m0-45h0m0 28h0m0-7h0m1 19h0m0-15h0m0-11h0m0 43h0m0-26h0m0-9h0m0 15h0m1-16h0m0-8h0m0-1h0m0 18h0m0 6h0m0-19h0m0 18h0m1 11h0m0 10h0m0-6h0m0-18h0m0 13h0m0-30h0m0 21h0m0-20h0m1 54h0m0-19h0m0-19h0m0-2h0m0 14h0m0-14h0m0 2h0m0-11h0m0 23h0m0 2h0m0-27h0m1 27h0m0-14h0m0 18h0m0 2h0m0-25h0m0 19h0m0 9h0m1-39h0m0 20h0m0-17h0m0-10h0m0 43h0m0-22h0m0 18h0m0 26h0m1-50h0m0-4h0m0-2h0m0 32h0m0-24h0m0 39h0m0-22h0m0 12h0m0-12h0m0 30h0m1-12h0m0-8h0m0-7h0m0-1h0m0 1h0m0 12h0m0-22h0m0-24h0m0 48h0m0-41h0m0 19h0m0-28h0m0 23h0m1 10h0m0 23h0m0-45h0m0-1h0m0 36h0m0-41h0m0 33h0m0 19h0m0-33h0m0 2h0m0 6h0m0 22h0m0-1h0m1-20h0m0-38h0m0-6h0m0 30h0m0-8h0m0 14h0m0-9h0m0 59h0m0-50h0m1 18h0m0-28h0m0-9h0m0 4h0m0 18h0m0 5h0m0-20h0m0 34h0m0-19h0m0 45h0m1 7h0m0-76h0m0 9h0m0 16h0m0-13h0m0-1h0m0 9h0m0 10h0m0 18h0m1 0h0m0-33h0m0 24h0m0-5h0m0-37h0m0 39h0m0-48h0m0 37h0m0-5h0m0 5h0m0-57h0m0 51h0m0-22h0m0 12h0m1 10h0m0 28h0m0-12h0m0-25h0m0 38h0m0-32h0m1 4h0m0 29h0m0 3h0m0-35h0m0 13h0m0-15h0m0 20h0m0-22h0m0 25h0m0-44h0m0 30h0m1-26h0m0 22h0m0-29h0m0 30h0m0-21h0m0 9h0m0 9h0m0 29h0m0-33h0m1-15h0m0 48h0m0-35h0m0-5h0m0 6h0m0-1h0m0 26h0m0-53h0m1 19h0m0 26h0m0-10h0m0-3h0m0-26h0m0 42h0m0-22h0m0 30h0m0-55h0m0 39h0m0 4h0m1 36h0m0-42h0m0-11h0m0 14h0m0-9h0m0 7h0m0-30h0m0 29h0m0 3h0m0 2h0m0-3h0m0 28h0m1 4h0m0-12h0m0-14h0m0 20h0m0-18h0m0-8h0m0-2h0m0 7h0m0 1h0m1 20h0m0-1h0m0-13h0m0-14h0m0 13h0m0 20h0m0-33h0m0 25h0m0-38h0m0 3h0m0 2h0m0 9h0m0 7h0m0-9h0m0 24h0m0-19h0m0-2h0m1 3h0m0-21h0m0 34h0m0 3h0m0 4h0m0-7h0m0-33h0m1 21h0m0-11h0m0 7h0m0 7h0m0 14h0m0 5h0m1-26h0m0 19h0m0 1h0m0-33h0m0 29h0m0-5h0m0-23h0m0 25h0m0 8h0m0 1h0m0-18h0m0 16h0m0 4h0m0-26h0m0-7h0m0 31h0m1-21h0m0 24h0m0 2h0m0 2h0m0-57h0m0 54h0m0-45h0m0 33h0m0-24h0m0 19h0m0 10h0m0-2h0m0-17h0m1-28h0m0 23h0m0 8h0m0 11h0m0-23h0m0 19h0m0-20h0m0 3h0m0 12h0m0 5h0m1 2h0m0-20h0m0 16h0m0-21h0m0 40h0m0-19h0m0-7h0m0-8h0m1 9h0m0-11h0m0-27h0m0 68h0m0-43h0m0 2h0m0-46h0m0 67h0m0-23h0m0 6h0m0-46h0m0 40h0m0 18h0m0-51h0m0 32h0m0 7h0m0 5h0m0-4h0m0-34h0m1 45h0m0-4h0m0-1h0m0-9h0m0-38h0m0 41h0m0 20h0m0-26h0m0-3h0m0 34h0m1-8h0m0-58h0m0 6h0m0 23h0m0 15h0m0 15h0m0-16h0m0 30h0m0-45h0m0 20h0m0-35h0m1-24h0m0 10h0m0 70h0m0-34h0m0 16h0m0 16h0m0-21h0m0-46h0m0 72h0m0-37h0m0 41h0m1 5h0m0-42h0m0 63h0m0-65h0m0-34h0m0 32h0m1-3h0m0 25h0m0 2h0m0-27h0m0-1h0m0-38h0m0 70h0m0-12h0m0-2h0m1-5h0m0-2h0m0-17h0m0 4h0m0 17h0m0 34h0m0-53h0m0-48h0m0 26h0m1 94h0m0-42h0m0-4h0m0-24h0m0 8h0m0-6h0m0 51h0m0-25h0m0 4h0m0 12h0m1-29h0m0-9h0m0 39h0m0-62h0m0 30h0m0-49h0m0 29h0m0 35h0m0 21h0m0-73h0m0 52h0m0-42h0m0 24h0m0-8h0m0 58h0m1-76h0m0 21h0m0-20h0m0 48h0m0-14h0m0-58h0m0 50h0m0-36h0m0 76h0m0-20h0m0-35h0m0 3h0m0-28h0m0 24h0m0 53h0m0-76h0m0 28h0m0 30h0m0 32h0m0-23h0m0-21h0m1 36h0m0-51h0m0 73h0m0-30h0m0-9h0m0 5h0m1-19h0m0-4h0m0-51h0m0 36h0m0 10h0m0-28h0m0-23h0m0 56h0m0-29h0m1 8h0m0 62h0m0-21h0m0-26h0m0-11h0m0 15h0m0 15h0m0-13h0m0 10h0m1-40h0m0 34h0m0-28h0m0 6h0m0 27h0m0-13h0m0-9h0m1-32h0m0 23h0m0 27h0m0 7h0m0 4h0m0 7h0m0-22h0m0-10h0m0-17h0m0 3h0m1 24h0m0-21h0m0 10h0m0-22h0m0 20h0m0-8h0m0-2h0m0 51h0m0-53h0m0 52h0m1-65h0m0-11h0m0-2h0m0 39h0m0 39h0m0-30h0m0 19h0m0-25h0m1 23h0m0-25h0m0-14h0m0 36h0m0-16h0m0 5h0m0-9h0m0-17h0m0 18h0m0-3h0m0-5h0m0 30h0m1-18h0m0 2h0m0-16h0m0 12h0m0-31h0m0 20h0m0 9h0m0 35h0m0-38h0m0-26h0m0 60h0m0-30h0m0-7h0m0-55h0m1 52h0m0 40h0m0-33h0m0-7h0m0 14h0m0-12h0m0-15h0m1 15h0m0-12h0m0 50h0m0-11h0m0-44h0m0 10h0m0 16h0m0-31h0m0 56h0m0-25h0m0-8h0m0 4h0m0-38h0m1 55h0m0-19h0m0-4h0m0 7h0m0 14h0m0-45h0m0 64h0m1-58h0m0 20h0m0-18h0m0 52h0m0-30h0m0 11h0m0 10h0m0-18h0m1 33h0m0-39h0m0-21h0m0 34h0m0-12h0m0-2h0m0 7h0m0 11h0m0 8h0m0 2h0m0-16h0m1 43h0m0-45h0m0 48h0m0-52h0m0-30h0m0 60h0m0-33h0m0-3h0m1 3h0m0 50h0m0-34h0m0-38h0m0 10h0m0 25h0m0-18h0m0 14h0m0 6h0m0-48h0m0 90h0m0-72h0m0 35h0m0-50h0m0 43h0m0-24h0m1 20h0m0-19h0m0-3h0m0 3h0m0-8h0m0-5h0m0 5h0m0 7h0m0 11h0m0-11h0m0 1h0m1 48h0m0-31h0m0-8h0m0 2h0m0-25h0m0 13h0m0 23h0m0-7h0m0 22h0m0 12h0m0-5h0m0-24h0m0-22h0m0 5h0m0 1h0m0 11h0m0-11h0m1-14h0m0 19h0m0-3h0m0 29h0m0 22h0m0-67h0m1-2h0m0 40h0m0-2h0m0-50h0m0 44h0m0 1h0m0-24h0m0 31h0m0-21h0m0 13h0m0 18h0m0-37h0m1 30h0m0-1h0m0 13h0m0-39h0m0 19h0m0-28h0m0 21h0m1 22h0m0 8h0m0 2h0m0-45h0m0-8h0m0 27h0m0-14h0m0 15h0m0-6h0m0 23h0m1-42h0m0 15h0m0 15h0m0 10h0m0-35h0m0-3h0m0 9h0m0-15h0m1 10h0m0 30h0m0-25h0m0-10h0m0 41h0m0-24h0m0-11h0m0 10h0m0 11h0m0-2h0m1-13h0m0 18h0m0 5h0m0-13h0m0-28h0m0 32h0m0-15h0m0 15h0m0-18h0m0-1h0m1 2h0m0 25h0m0-26h0m0 9h0m0-2h0m0-14h0m0 6h0m1-5h0m0 22h0m0-27h0m0 14h0m0 4h0m0 8h0m0-6h0m1-14h0m0 40h0m0-12h0m0-63h0m0-1h0m0 53h0m0-22h0m0 10h0m0-7h0m0-1h0m0 4h0m0-8h0m0 2h0m0 9h0m0 37h0m0-54h0m1 19h0m0 24h0m0-23h0m0-28h0m0-23h0m0 47h0m0-36h0m0-16h0m0 88h0m0-18h0m0-3h0m0-7h0m1 25h0m0-87h0m0 60h0m0-53h0m0 30h0m0 31h0m0-63h0m0 26h0m0 42h0m0-9h0m1 5h0m0-2h0m0-2h0m0 23h0m0-8h0m0-19h0m0 2h0m0-56h0m0 47h0m0-9h0m0-1h0m0-28h0m1 1h0m0 25h0m0 11h0m0-26h0m0 37h0m0-7h0m0-27h0m0 3h0m0 13h0m0-44h0m0 86h0m0-40h0m1 12h0m0-4h0m0-10h0m0 15h0m0-36h0m0 13h0m0-6h0m0 24h0m0 24h0m1-34h0m0-9h0m0 1h0m0 14h0m0-2h0m0 7h0m0-13h0m0-1h0m0 25h0m0 2h0m0-8h0m1-20h0m0 30h0m0 28h0m0-57h0m0 23h0m0-13h0m0 8h0m0-2h0m1 6h0m0-17h0m0 11h0m0-10h0m0 12h0m0 11h0m0-24h0m0 8h0m0 41h0m0-36h0m0-1h0m0 1h0m0-33h0m0 26h0m1-6h0m0 1h0m0 21h0m0-2h0m0-10h0m0 20h0m0-2h0m0-14h0m0 10h0m0 12h0m0-40h0m0-2h0m0 3h0m0 8h0m0 4h0m1 19h0m0-26h0m0 37h0m0-8h0m0-19h0m0-11h0m1 29h0m0-12h0m0-9h0m0 16h0m0-8h0m0-15h0m0 17h0m0-4h0m0-5h0m0 9h0m1-17h0m0 28h0m0 2h0m0-8h0m0-10h0m0-4h0m0 16h0m0-21h0m0-3h0m0 27h0m1-28h0m0 34h0m0-7h0m0-19h0m0-4h0m0 40h0m0-30h0m0-6h0m0-2h0m0-6h0m0 47h0m0-23h0m0-8h0m0-9h0m0 57h0m1-35h0m0-44h0m0 21h0m0-3h0m0 42h0m0-47h0m0 48h0m0-11h0m0-1h0m1-32h0m0 32h0m0-12h0m0-8h0m0 23h0m0-16h0m0-10h0m0-15h0m0 37h0m1-19h0m0 24h0m0-24h0m0 20h0m0-14h0m0 9h0m0-44h0m0 32h0m0-4h0m1-15h0m0-12h0m0 42h0m0-12h0m0 3h0m0 15h0m0-28h0m1 35h0m0-55h0m0-2h0m0 34h0m0 32h0m0-25h0m0 5h0m0-32h0m0 26h0m0-69h0m0 47h0m1 21h0m0-14h0m0-4h0m0-12h0m0 9h0m0-32h0m0 33h0m0 32h0m1-20h0m0-22h0m0 54h0m0-37h0m0-7h0m0-5h0m1 12h0m0-7h0m0 14h0m0 13h0m0 21h0m0-53h0m0 38h0m0-29h0m0 15h0m0-14h0m0 31h0m0-39h0m0 3h0m0-3h0m0 9h0m1 37h0m0-4h0m0-21h0m0-7h0m0-45h0m0 30h0m0 11h0m0-41h0m0 27h0m0 22h0m0 19h0m0-28h0m0 37h0m1-33h0m0 20h0m0-1h0m0 19h0m0-84h0m0 51h0m0-15h0m0-40h0m0 24h0m0 19h0m1 20h0m0-25h0m0-19h0m0 28h0m0 38h0m0-55h0m0 37h0m0 15h0m0-33h0m0-13h0m0-4h0m0 51h0m1-52h0m0 20h0m0 7h0m0-19h0m0 10h0m0 38h0m0-21h0m0-2h0m0 4h0m0-26h0m0 17h0m0 24h0m0-76h0m0 43h0m1 50h0m0-60h0m0-14h0m0 20h0m1-10h0m0 2h0m0-8h0m0 12h0m0 25h0m0-1h0m1 3h0m0-36h0m0 10h0m0 65h0m0-74h0m0 40h0m0-48h0m0 38h0m0 4h0m1 7h0m0-17h0m0-8h0m0-16h0m0-19h0m0 57h0m0 1h0m0-23h0m1-3h0m0 27h0m0 14h0m0-31h0m0-63h0m0 55h0m0 31h0m0-7h0m0-67h0m0-7h0m0 66h0m0-12h0m0 6h0m0-6h0m0-57h0m0 12h0m0 59h0m0-66h0m1 61h0m0 4h0m0-76h0m0 24h0m0 40h0m0-49h0m0 72h0m0 18h0m0-39h0m0 19h0m0-13h0m0-12h0m0-29h0m1-12h0m0-19h0m0 59h0m0-3h0m0-50h0m0 74h0m0-57h0m0 42h0m0-54h0m0 53h0m0-38h0m0 17h0m1 33h0m0-1h0m0 5h0m0-33h0m0-34h0m0 66h0m0-82h0m0 21h0m0 49h0m0-4h0m0 11h0m1-32h0m0 20h0m0 11h0m0-35h0m0-15h0m0 35h0m0 11h0m0 15h0m0-28h0m0 1h0m1 5h0m0 22h0m0-27h0m0 9h0m0-10h0m0 9h0m0 26h0m0-17h0m0-1h0m0-17h0m0-3h0m0-35h0m0 66h0m1-32h0m0 7h0m0-3h0m0 2h0m0 20h0m0-33h0m0-6h0m1 52h0m0-50h0m0 29h0m0-34h0m0 10h0m0 53h0m0-8h0m0-37h0m0 1h0m1 12h0m0 23h0m0-5h0m0-17h0m0-24h0m0-9h0m0 27h0m0 14h0m0 5h0m0 13h0m0-31h0m1-1h0m0 26h0m0-39h0m0 32h0m0-34h0m0-36h0m0 60h0m0-9h0m0 21h0m0-17h0m0 22h0m0-33h0m0 44h0m1-39h0m0 11h0m0-18h0m0 6h0m0-8h0m0-27h0m0 42h0m0-17h0m0-11h0m0 48h0m0-28h0m0 11h0m0 27h0m0 3h0m1-47h0m0 12h0m0-2h0m0-14h0m0 20h0m0-17h0m0-3h0m0 13h0m0 6h0m0 7h0m0-15h0m0 22h0m0-77h0m0 49h0m1 22h0m0 1h0m0-29h0m0 34h0m0-6h0m0-21h0m0 8h0m0-1h0m0 9h0m0-19h0m1 2h0m0-20h0m0 32h0m0 8h0m0 3h0m0-62h0m0 11h0m0 33h0m0 12h0m0 18h0m0-85h0m0 72h0m0-12h0m0-2h0m0-5h0m0 11h0m0-11h0m0-37h0m1-7h0m0 66h0m0-18h0m0 13h0m0-59h0m1-14h0m0 53h0m0 29h0m0-19h0m0 24h0m0-38h0m0 43h0m0-23h0m0-48h0m0 57h0m0-53h0m0 28h0m0 4h0m0-3h0m0-23h0m1-29h0m0 66h0m0-10h0m0 9h0m0-22h0m0 55h0m0-56h0m0 25h0m0 17h0m0-23h0m0-27h0m0 34h0m0-24h0m1 50h0m0-51h0m0 34h0m0-18h0m0 3h0m0 3h0m0-4h0m0 1h0m0-11h0m0-4h0m0-14h0m1 35h0m0-4h0m0 11h0m0-3h0m0-1h0m0-34h0m0-2h0m0 37h0m0-40h0m0 47h0m0-2h0m0-23h0m1 11h0m0 12h0m0 24h0m1-40h0m0 15h0m0-46h0m0 38h0m0 2h0m0 16h0m0-17h0m0-30h0m0 42h0m0-34h0m0-22h0m0 39h0m1-2h0m0 3h0m0 5h0m0 14h0m0-11h0m1-34h0m0 27h0m0-65h0m0 64h0m0-36h0m0 30h0m0-3h0m0-36h0m0 26h0m0-20h0m0 30h0m0-10h0m0 7h0m0 15h0m0-46h0m0 37h0m1-17h0m0 2h0m0-24h0m0 28h0m0 16h0m0-21h0m0 12h0m0-2h0m0 15h0m0 5h0m1-7h0m0-50h0m0 59h0m0-39h0m0 38h0m0-5h0m0-11h0m0 16h0m0-29h0m0-1h0m1-3h0m0 21h0m0-22h0m0 29h0m0-29h0m0 58h0m0-15h0m0-19h0m0-17h0m0 19h0m0 3h0m0-13h0m0-22h0m0 38h0m0-20h0m1-39h0m0 35h0m0 11h0m0-28h0m0 22h0m0-11h0m0 21h0m1-4h0m0-11h0m0 21h0m0-6h0m0-7h0m0 3h0m0 3h0m0-12h0m0-4h0m0 11h0m0-20h0m0 8h0m0 22h0m1 1h0m0-12h0m0 12h0m0-11h0m0-7h0m0 19h0m0-9h0m0 1h0m1-2h0m0-12h0m0 23h0m0 7h0m0-17h0m0 11h0m0-18h0m0 5h0m0 3h0m0 2h0m0 28h0m0-38h0m0 26h0m0-10h0m0-2h0m0 31h0m1-35h0m0-23h0m0 10h0m0 27h0m0-62h0m0 61h0m0-25h0m0-12h0m0 50h0m0-43h0m0 44h0m0-48h0m1 19h0m0 23h0m0 2h0m0 1h0m0 23h0m1-72h0m0-1h0m0 18h0m0-18h0m0 12h0m0-8h0m0 34h0m0-32h0m0 7h0m0 53h0m0-10h0m1-49h0m0 11h0m0 15h0m0-11h0m0 3h0m0 8h0m0 51h0m1-22h0m0-61h0m0 17h0m0-44h0m0 45h0m0-37h0m0 8h0m0 60h0m0-29h0m0-21h0m0 26h0m0 36h0m1-50h0m0-16h0m0 7h0m0-23h0m0 59h0m0 12h0m0-24h0m0-39h0m1-19h0m0 41h0m0 7h0m0-23h0m0 24h0m0 44h0m0-49h0m1 12h0m0-32h0m0 24h0m0 57h0m0-25h0m0-19h0m0-31h0m0 20h0m1-2h0m0 8h0m0-34h0m0 13h0m0 11h0m0 15h0m0 16h0m0-79h0m0 57h0m1 29h0m0-29h0m0 11h0m0 10h0m0-76h0m0 16h0m0 44h0m0-10h0m0 17h0m0-16h0m0-4h0m0-17h0m0-27h0m0 59h0m1-24h0m0 22h0m0 24h0m0-42h0m0 13h0m0 7h0m0-16h0m0-15h0m0-42h0m1 26h0m0 71h0m0 12h0m0-38h0m0 5h0m0-57h0m0 62h0m0-21h0m0 24h0m0-23h0m0-46h0m0 57h0m0-13h0m0 13h0m0 33h0m0-42h0m0-10h0m1 35h0m0-24h0m0-36h0m0 27h0m0 37h0m0-58h0m0 41h0m0-24h0m0 18h0m0-71h0m0 87h0m0-46h0m0-9h0m0 31h0m1-41h0m0 36h0m0-8h0m0 9h0m0-16h0m0 64h0m0-80h0m0 10h0m0 44h0m0-15h0m0 59h0m0-70h0m1 22h0m0-19h0m0 11h0m0-38h0m0 46h0m0-51h0m0 51h0m0 5h0m0-13h0m0-11h0m0 38h0m0-63h0m0 27h0m1 9h0m0-53h0m0 61h0m0 6h0m1 3h0m0-1h0m0-36h0m0 4h0m0 31h0m0-24h0m0 8h0m1 38h0m0-51h0m0-12h0m0 19h0m0 9h0m0 4h0m0-5h0m1 15h0m0-4h0m0 5h0m0-37h0m0 35h0m0-22h0m0 17h0m0-21h0m0 39h0m0-40h0m1 29h0m0-37h0m0 35h0m0-6h0m0 22h0m0-24h0m0 9h0m0-19h0m0 15h0m1-2h0m0-4h0m0-2h0m0 6h0m0-17h0m0 14h0m0 16h0m0-5h0m0-5h0m0-31h0m0-14h0m1 16h0m0 10h0m0 5h0m0 10h0m0-16h0m0-1h0m0 5h0m0-3h0m1-18h0m0 24h0m0-15h0m0 12h0m0 12h0m0-6h0m0-16h0m0 4h0m0-7h0m0 23h0m1-6h0m0-7h0m0 6h0m0 7h0m0-41h0m0 34h0m0 13h0m0-23h0m0 19h0m0-8h0m0-18h0m0-16h0m1 26h0m0-14h0m0 25h0m0-19h0m0 9h0m0-44h0m0 44h0m0-32h0m0 61h0m0-17h0m0-7h0m0 22h0m0-33h0m0-32h0m1 53h0m0-47h0m0-8h0m0 51h0m0-2h0m0 9h0m0-23h0m0 36h0m0-17h0m0-70h0m0 13h0m0 58h0m0-2h0m0-2h0m0 41h0m0-112h0m0 68h0m1-55h0m0 42h0m0 7h0m0-34h0m0-11h0m0 60h0m0-15h0m0 6h0m0-9h0m0 21h0m0 22h0m0-73h0m1 28h0m0 30h0m0-5h0m0 40h0m0-46h0m0 12h0m0 6h0m0-28h0m0-34h0m0 49h0m1-17h0m0 34h0m0-33h0m0 13h0m0-45h0m0 17h0m0 28h0m0 22h0m0-17h0m0 2h0m0-2h0m0-41h0m1 52h0m0-60h0m0 47h0m0 5h0m0-19h0m0 6h0m0 5h0m0 7h0m0-12h0m0 10h0m0 5h0m0-27h0m1-6h0m0 48h0m0-7h0m0-44h0m0 50h0m0-50h0m0 16h0m0-7h0m0-25h0m0 45h0m0 31h0m0-51h0m0 34h0m0-21h0m1-5h0m0-41h0m0 57h0m0-27h0m0-11h0m0 12h0m0-15h0m0 5h0m0 6h0m0 20h0m0-49h0m0 34h0m0-6h0m1-1h0m0 14h0m0-12h0m0-24h0m0 42h0m0 13h0m0-42h0m0-7h0m1 58h0m0-49h0m0 7h0m0 21h0m0-14h0m0-20h0m0 24h0m0 15h0m0-10h0m0 49h0m1-62h0m0-2h0m0 18h0m0-26h0m0 40h0m0-25h0m0-5h0m0 34h0m0 6h0m0-47h0m0 22h0m0-14h0m1-34h0m0 40h0m0 8h0m0-18h0m0 26h0m0-31h0m0 13h0m0-8h0m0 27h0m0-33h0m0 52h0m1-87h0m0 53h0m0-2h0m0 5h0m0-1h0m0-26h0m0-1h0m0 17h0m0 5h0m0-16h0m0 18h0m0 16h0m0-19h0m0 8h0m1-19h0m0 42h0m0-32h0m0 2h0m0-3h0m0-3h0m0 4h0m0-7h0m0-6h0m0-18h0m0 40h0m0-24h0m1 1h0m0 10h0m0-8h0m0 37h0m0-9h0m0-18h0m0-1h0m0 16h0m1-4h0m0-29h0m0 28h0m0-22h0m0 40h0m0-46h0m0 9h0m0 2h0m0 6h0m0-3h0m0 19h0m0-13h0m0 3h0m0 2h0m0-19h0m1 30h0m0-27h0m0 20h0m0-19h0m0 24h0m0-5h0m0-2h0m0-2h0m0 1h0m0 5h0m1 7h0m0-38h0m0 47h0m0-19h0m0 2h0m0-12h0m0 14h0m0-18h0m0-4h0m1 25h0m0-7h0m0-8h0m0 29h0m0-20h0m0 3h0m0-6h0m0 2h0m0-11h0m0 29h0m0-38h0m1 11h0m0-16h0m0 20h0m0 8h0m0-2h0m0 9h0m0-18h0m0 16h0m1-18h0m0-1h0m0 11h0m0 17h0m0-45h0m0 16h0m1 20h0m0-69h0m0 79h0m0 3h0m0-56h0m0 36h0m0-14h0m0-11h0m0 16h0m0 34h0m0-41h0m1 11h0m0-29h0m0-12h0m0 3h0m0 17h0m0 20h0m0-5h0m0-4h0m0-10h0m1 22h0m0 23h0m0 6h0m0 19h0m0-66h0m0 51h0m0-18h0m1-27h0m0 1h0m0 7h0m0-28h0m0 48h0m0-22h0m0-22h0m0 16h0m0 43h0m0-53h0m0 12h0m0-31h0m1 48h0m0-46h0m0 73h0m0-75h0m0 17h0m0 38h0m0 7h0m0-83h0m0 35h0m1 38h0m0-68h0m0 34h0m0 44h0m0-87h0m0 5h0m0 18h0m0 16h0m0 53h0m0-74h0m0 56h0m0-1h0m1 5h0m0-5h0m0 27h0m0-39h0m0 21h0m0-4h0m0-63h0m0 8h0m0 20h0m0 33h0m0-13h0m0-10h0m0-6h0m0 14h0m0-43h0m0 63h0m0-54h0m0 74h0m0-95h0m0 66h0m1-22h0m0 11h0m0 4h0m0-22h0m0 3h0m0 50h0m0-12h0m0-75h0m0 82h0m0-16h0m0-22h0m0-19h0m1 37h0m0-12h0m0 41h0m0-38h0m0-8h0m0 3h0m0 5h0m0 1h0m0-2h0m0-47h0m0 52h0m1 19h0m0-22h0m0-16h0m0-22h0m0-10h0m0 24h0m0 55h0m0-51h0m0 26h0m0 28h0m0-44h0m0 2h0m0 25h0m0-29h0m1-20h0m0 12h0m0 17h0m0-50h0m0 18h0m0 49h0m0-20h0m0 5h0m0-7h0m0-5h0m0 9h0m1-19h0m0 29h0m0-8h0m0 14h0m0-19h0m0 55h0m0-47h0m0-27h0m0 46h0m0-34h0m0 43h0m0 12h0m0-42h0m0 18h0m1-7h0m0 6h0m0-1h0m0-28h0m0-5h0m0-14h0m0 41h0m0 12h0m0-55h0m0 35h0m0 16h0m0-8h0m1-16h0m0 24h0m0-58h0m0 75h0m0-19h0m0-17h0m0-11h0m0 33h0m0 12h0m1-38h0m0-35h0m0 71h0m0-58h0m0 26h0m0-10h0m0 13h0m0-24h0m0 40h0m0-8h0m0 31h0m0-8h0m0-31h0m1 16h0m0-1h0m0-21h0m0-19h0m0-27h0m0 62h0m0 23h0m0 7h0m0-52h0m1-5h0m0 14h0m0 25h0m0 31h0m0-93h0m0 47h0m0 11h0m0 21h0m0-93h0m0 40h0m0-31h0m0-11h0m0 62h0m0-10h0m0-1h0m0 26h0m0-20h0m1-31h0m0 42h0m0 41h0m0-119h0m0 35h0m0-10h0m0 54h0m1-47h0m0 48h0m0-33h0m0-4h0m0-11h0m0 28h0m0-15h0m0 45h0m0 3h0m1-29h0m0 14h0m0-26h0m0 33h0m0 3h0m0 14h0m0-65h0m0 36h0m0-44h0m0 22h0m0 48h0m0-78h0m1 59h0m0-1h0m0-39h0m0 23h0m0-10h0m0-41h0m0 79h0m0-59h0m0 48h0m1 1h0m0-19h0m0-17h0m0-10h0m0 11h0m0 1h0m0 30h0m0-12h0m0-56h0m0 53h0m0 15h0m0-9h0m0-28h0m0 8h0m1 73h0m0-35h0m0-52h0m0 50h0m0-3h0m0 5h0m0-68h0m1 21h0m0 19h0m0 1h0m0 47h0m0-47h0m0 26h0m1 12h0m0 14h0m0-35h0m0-22h0m0 14h0m0 51h0m0-58h0m0 5h0m0 12h0m0 22h0m0-11h0m1-6h0m0 36h0m0-42h0m0-57h0m0 76h0m0 22h0m0-56h0m1 47h0m0-23h0m0-41h0m0-16h0m0 24h0m0-4h0m0 45h0m0-46h0m0 44h0m0 6h0m0-35h0m1-4h0m0-9h0m0 21h0m0-9h0m0 15h0m0-42h0m0 32h0m0-13h0m1 16h0m0-8h0m0-11h0m0 29h0m0 5h0m0-12h0m0-2h0m0-16h0m0-26h0m0 37h0m0-41h0m0 63h0m0-45h0m0 15h0m0 7h0m1-15h0m0 41h0m0 1h0m0-20h0m0 6h0m0-14h0m0 26h0m0 13h0m0-40h0m0 55h0m0-37h0m0-18h0m0 12h0m0-2h0m0 18h0m0-1h0m0-9h0m1-32h0m0-5h0m0 22h0m0 13h0m0-9h0m0 3h0m0-14h0m0 31h0m0-10h0m0-31h0m0 67h0m0-74h0m0 60h0m0-45h0m1-4h0m0 34h0m0-35h0m0-41h0m0 40h0m0 46h0m0-62h0m0 77h0m0-16h0m0-1h0m0-12h0m0-35h0m0 59h0m1-25h0m0 9h0m0-2h0m0-31h0m1 37h0m0-58h0m0 29h0m0-34h0m0 30h0m1-13h0m0 34h0m0 29h0m1-82h0m0 52h0m0-25h0m0-6h0m0-18h0m1 21h0m0 57h0m0-49h0m1 13h0m0 1h0m0-56h0m0 5h0m0 38h0m0-36h0m1 40h0m0 4h0m0 30h0m0 8h0m0-51h0m0-38h0m0 33h0m0 66h0m1-58h0m0-24h0m0 2h0m0 58h0m0-3h0m0-34h0m0-40h0m0 80h0m0-37h0m0 39h0m0-50h0m0 25h0m0-43h0m0 72h0m0-24h0m0-11h0m0 3h0m0-17h0m1-32h0m0 53h0m0-20h0m0 26h0m0-17h0m0-8h0m0 10h0m0-4h0m0-14h0m1-23h0m0 24h0m0-33h0m0 57h0m0-58h0m0 33h0m0 8h0m1 35h0m0-49h0m0 7h0m0-1h0m0 9h0m0-25h0m0-33h0m0 72h0m0 13h0m0-65h0m0 50h0m0 9h0m0 10h0m1-10h0m0-26h0m0-32h0m0 76h0m0-42h0m0 47h0m0 2h0m0-35h0m0-57h0m0 74h0m1-28h0m0 32h0m0-5h0m0-38h0m0-3h0m0 48h0m0 1h0m0 3h0m0-16h0m0-9h0m0 22h0m0 4h0m0 11h0m1-53h0m0 35h0m0-31h0m0 37h0m0 17h0m0-89h0m0 46h0m0-42h0m0 1h0m0 66h0m0 21h0m0-74h0m1 41h0m0-9h0m0-66h0m0 18h0m0 6h0m0 29h0m0-44h0m0 94h0m0-40h0m0-51h0m0-20h0m0 76h0m0-5h0m1-15h0m0-29h0m0 6h0m0 27h0m0-30h0m0-15h0m0 1h0m0 47h0m0-20h0m0-43h0m0 5h0m0 20h0m0 54h0m1-73h0m0 45h0m0-29h0m0 66h0m0-39h0m0-35h0m0 19h0m0-5h0m0-10h0m0 52h0m0-38h0m0 6h0m0 23h0m0-56h0m1 39h0m0-46h0m0 76h0m0 3h0m0-7h0m0 54h0m0-35h0m0-20h0m0 5h0m0 13h0m0-17h0m1 0h0m0-5h0m0 15h0m0-26h0m0 24h0m0-7h0m0-44h0m0 53h0m0 7h0m0 3h0m1-21h0m0-17h0m0 21h0m0-7h0m0 11h0m0-7h0m0 14h0m0-37h0m0 18h0m1-5h0m0 11h0m0-18h0m0-1h0m0-9h0m0 21h0m1 31h0m0-35h0m0-2h0m0 6h0m0 7h0m0-31h0m0 36h0m0 22h0m0-35h0m0-26h0m0 6h0m1 12h0m0 4h0m0 4h0m0 12h0m0-29h0m0 14h0m0-21h0m0 46h0m0 1h0m0-28h0m0 13h0m1-18h0m0 23h0m0-27h0m0 9h0m0-1h0m0 27h0m0-9h0m0-21h0m0 56h0m0-23h0m0-40h0m0 26h0m1-25h0m0 38h0m0-3h0m0 15h0m0-38h0m0-19h0m1 32h0m0 6h0m0-10h0m0-4h0m0 30h0m0-12h0m1-24h0m0 53h0m0-69h0m0 15h0m0-25h0m0 10h0m0-12h0m0 23h0m0 12h0m0-15h0m0-16h0m0 55h0m1-32h0m0-5h0m0-2h0m0 29h0m0-16h0m0-3h0m0-23h0m0 43h0m0-36h0m1-8h0m0 35h0m0-37h0m0 44h0m0-5h0m0 27h0m0-80h0m0 69h0m0-13h0m1-8h0m0 6h0m0 8h0m0-12h0m0 19h0m0-38h0m0 15h0m0-16h0m0 39h0m0-43h0m0-1h0m0 25h0m0-7h0m1-24h0m0 24h0m0 34h0m0-61h0m0 22h0m0-19h0m1 5h0m0 39h0m0-8h0m0-37h0m0 9h0m0-23h0m0 68h0m0-6h0m0-41h0m0-1h0m0-3h0m0 37h0m1-5h0m0-4h0m0 25h0m0-24h0m0-16h0m1-18h0m0 20h0m0 1h0m0 34h0m0-23h0m1 4h0m0-31h0m0 54h0m0-44h0m0 36h0m0-26h0m0-5h0m0-3h0m0 32h0m0-14h0m0-25h0m0 20h0m0 18h0m0-28h0m1 47h0m0-13h0m0-14h0m0 7h0m0-12h0m0-5h0m0-23h0m0 13h0m1 2h0m0 17h0m0-16h0m0-30h0m0 37h0m0-7h0m0 3h0m0 20h0m0-38h0m0-3h0m0 11h0m0-4h0m0 11h0m0-6h0m0 5h0m1 39h0m0-41h0m0-3h0m0-33h0m0 51h0m0-5h0m0-26h0m0 20h0m0-4h0m0 15h0m0-42h0m1 28h0m0 1h0m0 5h0m0-9h0m0-1h0m0 6h0m0-18h0m0 18h0m0-20h0m0 9h0m0 19h0m0-6h0m0 9h0m0-9h0m0-1h0m0-12h0m0 1h0m0 24h0m1-25h0m0 18h0m0-1h0m0 9h0m0-25h0m0 19h0m0-16h0m1 2h0m0 22h0m0-1h0m0-16h0m0 14h0m0-10h0m0-6h0m0 12h0m0-23h0m0-14h0m0 29h0m0-10h0m1 4h0m0 5h0m0-1h0m0 7h0m0-6h0m0 13h0m0-30h0m0 28h0m0 1h0m0-15h0m1 20h0m0-18h0m0 26h0m0-9h0m0-10h0m0-5h0m0 5h0m0-3h0m1-3h0m0 3h0m0 11h0m0-16h0m0-7h0m0 31h0m0-20h0m0 4h0m0-8h0m0-5h0m0 17h0m0 2h0m0-18h0m0-3h0m0 9h0m0 2h0m0-9h0m0 15h0m0-8h0m0-12h0m1 7h0m0 3h0m0-7h0m0 12h0m0-17h0m0 14h0m1-6h0m0-9h0m0 2h0m0-9h0m0 18h0m0-4h0m0-10h0m0 5h0m0-4h0m0 20h0m0-17h0m1 10h0m0 4h0m0 2h0m0 6h0m0-15h0m0-14h0m0 22h0m0 1h0m0-24h0m0 19h0m0 4h0m0-7h0m1 5h0m0-14h0m0 5h0m0-2h0m0 31h0m0-18h0m0-4h0m0-12h0m0 17h0m0 1h0m0 15h0m0-28h0m1 3h0m0-5h0m0-3h0m0 24h0m0-11h0m0 12h0m0-7h0m0-1h0m0-1h0m0 4h0m1 23h0m0-16h0m0-15h0m0 23h0m0-20h0m0-10h0m0-7h0m0 2h0m0 28h0m0 1h0m0-20h0m0 9h0m0-13h0m0 14h0m0 13h0m0-7h0m1-27h0m0 12h0m0 13h0m0 3h0m0-10h0m0 3h0m0-36h0m0 40h0m0-17h0m0 31h0m1-17h0m0-21h0m0 38h0m0 5h0m0-15h0m0-13h0m0-6h0m0 7h0m0-19h0m0 33h0m1-28h0m0 7h0m0 37h0m0-12h0m0 10h0m0-14h0m0 10h0m0-13h0m0-19h0m1 15h0m0-19h0m0 4h0m0 11h0m0-14h0m0-3h0m0 28h0m0 22h0m0-34h0m0 5h0m0-21h0m0 20h0m0-14h0m0 18h0m0-1h0m0-4h0m0 22h0m0-82h0m0 61h0m0-46h0m0 51h0m1-5h0m0-48h0m0 51h0m0 14h0m0-53h0m0 65h0m0-28h0m0-56h0m0 49h0m0-1h0m0 2h0m0-59h0m0 26h0m0 30h0m1-41h0m0 39h0m0-11h0m0-20h0m0 35h0m0-65h0m0 69h0m0-5h0m0 2h0m0-24h0m0 16h0m0 12h0m0-59h0m0 44h0m0 10h0m0 44h0m0-30h0m0-77h0m1-2h0m0 10h0m0-8h0m0 29h0m0 39h0m0 4h0m0 22h0m0-77h0m1 42h0m0 13h0m0-56h0m0 52h0m0 25h0m0-10h0m0-18h0m0-52h0m0 28h0m0 46h0m0 10h0m0-34h0m1 37h0m0-52h0m0 1h0m0-8h0m0 43h0m0 2h0m0 1h0m0-64h0m0 62h0m0 33h0m1-13h0m0-21h0m0-38h0m0 61h0m0-31h0m0 10h0m0-31h0m0 27h0m0 12h0m1 2h0m0-5h0m0-42h0m0 18h0m0-7h0m1 21h0m0-22h0m0 52h0m0-99h0m0 77h0m0-42h0m0-1h0m0 68h0m1-84h0m0 1h0m0 56h0m0 39h0m0-40h0m0-45h0m0 27h0m0-15h0m1-25h0m0 40h0m0 22h0m0-38h0m0-19h0m0 3h0m0 23h0m0 40h0m0-49h0m0-3h0m1 8h0m0 1h0m0 24h0m0-23h0m0 12h0m0-47h0m0 33h0m0 24h0m0-55h0m0 42h0m1-16h0m0 24h0m0-17h0m0-5h0m0-26h0m0 32h0m0 52h0m0-29h0m0-21h0m1-26h0m0 63h0m0-36h0m0-32h0m0 70h0m0-20h0m0-15h0m0 17h0m0-34h0m0 51h0m1-2h0m0-60h0m0 20h0m0 17h0m0 53h0m0-90h0m0 57h0m0-33h0m0 17h0m0 48h0m0-56h0m0-35h0m1 10h0m0 29h0m0 38h0m0-38h0m0 50h0m0-105h0m0 78h0m0-50h0m0 47h0m0-25h0m1-26h0m0 47h0m0 4h0m0-12h0m1 5h0m0 9h0m0-37h0m0 4h0m0 8h0m0-38h0m0 21h0m0 33h0m1-58h0m0 25h0m0-4h0m0-7h0m0-8h0m0 9h0m0 51h0m0-60h0m0 42h0m0-22h0m0-36h0m1 75h0m0-31h0m0-10h0m0 49h0m0-21h0m0-3h0m0-26h0m0 23h0m0-4h0m1 6h0m0 29h0m0-15h0m0-9h0m0 32h0m0-46h0m0-29h0m0-4h0m0 21h0m0 8h0m0-2h0m1 19h0m0-22h0m0-20h0m0 19h0m0-19h0m1 25h0m0 6h0m0 14h0m0-36h0m0 14h0m0 7h0m1-7h0m0 21h0m0-54h0m0-14h0m1 95h0m0-51h0m0 8h0m0-6h0m0 61h0m0-61h0m0 3h0m0 2h0m0 16h0m0-7h0m1-22h0m0 35h0m0-12h0m0-21h0m0 19h0m0 6h0m0 20h0m0-35h0m0-35h0m0 8h0m1 21h0m0 3h0m0 17h0m0-33h0m0 8h0m0 9h0m0-13h0m0-1h0m0 31h0m0-16h0m1 20h0m0-34h0m0 26h0m0-1h0m0-72h0m0 62h0m0 15h0m0-4h0m0-14h0m0-16h0m0 7h0m1 10h0m0-5h0m0 11h0m0 4h0m0-25h0m0 17h0m0-3h0m0 6h0m0-21h0m0-2h0m0 22h0m1-11h0m0 18h0m0-24h0m0-8h0m0 8h0m0 23h0m0-18h0m0 8h0m0 17h0m1-29h0m0 11h0m0-1h0m0-5h0m0 5h0m0-18h0m0 21h0m1-16h0m0 22h0m0-11h0m0-14h0m0 55h0m0-32h0m0-15h0m0-13h0m0 19h0m0 2h0m0-1h0m0 4h0m1 10h0m0-2h0m0 2h0m0-13h0m0 20h0m0-33h0m0 2h0m0 3h0m0 8h0m0 4h0m1-12h0m0 9h0m0 9h0m0-5h0m0-1h0m0 7h0m0 3h0m0-21h0m0 5h0m0-12h0m0 6h0m1-1h0m0 4h0m0-11h0m0 13h0m0 1h0m0-11h0m0 6h0m0 11h0m0-1h0m1-14h0m0 3h0m0 3h0m0 6h0m0 3h0m0-12h0m0 1h0m0 5h0m0-14h0m0 15h0m1-15h0m0 69h0m0-40h0m0-14h0m0-9h0m0 18h0m0-8h0m0 2h0m0 17h0m1-20h0m0-4h0m0 13h0m0 2h0m0-14h0m0 5h0m0 18h0m0-7h0m0 7h0m0-15h0m0 3h0m0-9h0m1-8h0m0 26h0m0-31h0m0 24h0m0-6h0m0 8h0m0-5h0m0 23h0m1-16h0m0-6h0m0 5h0m0-22h0m0 27h0m0-14h0m0 18h0m0-22h0m0 25h0m0-38h0m0 15h0m0 18h0m1-5h0m0 25h0m0-23h0m0-21h0m0-43h0m0 63h0m1 5h0m0-73h0m0 75h0m0-31h0m0 28h0m0-1h0m0-13h0m0-50h0m0 50h0m0 1h0m0-10h0m0 1h0m0 10h0m0 5h0m0-12h0m0-20h0m1-8h0m0 35h0m0-31h0m0 40h0m0-45h0m0 38h0m0-21h0m0-35h0m0 59h0m0-65h0m0-3h0m1 51h0m0-43h0m0 32h0m0 32h0m0-77h0m0 64h0m0-45h0m0 36h0m0-26h0m0 46h0m0-65h0m0 42h0m1 27h0m0 9h0m0-35h0m0-38h0m0 39h0m0 21h0m0-11h0m0-29h0m0 46h0m0-25h0m0-27h0m0 54h0m0-24h0m1 10h0m0 2h0m0 1h0m0-24h0m0-10h0m0 36h0m0-48h0m0 55h0m0-16h0m0 6h0m0-21h0m1-8h0m0-10h0m0 58h0m0 7h0m0-31h0m0-2h0m1-53h0m0 53h0m0-55h0m0 61h0m0-32h0m1 39h0m0 5h0m0 21h0m0-64h0m0 46h0m0-57h0m0 70h0m0-63h0m0 37h0m0-14h0m0-16h0m1 1h0m0 24h0m0-34h0m0 32h0m0 27h0m0 10h0m1-68h0m0 47h0m0-18h0m0-4h0m0-8h0m0 12h0m0-12h0m0 3h0m0-1h0m0 25h0m0-7h0m0-27h0m1 17h0m0-7h0m0 10h0m0 22h0m0-27h0m0 9h0m0 11h0m0-29h0m0 12h0m0-13h0m0-6h0m0 2h0m0 3h0m1 2h0m0 19h0m0-2h0m0-13h0m0-3h0m0 14h0m0 4h0m0-3h0m0 3h0m0-24h0m0 14h0m0 11h0m0-14h0m0-1h0m0 38h0m1-16h0m0-12h0m0 12h0m0-9h0m0-10h0m0 6h0m0-1h0m0 15h0m0-14h0m1 2h0m0-12h0m0 1h0m0 10h0m0 1h0m0 8h0m0-1h0m0-3h0m0-13h0m0 15h0m0 56h0m0-83h0m0 27h0m0 17h0m0-28h0m1 4h0m0-2h0m0-15h0m0 24h0m0-14h0m0 11h0m1-21h0m0 16h0m0 2h0m0-8h0m0 22h0m0-21h0m0 5h0m1-28h0m0 27h0m0-24h0m0 5h0m0 1h0m0 4h0m0 22h0m0-20h0m0 2h0m0-7h0m0 6h0m0-16h0m0 20h0m0-18h0m1-5h0m0 14h0m0 8h0m0-10h0m0-7h0m0 22h0m0-20h0m0 24h0m0 5h0m0-32h0m0 26h0m0 1h0m0 10h0m1 3h0m0-13h0m0-2h0m0-2h0m0 16h0m0-2h0m0-2h0m1 12h0m0-1h0m0-3h0m0-11h0m0 1h0m0 19h0m0-5h0m0-6h0m0-15h0m0 3h0m1 4h0m0-2h0m0 13h0m0-3h0m1-30h0m0 22h0m0 4h0m0-19h0m0-5h0m0 15h0m0-1h0m0 66h0m0-47h0m0-17h0m0 12h0m0 5h0m0-2h0m1-21h0m0 6h0m0-6h0m0-5h0m0 3h0m0-8h0m0 1h0m0 12h0m0-1h0m0 7h0m0 2h0m1-42h0m0-5h0m0 39h0m0 9h0m0 1h0m0-22h0m0 8h0m0 46h0m0-29h0m0-11h0m0 8h0m0-6h0m0-10h0m1-7h0m0-8h0m0 8h0m0 4h0m0 32h0m0-27h0m0 20h0m0 11h0m0-7h0m0-5h0m1 12h0m0-57h0m0 51h0m0-10h0m0-1h0m0-12h0m0 37h0m0-16h0m0 22h0m0-45h0m1 0h0m0 14h0m0-7h0m0-31h0m0 39h0m0-5h0m0-38h0m0 39h0m0 7h0m0 19h0m0-11h0m1-21h0m0 10h0m0-2h0m0 25h0m0-77h0m0 27h0m0-44h0m0 60h0m0-9h0m1 10h0m0 23h0m0-18h0m0 2h0m0 13h0m0 12h0m0-7h0m0-24h0m0 21h0m0-27h0m0 7h0m1 20h0m0-33h0m0 35h0m0-32h0m0 25h0m0-9h0m0 6h0m0-2h0m0-23h0m0 18h0m0 10h0m1-13h0m0 14h0m0-29h0m0 8h0m0 29h0m0-16h0m1-1h0m0-5h0m0 22h0m0-28h0m0 21h0m0 15h0m0-27h0m0-13h0m0 35h0m0-53h0m0 25h0m0 4h0m1-7h0m0 23h0m0-33h0m0 12h0m0 4h0m0 5h0m0-14h0m0 23h0m0-37h0m1 13h0m0 45h0m0-40h0m0-4h0m0 21h0m0-41h0m0 11h0m0 13h0m0 9h0m1 1h0m0 3h0m0-12h0m0 1h0m0 9h0m0 9h0m0-1h0m0-18h0m1-2h0m0 24h0m0-9h0m0 11h0m0-20h0m0-4h0m0 12h0m0-27h0m0-9h0m0 22h0m1 0h0m0 7h0m0-15h0m0 8h0m0 27h0m0-34h0m0 17h0m0-14h0m0 28h0m0 9h0m1-48h0m0 29h0m0-1h0m0 8h0m0 3h0m0-8h0m0 4h0m1-18h0m0 33h0m0-16h0m0-22h0m0 10h0m0 1h0m0-14h0m0 6h0m1-4h0m0 22h0m0 9h0m0-56h0m0-6h0m0 43h0m0-52h0m0 66h0m1-32h0m0 13h0m0-5h0m0 13h0m0-19h0m0 6h0m0-22h0m1-29h0m0 46h0m0-8h0m0 5h0m0-4h0m0 13h0m0-18h0m0-1h0m0-25h0m0 30h0m0 2h0m0 23h0m0-59h0m0 38h0m0-22h0m0 26h0m1-23h0m0 24h0m0 12h0m0 8h0m0-19h0m0 4h0m0 19h0m0 2h0m0-15h0m0-2h0m0-26h0m0 20h0m0 23h0m0-21h0m0-41h0m1-11h0m0 37h0m0 20h0m0-4h0m0 16h0m0-9h0m0 4h0m0-49h0m0 68h0m0-25h0m0-5h0m0 11h0m0 4h0m1-17h0m0 23h0m0-27h0m0 7h0m0 20h0m0 11h0m0-21h0m0 15h0m0-14h0m0-10h0m1 7h0m0 13h0m0-1h0m0 13h0m0-15h0m0 12h0m0 1h0m0-32h0m0-1h0m0 11h0m1 17h0m0 2h0m0-26h0m0 3h0m0-7h0m0 4h0m0 39h0m0-31h0m0-14h0m0 2h0m0-10h0m0 33h0m1-12h0m0 30h0m0-7h0m0-35h0m0-5h0m0 30h0m0 24h0m0-42h0m0-3h0m0 3h0m1-9h0m0-12h0m0 13h0m0-9h0m0 15h0m0-4h0m0-1h0m0 11h0m0-23h0m0 31h0m0-5h0m1 1h0m0-20h0m0 8h0m0 15h0m0-11h0m0-25h0m0 25h0m0-11h0m0 2h0m0 4h0m0-20h0m1 8h0m0-5h0m0 3h0m0 16h0m0 6h0m0-7h0m0 4h0m0-23h0m0 8h0m0-6h0m0 21h0m0-10h0m0 5h0m1-2h0m0 21h0m0-34h0m0 7h0m0-10h0m0 7h0m0 17h0m0-11h0m0-26h0m0 17h0m0 15h0m1-7h0m0 14h0m0-10h0m0 3h0m0 10h0m0 17h0m0-48h0m0 17h0m0 23h0m1-14h0m0 15h0m0-23h0m0 17h0m0-11h0m0-2h0m0 5h0m0 13h0m0-24h0m0 7h0m0-6h0m0-28h0m0 36h0m0-2h0m1 3h0m0 18h0m0-35h0m0-13h0m0 48h0m0 10h0m0-46h0m0 11h0m0 20h0m0-16h0m0-5h0m0-6h0m1-10h0m0 42h0m0-21h0m0-23h0m0 40h0m1-14h0m0 4h0m0 2h0m0-12h0m0-3h0m0-5h0m1 15h0m0 43h0m0-49h0m0 4h0m0-2h0m0 1h0m0 35h0m0-18h0m0 20h0m0-4h0m0-55h0m0 46h0m1-20h0m0-35h0m0 16h0m0 18h0m0 28h0m0-8h0m0-11h0m1-18h0m0 12h0m0 9h0m0 4h0m0-17h0m0-24h0m0 16h0m0 26h0m0-11h0m1 15h0m0-1h0m0-27h0m0-29h0m0 63h0m0-37h0m0 1h0m0-13h0m1 18h0m0 10h0m0-6h0m0 1h0m0-2h0m0-1h0m0 4h0m1 7h0m0-33h0m0-28h0m0 28h0m0 63h0m0-52h0m0-7h0m0 35h0m0-37h0m0 35h0m1 1h0m0-37h0m0 68h0m0-19h0m0-32h0m0-2h0m0-42h0m0 30h0m0 39h0m0 3h0m0-32h0m1-10h0m0 16h0m0-63h0m0 63h0m0 20h0m0-73h0m0 55h0m0-38h0m0 53h0m0 14h0m0-66h0m0 56h0m0-13h0m0 41h0m1-33h0m0 6h0m0-32h0m0 13h0m0-5h0m0-11h0m0 28h0m0-20h0m0 22h0m0-27h0m1-3h0m0 3h0m0 16h0m0-22h0m0-10h0m1-20h0m0-12h0m0 61h0m0 8h0m0-47h0m0 41h0m0-67h0m0 18h0m0 48h0m0-12h0m0-12h0m0-30h0m0 68h0m1-40h0m0 3h0m0-9h0m0 76h0m0-66h0m0 46h0m0-80h0m0 36h0m0 45h0m0-30h0m0-1h0m0-28h0m0 90h0m1-121h0m0 12h0m0 37h0m0 22h0m0-23h0m0-19h0m0-16h0m1 57h0m0-58h0m0 72h0m0-13h0m0 20h0m0-33h0m0-50h0m0 69h0m0 8h0m0-21h0m1-51h0m0 87h0m0-9h0m0-22h0m0-59h0m0 43h0m0 18h0m0 1h0m0 11h0m0-16h0m0 3h0m0-8h0m0 16h0m0-19h0m1-2h0m0 33h0m0-64h0m0 13h0m0 24h0m0-6h0m0-2h0m0-14h0m0 46h0m1-32h0m0 5h0m0-14h0m0 12h0m0 20h0m0-22h0m0 24h0m0-8h0m1-21h0m0 4h0m0 9h0m0 16h0m0 9h0m0-31h0m0 9h0m0 3h0m0 2h0m0 9h0m0-33h0m0 19h0m0 13h0m1 18h0m0-14h0m0 7h0m0-13h0m0-16h0m1 20h0m0-27h0m0 2h0m0 3h0m0 13h0m0 14h0m0-17h0m0 25h0m1-7h0m0 4h0m0-64h0m0 49h0m0 8h0m0-12h0m0-11h0m0 20h0m0 4h0m0-19h0m0-9h0m1 9h0m0-25h0m0 43h0m0-28h0m0 38h0m0-16h0m0-16h0m0 54h0m0-81h0m1 28h0m0-16h0m0 31h0m0 25h0m0-47h0m0-8h0m0 9h0m1 27h0m0-14h0m0-9h0m0 5h0m0-17h0m0 15h0m0-10h0m0 45h0m0-53h0m0 17h0m0 8h0m0-31h0m0-4h0m0 26h0m0 10h0m1 31h0m0-28h0m0-20h0m0-14h0m0 4h0m0-9h0m0 17h0m1-3h0m0 37h0m0-51h0m0 14h0m0-4h0m1 8h0m0-2h0m0-44h0m0 55h0m0 17h0m0 16h0m0-24h0m0 2h0m0-39h0m0 16h0m1 8h0m0-6h0m0-2h0m0 18h0m0-6h0m0 30h0m0-37h0m0 30h0m0 27h0m0-44h0m0 16h0m1-18h0m0-38h0m0 82h0m0-76h0m0 24h0m0 7h0m0-4h0m0-3h0m1-14h0m0-28h0m0 70h0m0-8h0m0-23h0m0 24h0m0-22h0m0-25h0m0-4h0m0 29h0m0-13h0m0 5h0m1-12h0m0-27h0m0 34h0m0 51h0m0-28h0m0-26h0m0 9h0m0-10h0m0 29h0m0 20h0m1-17h0m0-42h0m0-3h0m0 30h0m0-12h0m0-39h0m0 59h0m1-24h0m0-31h0m0 37h0m0 7h0m0-17h0m0-4h0m0 52h0m0-18h0m1-36h0m0 41h0m0 9h0m0-21h0m0-15h0m0 7h0m1-4h0m0 3h0m0 19h0m0 14h0m0 3h0m0-47h0m0 53h0m0 8h0m1-45h0m0 10h0m0-4h0m0-17h0m0 27h0m0-5h0m0-9h0m0-37h0m1 68h0m0-74h0m0 24h0m0-17h0m0 21h0m0-11h0m0 10h0m0-9h0m0 27h0m1-4h0m0-33h0m0 48h0m0-39h0m0 27h0m0-8h0m0 4h0m0 18h0m1-12h0m0 46h0m0-100h0m0 47h0m0-12h0m0-5h0m1-18h0m0 51h0m0-36h0m0 20h0m0-18h0m0-1h0m0 13h0m0-15h0m0-3h0m0 83h0m0-109h0m0 98h0m0-22h0m0-48h0m0-10h0m0 29h0m1 5h0m0 11h0m0-55h0m0 34h0m0 18h0m0 25h0m0-59h0m0 25h0m0-5h0m0 11h0m1 8h0m0 18h0m0-46h0m0 32h0m0-23h0m0-7h0m0 19h0m0-15h0m0 6h0m1 20h0m0 45h0m0-55h0m0-25h0m0 40h0m0 6h0m0-22h0m0 16h0m0-79h0m0 44h0m0 5h0m0-13h0m1 0h0m0 25h0m0-23h0m0-8h0m0 35h0m0 16h0m0-25h0m1 31h0m0-29h0m0 23h0m0-7h0m0 23h0m0 1h0m0-17h0m0 12h0m0 8h0m0-70h0m0 66h0m0-19h0m0-29h0m1 46h0m0-31h0m0-9h0m0 3h0m0 2h0m0 5h0m0-2h0m0 7h0m0-23h0m1 15h0m0 7h0m0 13h0m0-30h0m0-5h0m0-11h0m0 54h0m0 11h0m1-62h0m0-12h0m0 34h0m0-15h0m1 28h0m0 30h0m0-42h0m0-18h0m0 38h0m0 2h0m0-7h0m0-45h0m1 42h0m0-35h0m0 33h0m0-4h0m0 9h0m0-31h0m0 26h0m0-50h0m0 5h0m0 47h0m0-72h0m1 52h0m0 17h0m0-36h0m0 33h0m0 20h0m0-33h0m0 11h0m0-8h0m0 18h0m0-6h0m1-32h0m0 16h0m0 24h0m0-47h0m0 51h0m0-76h0m0 51h0m0 9h0m0 7h0m0-33h0m0 23h0m1-26h0m0-21h0m0-4h0m0-4h0m0 52h0m0 18h0m0 29h0m0-82h0m0 37h0m1-4h0m0-35h0m0 24h0m0 48h0m0-25h0m0-57h0m0-2h0m0 61h0m0-20h0m0 25h0m0-7h0m0-16h0m1-33h0m0 31h0m0 4h0m0-10h0m0-16h0m0 26h0m0 8h0m0 16h0m0-14h0m0 20h0m0-28h0m0 1h0m0 2h0m1-6h0m0 21h0m0-29h0m0 14h0m0 1h0m0-5h0m1 41h0m0-31h0m0-12h0m0 65h0m0-58h0m0 7h0m1-16h0m0-15h0m0 54h0m0-23h0m0-12h0m0-9h0m0 6h0m0 3h0m0 3h0m0-25h0m0 17h0m0 31h0m1-9h0m0-3h0m0-1h0m0-14h0m0 27h0m0-25h0m0 9h0m0 2h0m0-2h0m0-24h0m0 39h0m0-28h0m0 17h0m0-15h0m1 9h0m0 11h0m0-34h0m0 3h0m0 32h0m0-24h0m0 1h0m0 27h0m1-8h0m0-7h0m0 12h0m0-20h0m0 17h0m0-34h0m0 34h0m0-13h0m0 18h0m0 15h0m0-5h0m0-31h0m0-1h0m1 21h0m0-15h0m0 30h0m0-25h0m0-4h0m0-17h0m0 25h0m0-16h0m0 26h0m1-10h0m0 1h0m0-7h0m0-17h0m0 3h0m0 2h0m0 11h0m0-8h0m0 24h0m0-1h0m0-20h0m0 6h0m1-29h0m0 31h0m0 35h0m0-42h0m0-37h0m0 52h0m1-16h0m0-9h0m0-4h0m0 24h0m0-22h0m0 27h0m0-12h0m0-19h0m0 15h0m0 11h0m0-20h0m0-13h0m1 22h0m0 37h0m0-46h0m0-1h0m0-7h0m0 37h0m0-25h0m0 3h0m1 60h0m0-56h0m0-28h0m0 33h0m0-29h0m0-7h0m0 8h0m1 19h0m0-8h0m0 17h0m0-27h0m0 16h0m0-11h0m0-15h0m0-5h0m1 18h0m0-28h0m0 31h0m0 13h0m0 12h0m0-7h0m0-22h0m1-2h0m0 20h0m0-23h0m0 2h0m0 50h0m0-61h0m0 25h0m0-22h0m0 30h0m0-22h0m0 20h0m0 6h0m1-1h0m0 13h0m0-41h0m0 6h0m1 7h0m0 31h0m0-15h0m0 6h0m0 52h0m0-48h0m0-16h0m1 23h0m0-11h0m0 19h0m0-39h0m0 11h0m0-15h0m0 1h0m0 9h0m0-2h0m0 36h0m0-38h0m1 15h0m0-9h0m0-7h0m0 17h0m0 11h0m0 3h0m0-20h0m0 20h0m0-9h0m0-9h0m0 14h0m1-19h0m0 26h0m0-1h0m0-30h0m0-13h0m0 30h0m0-14h0m0 2h0m0 14h0m0 12h0m0-18h0m0-16h0m1 35h0m0-31h0m0 15h0m0 4h0m0 6h0m0-11h0m0 11h0m0-4h0m0-4h0m0-5h0m1 3h0m0-28h0m0 16h0m0 13h0m0 19h0m0-40h0m0 18h0m0 7h0m0-17h0m0 5h0m0 14h0m0-25h0m1 22h0m0 17h0m0-22h0m0 9h0m0-5h0m0-8h0m0 2h0m1-19h0m0 26h0m0-10h0m0 7h0m0 5h0m0-23h0m0 43h0m0-48h0m0 28h0m0-31h0m1 23h0m0-11h0m0-12h0m0 8h0m0 29h0m0-32h0m0 6h0m0-5h0m0-1h0m0 21h0m0-23h0m1-7h0m0 44h0m0-44h0m0-6h0m0 34h0m0-28h0m0 16h0m0-9h0m0-8h0m0 19h0m0-21h0m0 25h0m0-35h0m1 30h0m0-4h0m0-11h0m0 39h0m0-35h0m0 8h0m0 2h0m0 17h0m0-3h0m0-25h0m1 3h0m0-8h0m0 15h0m0 4h0m0 5h0m0-13h0m0 19h0m0-22h0m0 13h0m0-42h0m0 32h0m0 7h0m0-28h0m0 46h0m0 3h0m1-11h0m0 5h0m0-31h0m0 37h0m0-35h0m0 51h0m0-38h0m0 8h0m0-19h0m0-4h0m0 32h0m0-8h0m0-14h0m0 23h0m0 12h0m1-32h0m0 19h0m0-8h0m0 2h0m0 14h0m0-25h0m0 55h0m0-78h0m0 34h0m0 30h0m0-7h0m0-15h0m0-11h0m0 6h0m1-13h0m0-13h0m0 16h0m0-46h0m0 62h0m0-22h0m0-31h0m0 26h0m0 31h0m1-28h0m0 15h0m0-4h0m0-12h0m0 18h0m0 4h0m0 2h0m0-42h0m0 19h0m0 1h0m1 13h0m0-39h0m0 11h0m0 24h0m0 12h0m0-22h0m0-18h0m0 54h0m1-24h0m0 11h0m0-27h0m0 4h0m0 4h0m0 46h0m0-73h0m1 20h0m0-31h0m0-1h0m0 44h0m0 19h0m0 14h0m0-79h0m0 60h0m0-62h0m0 14h0m1 53h0m0 2h0m0-9h0m0-23h0m0-40h0m0 43h0m0 8h0m0-53h0m0-5h0m0 39h0m0-51h0m0 119h0m0-37h0m0 36h0m0-47h0m0-28h0m0-7h0m0-19h0m0 3h0m0 77h0m0-55h0m0 36h0m0-20h0m0-47h0m0 52h0m0-30h0m1 27h0m0 22h0m0-4h0m0-13h0m0-27h0m0-1h0m0-29h0m0 42h0m0 47h0m0-65h0m0 64h0m1-65h0m0 71h0m0-64h0m0 6h0m0-27h0m0 30h0m0 20h0m0-8h0m1 32h0m0-34h0m0-10h0m0 33h0m0-2h0m0 13h0m0-42h0m0-14h0m0 65h0m0-21h0m0-29h0m0-10h0m1-20h0m0 60h0m0-22h0m0-19h0m0 28h0m0-12h0m0 25h0m0-21h0m0-7h0m1 6h0m0-14h0m0 65h0m0-39h0m0-20h0m0-14h0m0 88h0m0-65h0m0 2h0m1 18h0m0 26h0m0-63h0m0-2h0m0 24h0m0 36h0m0-27h0m0 4h0m0-2h0m1-19h0m0 12h0m0-24h0m0-32h0m0 38h0m0 22h0m0 22h0m0-21h0m0 8h0m0 6h0m0-42h0m0 18h0m0 18h0m0-31h0m1-18h0m0 20h0m0 8h0m0 20h0m0-29h0m0 15h0m0-14h0m0 33h0m0-50h0m0 52h0m0 37h0m0-73h0m0 25h0m1-37h0m0 25h0m0 35h0m0 2h0m0-73h0m0-14h0m0 70h0m0 17h0m0-44h0m1-8h0m0 18h0m0 4h0m0 13h0m0-61h0m0 99h0m0-40h0m1-5h0m0-18h0m0-7h0m0 30h0m0-28h0m0 20h0m0-10h0m0 6h0m0-10h0m0-8h0m1 61h0m0-44h0m0-46h0m0 26h0m0 28h0m0 1h0m0-9h0m0-12h0m0-3h0m0 9h0m0-30h0m0 42h0m0 1h0m1 37h0m0-34h0m0-19h0m0 24h0m0-2h0m0-17h0m0 4h0m0-21h0m0-14h0m0 23h0m1 14h0m0-16h0m0 18h0m0-31h0m0 40h0m0-2h0m0 10h0m1-24h0m0-6h0m0-34h0m0 53h0m0 7h0m0-19h0m0-2h0m0-11h0m0 34h0m0-28h0m0 17h0m0-37h0m0 29h0m0 10h0m0 7h0m0-29h0m1 0h0m0 17h0m0 6h0m0-34h0m0 10h0m0 31h0m0-27h0m0 3h0m0 9h0m0-1h0m1-9h0m0 25h0m0-5h0m0-13h0m0-4h0m0-7h0m0 13h0m0-17h0m0 8h0m1 3h0m0 1h0m0-3h0m0 17h0m0-15h0m1 8h0m0-2h0m0-6h0m0 6h0m0-5h0m0-5h0m0-1h0m0 10h0m0-8h0m0 8h0m1-1h0m0 8h0m0-6h0m0-5h0m0 7h0m0-4h0m0 3h0m0-3h0m0-3h0m0-1h0m0 3h0m0-4h0m0 7h0m0-1h0m1-1h0m0-3h0m0 12h0m0 1h0m0-2h0m0-8h0m0 2h0m0 6h0m0-1h0m0 1h0m1 4h0m0-9h0m0-10h0m0-16h0m0 27h0m0 13h0m0-15h0m0 1h0m0 3h0m0-11h0m0-3h0m1 0h0m0 17h0m0 3h0m0-26h0m0 18h0m0 1h0m0 1h0m0 6h0m0-31h0m0 34h0m0-22h0m0-13h0m0 32h0m0-6h0m0-19h0m0 61h0m0-28h0m0-4h0m1-3h0m0-18h0m0 2h0m0 14h0m0-11h0m0-4h0m0 6h0m0-8h0m0-13h0m0 20h0m0-9h0m0 22h0m0-10h0m0-10h0m0-9h0m0 10h0m0 6h0m0-8h0m1 23h0m0 6h0m0-13h0m0-27h0m0 52h0m0-62h0m0 23h0m0-2h0m1 8h0m0-12h0m0-10h0m0 27h0m0-14h0m0 13h0m0 17h0m0-31h0m0 28h0m0-26h0m0 3h0m0 13h0m1-15h0m0 9h0m0 5h0m0 9h0m0-14h0m0-5h0m0 13h0m0-4h0m0 24h0m0-40h0m0 9h0m0 16h0m0-27h0m1-36h0m0 14h0m0 28h0m0-31h0m0 25h0m0 15h0m0-17h0m0 1h0m1 47h0m0-14h0m0-13h0m0-26h0m0-2h0m0 19h0m0 10h0m0-34h0m0 31h0m0 32h0m0-43h0m0-22h0m1 53h0m0-16h0m0-18h0m0-1h0m0 17h0m0-29h0m0 24h0m0 18h0m0-33h0m1-11h0m0 21h0m0 11h0m0 20h0m0-14h0m0-45h0m0 28h0m0 11h0m0-36h0m0 21h0m0-18h0m1 21h0m0-21h0m0 30h0m0-6h0m0 8h0m0-3h0m0-27h0m0 9h0m0-15h0m1 20h0m0 29h0m0-41h0m0 27h0m0 4h0m0 32h0m0-49h0m0 16h0m0 35h0m0-45h0m0-27h0m0 48h0m0 33h0m1-57h0m0 4h0m0 3h0m0-28h0m0 3h0m0 23h0m0-41h0m0 99h0m0-71h0m0 11h0m0 32h0m1-23h0m0 7h0m0-27h0m0 1h0m0-14h0m0-7h0m0-1h0m0 10h0m0 12h0m0 16h0m0-18h0m0-22h0m0 25h0m1 15h0m0-17h0m0 19h0m0-20h0m0 17h0m0 54h0m0-82h0m0-3h0m1 11h0m0 20h0m0-48h0m0 43h0m0-18h0m0 12h0m1 3h0m0-27h0m0 33h0m0-31h0m0 39h0m0-59h0m0 39h0m0-11h0m0 21h0m0-23h0m1 59h0m0-54h0m0 35h0m0-22h0m0-2h0m0 34h0m0-25h0m0-29h0m0 19h0m0-15h0m0 32h0m0-21h0m1-37h0m0 17h0m0 16h0m0 37h0m0-19h0m0 9h0m0-21h0m1-12h0m0 15h0m0-9h0m0-8h0m0-6h0m0 64h0m0-16h0m0-78h0m0 39h0m0-38h0m0 46h0m0 43h0m1-98h0m0 77h0m0-9h0m0-8h0m0-22h0m0 8h0m0 7h0m0 21h0m0-11h0m0 1h0m0 54h0m0-61h0m0-35h0m0 39h0m0-35h0m0-14h0m0-12h0m0 14h0m0 18h0m1-14h0m0 3h0m0 19h0m0 71h0m0-114h0m0 108h0m0-75h0m0 33h0m0-12h0m0-44h0m0 53h0m0-48h0m0 17h0m0 37h0m0-29h0m0 10h0m0-36h0m0 15h0m1 7h0m0 14h0m0-48h0m0 57h0m0-21h0m0 46h0m0-47h0m0-19h0m0 63h0m0-21h0m0-5h0m0-24h0m1 53h0m0-73h0m0 49h0m0 2h0m0 16h0m0-31h0m0 40h0m0-70h0m0 18h0m0 21h0m1 35h0m0-32h0m0 7h0m0 13h0m0-12h0m0 5h0m0-20h0m0 39h0m0 16h0m0-17h0m0-15h0m0 20h0m0-10h0m1-21h0m0-50h0m0 68h0m0-8h0m0-14h0m0 11h0m0 19h0m0-20h0m0 16h0m0-10h0m0-38h0m0 41h0m1 23h0m0-32h0m0-28h0m0 34h0m0-50h0m0 43h0m0-25h0m0 49h0m0-11h0m0-78h0m0 86h0m0-17h0m0-2h0m0 13h0m0-27h0m0 8h0m0 5h0m1-64h0m0 64h0m0-36h0m0 34h0m0 6h0m0 11h0m0-24h0m0 11h0m0-2h0m0 1h0m1 26h0m0-25h0m0 34h0m0-30h0m0-18h0m0 15h0m1-11h0m0 12h0m0 27h0m0 22h0m0-96h0m0 44h0m0-28h0m0 50h0m0-45h0m0 22h0m1 18h0m0-41h0m0 21h0m0-9h0m0 21h0m0-15h0m0 1h0m0-1h0m0-11h0m1 28h0m0 38h0m0-33h0m0-75h0m0 65h0m0-21h0m0-15h0m0-10h0m1 23h0m0 31h0m0-47h0m0 31h0m0 6h0m0-16h0m1-26h0m0 57h0m0-40h0m0-3h0m0 15h0m0-14h0m0-8h0m0 31h0m0-16h0m0 39h0m0-7h0m0-28h0m0 28h0m1-21h0m0 10h0m0-32h0m0 10h0m0-20h0m0 17h0m0 15h0m0 8h0m0 43h0m0-64h0m0-30h0m0 60h0m1 1h0m0 25h0m0-70h0m0 9h0m0 7h0m0 2h0m0 12h0m0-30h0m0 42h0m1-34h0m0-9h0m0 36h0m0-19h0m0 51h0m0-55h0m0 37h0m0 14h0m0-50h0m0 23h0m0-21h0m1-21h0m0-25h0m0 41h0m0-14h0m0-1h0m0 35h0m0-63h0m1 67h0m0-21h0m0-6h0m0 67h0m0-89h0m0 44h0m0-2h0m0-7h0m1 13h0m0-4h0m0 29h0m0-59h0m0 79h0m0-68h0m1 41h0m0 17h0m0-96h0m0 68h0m0-13h0m1 2h0m0-34h0m0 42h0m0-45h0m1 6h0m0-1h0m0 25h0m0-19h0m0 44h0m0-22h0m0 53h0m0-57h0m0 2h0m1 20h0m0-43h0m0 15h0m0 7h0m0-10h0m0 4h0m0 3h0m0 11h0m1-2h0m0 25h0m0-29h0m0 13h0m0-11h0m1 6h0m0-19h0m0 13h0m0-41h0m0 20h0m0 27h0m0-34h0m0 16h0m0-16h0m0 18h0m0 15h0m0-36h0m0-6h0m0 22h0m0-22h0m0-15h0m1 61h0m0-22h0m0 14h0m0-46h0m0 1h0m0-4h0m0 61h0m0-22h0m0 33h0m0-53h0m0 19h0m0 4h0m1 8h0m0-55h0m0-4h0m0 18h0m0-9h0m0 66h0m0-19h0m0-37h0m0 27h0m0 19h0m0-14h0m1 16h0m0-47h0m0 35h0m0-6h0m0-9h0m0 48h0m0-63h0m0-3h0m0 27h0m1 13h0m0-51h0m0 44h0m0 31h0m0-94h0m0 66h0m0-17h0m0 24h0m0 40h0m0-21h0m0-26h0m1 19h0m0 8h0m0-29h0m0 27h0m0-42h0m0 23h0m0-4h0m0 2h0m0-7h0m0 29h0m0-23h0m0 5h0m0-48h0m1 69h0m0-14h0m0-9h0m0-17h0m0 15h0m0-9h0m0-15h0m0-2h0m0 48h0m0-43h0m0 44h0m0-33h0m0 13h0m0 11h0m1-48h0m0 7h0m0 39h0m0 30h0m0-73h0m0 33h0m0-9h0m0 7h0m1-1h0m0-7h0m0 20h0m0 11h0m0-4h0m0-60h0m0 59h0m0-25h0m0 5h0m0 20h0m0-12h0m0 23h0m0-52h0m1 43h0m0-25h0m0 15h0m0 36h0m0-48h0m0 20h0m0 4h0m0 17h0m1-37h0m0 27h0m0-33h0m0 30h0m0-19h0m0-4h0m0-9h0m0 26h0m0-33h0m0 3h0m0 42h0m0-26h0m1-2h0m0-27h0m0 14h0m0 32h0m0-30h0m0-20h0m0 44h0m0-12h0m0 6h0m0 31h0m0-15h0m0-61h0m0 25h0m0-3h0m1 19h0m0-18h0m0 39h0m0-24h0m0 20h0m0-75h0m0 15h0m0 70h0m0-60h0m1 34h0m0-58h0m0 46h0m0-47h0m0 23h0m1 33h0m0-22h0m0 36h0m0-74h0m0-1h0m0-5h0m0 84h0m0-47h0m0 21h0m0 19h0m0-36h0m0 36h0m0-34h0m0 24h0m0-72h0m1 66h0m0 14h0m0-19h0m0 12h0m0-13h0m0-6h0m0-9h0m0-24h0m0 5h0m0 47h0m0-20h0m0 32h0m0-25h0m1-13h0m0 3h0m0 16h0m0 4h0m0-17h0m0-8h0m0-36h0m0 50h0m0-1h0m0 14h0m0-30h0m0 35h0m0-68h0m0 34h0m0 4h0m0 24h0m0 4h0m1-20h0m0 2h0m0 3h0m0-10h0m0 7h0m0 21h0m0 3h0m0-20h0m0 2h0m0-33h0m0 32h0m1 19h0m0-39h0m0 23h0m0-3h0m1-2h0m0 1h0m0-11h0m0 14h0m0 3h0m0-9h0m1 16h0m0 8h0m0-7h0m0-11h0m0-3h0m0 2h0m0 11h0m0-9h0m0 12h0m0-15h0m0 7h0m0-13h0m0 10h0m0 4h0m0-49h0m0 22h0m1 6h0m0 14h0m0-2h0m0 11h0m0-25h0m0-2h0m0 17h0m1-5h0m0 22h0m0-4h0m0-3h0m0 13h0m0-14h0m0-4h0m0-10h0m0 24h0m0-14h0m0 11h0m1-34h0m0 48h0m0-17h0m0 4h0m0-14h0m0-12h0m0 17h0m0-7h0m0-5h0m0 1h0m0 15h0m1-11h0m0-14h0m0 22h0m0 1h0m0-1h0m0-15h0m0-3h0m0 10h0m0 22h0m1-34h0m0-3h0m0 9h0m0-14h0m0 80h0m0-73h0m1 23h0m0-23h0m0 46h0m0-17h0m0-8h0m0-12h0m0 19h0m0-34h0m0 27h0m0-5h0m0 23h0m0-19h0m0-58h0m1 85h0m0-32h0m0-23h0m0 14h0m0 18h0m0-9h0m0-4h0m0 6h0m0-39h0m0 10h0m0-15h0m0 12h0m0 25h0m1 1h0m0-4h0m0-20h0m0-8h0m0 50h0m0-13h0m0 29h0m0 10h0m1-82h0m0 39h0m0 31h0m0-49h0m0 48h0m0-51h0m0 19h0m0-13h0m0 16h0m0-55h0m0 77h0m0-25h0m0-7h0m1 24h0m0-10h0m0 14h0m0-38h0m0 15h0m0 44h0m0-38h0m1 27h0m0-87h0m0 47h0m0 35h0m0-15h0m0 8h0m0 45h0m0-40h0m0-20h0m0 27h0m1-47h0m0 22h0m0-19h0m0 36h0m0-3h0m0-38h0m0 29h0m1 16h0m0-9h0m0-4h0m0 20h0m0-40h0m0 9h0m0 13h0m0-54h0m0 27h0m1 35h0m0-23h0m0 27h0m0-68h0m0 67h0m0-15h0m0 28h0m0-43h0m0 3h0m1-36h0m0 35h0m0 7h0m0 14h0m0 7h0m0-16h0m0-9h0m1 1h0m0-14h0m0 19h0m0-18h0m0 28h0m0-68h0m0 44h0m1 33h0m0-44h0m0 31h0m0-26h0m0 12h0m0-2h0m0 10h0m0 11h0m0-4h0m0-25h0m0 24h0m1-26h0m0 7h0m0 18h0m0-23h0m0 5h0m1 5h0m0-10h0m0 14h0m0-17h0m0 21h0m0-7h0m0-2h0m0 10h0m0-18h0m0 12h0m0-2h0m0-3h0m0 1h0m0-5h0m0-7h0m0-5h0m0 20h0m0 3h0m0-8h0m0-2h0m0-9h0m1 25h0m0-18h0m0 9h0m0-50h0m0 49h0m0-13h0m0 8h0m0 5h0m0 23h0m0-28h0m0 3h0m0-26h0m0 25h0m0-43h0m0 37h0m0 1h0m1-13h0m0 7h0m0 2h0m0-47h0m0 44h0m0 6h0m0-7h0m0-15h0m0-7h0m0 27h0m0 1h0m1 23h0m0-21h0m0-20h0m0 4h0m0 3h0m0-20h0m0 41h0m0-41h0m0 44h0m0-13h0m0-29h0m0 28h0m0 14h0m0-26h0m0-17h0m1 43h0m0-53h0m0 3h0m0 49h0m0 2h0m0-27h0m0 27h0m0 7h0m0-14h0m0-5h0m0 2h0m0 5h0m0 12h0m0-49h0m0 43h0m1-51h0m0 9h0m0 46h0m0 14h0m0 33h0m0-72h0m0 2h0m0 16h0m0 3h0m0-41h0m0 43h0m0 22h0m0-35h0m0 10h0m0-21h0m0 2h0m1 3h0m0 12h0m0 43h0m0-33h0m0 3h0m0 18h0m0-30h0m0-6h0m0 31h0m1-17h0m0-50h0m0-1h0m0 56h0m0 11h0m0 21h0m0 5h0m1-53h0m0 43h0m0-54h0m0 29h0m0-3h0m0 9h0m0-40h0m0 46h0m0-20h0m0 14h0m1-42h0m0 35h0m0-7h0m0 3h0m0 30h0m0-7h0m0-18h0m0 9h0m0-22h0m0-8h0m0 8h0m1-3h0m0 24h0m0-1h0m0 4h0m0-9h0m0-15h0m0-56h0m0 84h0m1-2h0m0-48h0m0 73h0m0-57h0m0 35h0m0-44h0m0 25h0m1-4h0m0 15h0m0-50h0m0 19h0m0 42h0m0-57h0m0 20h0m0-20h0m1 46h0m0-13h0m0-10h0m0 35h0m0-15h0m0-19h0m0 5h0m0 5h0m0-4h0m0 19h0m0-8h0m0-6h0m1 7h0m0-16h0m0 22h0m0-74h0m0 82h0m0-15h0m0-13h0m0-58h0m0 64h0m0-9h0m0-38h0m0 68h0m1-28h0m0 11h0m0-14h0m0 11h0m0-11h0m0 32h0m0-35h0m0 31h0m1-28h0m0 16h0m0-9h0m0-65h0m0 56h0m0-2h0m0 16h0m0 6h0m0-3h0m0 1h0m0-13h0m0 22h0m0-27h0m0 6h0m0 7h0m1-28h0m0 31h0m0-4h0m0 4h0m0 46h0m0-52h0m0-21h0m0 3h0m0 25h0m0-16h0m0 13h0m0-2h0m1-11h0m0-26h0m0 81h0m0-62h0m0 14h0m0-15h0m1 14h0m0 28h0m0-44h0m0-16h0m0 85h0m0-54h0m0-9h0m0 43h0m0-56h0m0 32h0m0-17h0m1 14h0m0-23h0m0 43h0m0-13h0m0-18h0m0 13h0m0-24h0m1 19h0m0-7h0m0-20h0m0 11h0m0-10h0m0 23h0m0 1h0m0 4h0m0-26h0m1 4h0m0 5h0m0-21h0m0 17h0m0 4h0m0 32h0m0-66h0m0 65h0m1-15h0m0 25h0m0-49h0m0-17h0m0 38h0m0 3h0m0 18h0m0-22h0m0-2h0m1-24h0m0 9h0m0 9h0m0 7h0m0-26h0m0 34h0m0 6h0m1-31h0m0-18h0m0 9h0m0 5h0m0 20h0m0 15h0m0 3h0m0-27h0m0-5h0m0 39h0m0-15h0m0-6h0m0-14h0m0-3h0m0 21h0m0-11h0m0-2h0m0-2h0m1 15h0m0 6h0m0-5h0m0-9h0m0-30h0m0 37h0m0-8h0m0 26h0m0-34h0m1-7h0m0 16h0m0 1h0m0-40h0m0 73h0m0-58h0m0 43h0m0-38h0m0-13h0m1 35h0m0-3h0m0-53h0m0 58h0m0 6h0m0-10h0m0 10h0m0 16h0m0-24h0m1 3h0m0-7h0m0-18h0m0 41h0m0-16h0m0-15h0m0 1h0m0 19h0m0-10h0m0-16h0m0 3h0m0 35h0m0-33h0m1 4h0m0 13h0m0 9h0m0-4h0m0-20h0m1 3h0m0 6h0m0-14h0m0 46h0m0-35h0m0 21h0m0-29h0m1 1h0m0 1h0m0-12h0m0 12h0m0 19h0m0 12h0m0-3h0m1 1h0m0 39h0m0-52h0m0 14h0m0 2h0m0-25h0m0 7h0m0 14h0m0 10h0m0 14h0m0-15h0m0-31h0m1-10h0m0 17h0m0-19h0m0 13h0m0 4h0m0 21h0m0-46h0m0 47h0m0 12h0m1-60h0m0 19h0m0-4h0m0 12h0m0-27h0m0 35h0m0-16h0m0-4h0m0 27h0m0-10h0m0 13h0m1 1h0m0-31h0m0 24h0m0-5h0m0 1h0m0-21h0m0 2h0m0-9h0m0-4h0m0 7h0m0-10h0m0 1h0m0 28h0m0-6h0m1 12h0m0-38h0m0 60h0m0-48h0m0 18h0m0-3h0m0-9h0m0 18h0m0-13h0m1 18h0m0 1h0m0-17h0m0 34h0m0-18h0m0-21h0m0-1h0m1 22h0m0-50h0m0 22h0m0 18h0m0 8h0m0-8h0m1-2h0m0-16h0m0-3h0m0 42h0m0-33h0m0 10h0m0-7h0m0 26h0m0-54h0m0 37h0m0-22h0m1 38h0m0-19h0m0 14h0m0-30h0m0 22h0m0-15h0m0 2h0m0 11h0m0-40h0m0 26h0m0 8h0m0-8h0m0 7h0m0 21h0m0-47h0m0 22h0m0-5h0m1-25h0m0 22h0m0-38h0m0 13h0m0 32h0m0 3h0m0-34h0m0 17h0m0-20h0m0 2h0m0 33h0m0-15h0m0 6h0m1-9h0m0 21h0m0-63h0m0 12h0m0 42h0m0-19h0m0-10h0m0 17h0m0-6h0m0-1h0m0 36h0m0-1h0m0-39h0m0-10h0m0 40h0m0-40h0m0-5h0m1 40h0m0 37h0m0-49h0m0 13h0m0-8h0m0-6h0m0 62h0m0-49h0m0-9h0m0-1h0m0-40h0m0 49h0m0-4h0m0-22h0m0 63h0m0-44h0m1 17h0m0-26h0m0-28h0m0 41h0m0 46h0m0-29h0m0-13h0m1-40h0m0 51h0m0-7h0m0-43h0m0 39h0m0 12h0m0 7h0m0-16h0m0-31h0m0 32h0m0 16h0m0 12h0m0-84h0m0 68h0m0-14h0m0-20h0m0 35h0m0-60h0m0 48h0m1-2h0m0 8h0m0-19h0m0 13h0m0 29h0m0-16h0m0-3h0m0 5h0m1-23h0m0 26h0m0-4h0m0-18h0m0 27h0m0-19h0m0 5h0m0 2h0m0-15h0m0 6h0m1 3h0m0 2h0m0-6h0m0 14h0m0-18h0m0-8h0m0 19h0m0-7h0m0 8h0m1 20h0m0-39h0m0 30h0m0-13h0m0 1h0m0-5h0m0 4h0m1 6h0m0 2h0m0-8h0m0-11h0m0 21h0m0-45h0m0 25h0m0 17h0m1 14h0m0-13h0m0-7h0m0 3h0m0-21h0m0 13h0m0-7h0m0 10h0m0-6h0m1 3h0m0 13h0m0 1h0m0 15h0m0-26h0m1 5h0m0 8h0m0-7h0m0-23h0m0 18h0m0-17h0m0-40h0m0 49h0m0 14h0m0-42h0m0 40h0m0-10h0m0 7h0m1 37h0m0-18h0m0-13h0m0-77h0m0 61h0m0 25h0m0-25h0m0-16h0m0 30h0m1 22h0m0-45h0m0-3h0m0 14h0m0 16h0m0-12h0m0-1h0m0-4h0m0 14h0m0 7h0m1-17h0m0 21h0m0-21h0m0 8h0m0-6h0m0-5h0m0 3h0m0-25h0m0 27h0m0 22h0m1 1h0m0-15h0m0-5h0m0-20h0m0 22h0m0-22h0m0 20h0m0 8h0m0-54h0m0 21h0m0 31h0m0-8h0m1-4h0m0 18h0m0 2h0m0-24h0m0-14h0m0 14h0m0 8h0m0 27h0m0-14h0m1-3h0m0 4h0m0-22h0m0-2h0m0 9h0m0 11h0m1-3h0m0-19h0m0 13h0m0-31h0m0 19h0m0-19h0m0 26h0m0 33h0m0-38h0m0-7h0m0 24h0m0-2h0m0-17h0m1 5h0m0-16h0m0 42h0m0-26h0m0-18h0m0-8h0m0 51h0m0-32h0m0-8h0m0 4h0m1 11h0m0 7h0m0-20h0m0 18h0m0-6h0m0 13h0m0-43h0m0 44h0m0 3h0m1-46h0m0 50h0m0-21h0m0 21h0m0 1h0m0-1h0m0-13h0m0-36h0m0 53h0m1-9h0m0-37h0m0 40h0m0-7h0m0-25h0m0 25h0m0-61h0m1 76h0m0-35h0m0 16h0m0-35h0m0 13h0m0 25h0m0 16h0m1 21h0m0-65h0m0 5h0m0 61h0m0-36h0m0 5h0m0 7h0m0-51h0m0 32h0m1-3h0m0-22h0m0 44h0m0-56h0m0 5h0m0 3h0m1 10h0m0 26h0m0 41h0m0-29h0m0-45h0m0 39h0m0 4h0m1-37h0m0 39h0m0-5h0m0 26h0m0-27h0m0 21h0m0-45h0m0 12h0m0 6h0m1-11h0m0-35h0m0 63h0m0-23h0m0 9h0m0 18h0m0-23h0m0-26h0m0 38h0m0 29h0m0-66h0m1 28h0m0-11h0m0-3h0m0-25h0m0 41h0m0-34h0m0-27h0m0 40h0m0 9h0m0 31h0m0-44h0m0-21h0m0 69h0m1-52h0m0 34h0m0-12h0m0-11h0m0 29h0m0-6h0m0-28h0m0 33h0m0-73h0m0 90h0m0-50h0m0 3h0m0 11h0m0-15h0m0 37h0m0-66h0m0 22h0m1 31h0m0-11h0m0-28h0m0 14h0m0 36h0m1-32h0m0-36h0m0 33h0m0-19h0m0 8h0m0-8h0m0-18h0m0 37h0m0 12h0m0 12h0m1-9h0m0-12h0m0-31h0m0-5h0m0 35h0m0-26h0m0 7h0m0 4h0m0 12h0m0-1h0m0-44h0m0 24h0m1-8h0m0 32h0m0-6h0m0-21h0m0 30h0m0-23h0m0 27h0m0 6h0m1 14h0m0 10h0m0-59h0m0 87h0m0-93h0m0 24h0m1-9h0m0 15h0m0 15h0m0 4h0m0-41h0m0 8h0m0 28h0m0-3h0m0-5h0m1 15h0m0-30h0m0 2h0m0-24h0m0-11h0m0 27h0m0-31h0m0-3h0m1 61h0m0-26h0m0-31h0m0 110h0m0-121h0m0 51h0m0-54h0m0 9h0m0 11h0m0 47h0m0-32h0m0-24h0m1 104h0m0-81h0m0 12h0m0 8h0m0-15h0m0 77h0m0-42h0m0-70h0m0 86h0m1-41h0m0 14h0m0 9h0m0-52h0m0 34h0m0-37h0m0 83h0m0-32h0m0-3h0m0 17h0m0-60h0m0-18h0m0 24h0m0 38h0m1 28h0m0-38h0m0 1h0m0-43h0m1 52h0m0-3h0m0-28h0m0 53h0m0-13h0m0-1h0m0 16h0m0-53h0m0-4h0m0 48h0m0-17h0m1 29h0m0-52h0m0 30h0m0-10h0m0-10h0m0 16h0m0-62h0m0 55h0m0 59h0m0-12h0m0-16h0m0-42h0m1 13h0m0 62h0m0-42h0m0 3h0m0 11h0m0-36h0m0 48h0m0-28h0m0 26h0m0-98h0m0 54h0m0-38h0m0 9h0m1 64h0m0-41h0m0 4h0m0 2h0m0 7h0m0-9h0m0-18h0m0 27h0m0 41h0m0-49h0m1-5h0m0 21h0m0-18h0m0 25h0m0-14h0m0-9h0m0-15h0m0 12h0m0 24h0m0 5h0m0 9h0m0-60h0m1 54h0m0 11h0m0-50h0m0 21h0m0 2h0m1-6h0m0 35h0m0-36h0m1 22h0m0-26h0m0-3h0m0-20h0m0 4h0m0 66h0m0-43h0m0-14h0m0-16h0m1-3h0m0 26h0m0-23h0m0 54h0m0 9h0m0 16h0m0-37h0m0-15h0m0-34h0m0 17h0m0 5h0m0 32h0m1-43h0m0 4h0m0 1h0m0 18h0m0 8h0m0-12h0m0 6h0m0-20h0m0 23h0m0-22h0m0 57h0m0-25h0m0-21h0m0-20h0m1 49h0m0 23h0m0-63h0m0-16h0m0 50h0m0-12h0m0 9h0m0-33h0m0 13h0m0 23h0m0-35h0m0-25h0m0 20h0m0 29h0m0-24h0m0 22h0m1 13h0m0-18h0m0 19h0m0-22h0m0-13h0m0-8h0m1 19h0m0 5h0m0 23h0m0-69h0m0 28h0m0 30h0m0 28h0m0-53h0m0 21h0m1-41h0m0 23h0m0 30h0m0 9h0m0-23h0m0-30h0m0 23h0m1-15h0m0 4h0m0 36h0m0-8h0m0-22h0m0 9h0m0 5h0m0 27h0m0-64h0m0 16h0m1-22h0m0 22h0m0-14h0m0 58h0m0-14h0m0-72h0m1 28h0m0-22h0m0 40h0m0 45h0m0-14h0m0-29h0m0-51h0m0 46h0m0 23h0m0-32h0m0 5h0m0-33h0m1 58h0m0-10h0m0-35h0m0 27h0m0 7h0m0-2h0m0-39h0m0 38h0m0-24h0m0-3h0m0-2h0m0-22h0m0 54h0m0-26h0m0-1h0m0 44h0m0-29h0m0 11h0m0-28h0m0-3h0m0-6h0m1 41h0m0 11h0m0 35h0m0-58h0m0-5h0m0 14h0m0-4h0m0-24h0m0-1h0m0 27h0m0-37h0m1 45h0m0 28h0m0-12h0m0-49h0m0-3h0m0 69h0m0-67h0m0 2h0m0-7h0m0 4h0m0-31h0m0 58h0m0-6h0m1 23h0m0 31h0m0-9h0m0-37h0m0 24h0m0-42h0m0 34h0m0-3h0m0-31h0m0 32h0m0 5h0m1-30h0m0 19h0m0-3h0m0-45h0m0 59h0m0-27h0m0 34h0m0-16h0m0-15h0m0 21h0m0 2h0m0-31h0m1 5h0m0 20h0m0-26h0m0-2h0m0-6h0m0 23h0m0-5h0m0 21h0m1-35h0m0 9h0m0 15h0m0 3h0m0-14h0m0-23h0m1 19h0m0 17h0m0-30h0m0 8h0m0 8h0m0 8h0m0 8h0m0-11h0m0-25h0m0-3h0m1 26h0m0-30h0m0 74h0m0-68h0m0 37h0m0-28h0m0 20h0m0 27h0m0-18h0m0-22h0m0-4h0m0 17h0m0-19h0m0 13h0m1-19h0m0 37h0m0-1h0m0-27h0m0 31h0m0-28h0m0 4h0m0-15h0m0 45h0m1-54h0m0 29h0m0 4h0m0 10h0m0-31h0m0-4h0m0 18h0m0 41h0m0-43h0m0 33h0m0-47h0m1 8h0m0 23h0m0 7h0m0-18h0m0 15h0m0-70h0m0 84h0m0-31h0m0 20h0m0-41h0m0 27h0m0-41h0m0 34h0m0 26h0m1-12h0m0-6h0m0 18h0m0-39h0m0 64h0m0-53h0m0 18h0m0 23h0m0-29h0m0-16h0m0-11h0m1 14h0m0 69h0m0-76h0m0-2h0m0 8h0m0 22h0m1-16h0m0-3h0m0 31h0m0-31h0m0-4h0m0 13h0m0-7h0m1-12h0m0-37h0m0 41h0m0 29h0m0-36h0m0 9h0m0 8h0m0 6h0m0 18h0m0-21h0m1-9h0m0 28h0m0-2h0m0-26h0m1-16h0m0 25h0m0-29h0m0 8h0m0 25h0m0 6h0m0-4h0m0-30h0m0 8h0m0 26h0m1-39h0m0-12h0m0 11h0m0 24h0m0-3h0m0-15h0m0-19h0m0 25h0m0-9h0m0 27h0m0-3h0m0 5h0m1-14h0m0 8h0m0 3h0m0 1h0m0-25h0m0 33h0m0-34h0m0 35h0m0-10h0m1-8h0m0 9h0m0 5h0m0-1h0m0-52h0m0 69h0m0-13h0m0-45h0m0 37h0m0-32h0m0-32h0m0 68h0m0-34h0m1 24h0m0 17h0m0-52h0m0 60h0m0 13h0m0 1h0m0 5h0m0-41h0m0-54h0m0 86h0m0-38h0m0 28h0m0-64h0m0 41h0m0-24h0m0-7h0m0 25h0m1-8h0m0 40h0m0-77h0m0 62h0m0-8h0m0 36h0m0 8h0m0-105h0m0 67h0m0-30h0m0 37h0m0-52h0m0 46h0m0-3h0m1-45h0m0 71h0m0-79h0m0 24h0m0-4h0m0-3h0m0 26h0m0-4h0m0 14h0m0-21h0m0 39h0m0-29h0m0-9h0m0-44h0m0 62h0m1 45h0m0-51h0m0 29h0m0-29h0m0 60h0m1-75h0m0-19h0m0 26h0m0 48h0m0 10h0m0-103h0m0 48h0m0-18h0m0 21h0m0 17h0m1-59h0m0 66h0m0 1h0m0-6h0m0-40h0m0 52h0m0-16h0m0-39h0m0 51h0m0-31h0m0 65h0m0-76h0m1 4h0m0 17h0m0-38h0m0 15h0m0 23h0m0 35h0m0-18h0m0 27h0m0-19h0m1 11h0m0-26h0m0 10h0m0-33h0m0 11h0m0 11h0m0-19h0m1 8h0m0-13h0m0 12h0m0-2h0m0 29h0m0-35h0m0-3h0m0 20h0m0-14h0m0-1h0m0 12h0m0 4h0m1 12h0m0 3h0m0-28h0m0 28h0m0-28h0m0-18h0m0 2h0m0 22h0m0 19h0m0-16h0m0-15h0m0 30h0m0-13h0m1-5h0m0-29h0m0-3h0m0 56h0m0-30h0m0 10h0m1-10h0m0 8h0m0-15h0m0 19h0m0 6h0m1-11h0m0-7h0m0 7h0m0-36h0m0 43h0m0 5h0m0-28h0m0 29h0m0-35h0m0 21h0m0 5h0m0-46h0m0 48h0m0-9h0m1 14h0m0-22h0m0 6h0m0 1h0m0 1h0m0-15h0m0 36h0m0-42h0m0 14h0m0 10h0m0-17h0m1 27h0m0-23h0m0-3h0m0 17h0m0 23h0m0-32h0m0 19h0m0-26h0m1 8h0m0 1h0m0 10h0m0-4h0m0-19h0m0 3h0m0 6h0m0 10h0m1 33h0m0-41h0m0 29h0m0-36h0m0 31h0m0-35h0m0 30h0m0-37h0m1 43h0m0-23h0m0 13h0m0-6h0m0-30h0m0 41h0m0-9h0m0-39h0m0 8h0m0 29h0m1-1h0m0-2h0m0 2h0m0-15h0m0 7h0m0 28h0m0-53h0m1-4h0m0 59h0m0-13h0m0 18h0m0-13h0m0-24h0m0 16h0m1-24h0m0 5h0m0 28h0m0-11h0m0 9h0m0 10h0m0-23h0m0 34h0m1-41h0m0 7h0m0 12h0m0 1h0m0 43h0m0-41h0m0-37h0m0 28h0m0 10h0m0-13h0m0-2h0m0 2h0m0-15h0m1 43h0m0-27h0m0-6h0m0 3h0m0 6h0m0-14h0m0-10h0m0 34h0m0-24h0m0 2h0m0 28h0m1-14h0m0-17h0m0 19h0m0-3h0m0-33h0m0 54h0m0-17h0m0-17h0m0 20h0m0-9h0m0 2h0m0-19h0m0 15h0m1-7h0m0 14h0m0-13h0m0 10h0m0-7h0m0 12h0m0-35h0m0 28h0m0 15h0m0-17h0m0 49h0m0-29h0m0-35h0m0-8h0m0 34h0m0-10h0m1 8h0m0-56h0m0 56h0m0-26h0m0-17h0m0 35h0m0 11h0m0-9h0m0-1h0m0 30h0m1-37h0m0 18h0m0 13h0m0-46h0m0 8h0m0-3h0m0 28h0m0-44h0m1 29h0m0 5h0m0-6h0m0-24h0m0 64h0m0-47h0m0 2h0m0 33h0m0-24h0m0-7h0m0-7h0m0 10h0m0 12h0m0 20h0m0-25h0m1-17h0m0 27h0m0-4h0m0 13h0m0 4h0m0-53h0m0 14h0m0-15h0m0 29h0m0 28h0m0-56h0m1 38h0m0-23h0m0 36h0m0-36h0m0-23h0m0 24h0m0 23h0m0-23h0m0-7h0m0-12h0m0 37h0m0-16h0m1 19h0m0-1h0m0 17h0m0-12h0m0 24h0m0-51h0m0 23h0m0-18h0m1-30h0m0 46h0m0-16h0m0-33h0m0-1h0m0 27h0m0 28h0m0-41h0m0-4h0m0 75h0m0-56h0m0 2h0m1-9h0m0 44h0m0-36h0m0-7h0m0 5h0m0 22h0m0-13h0m0 31h0m0-14h0m0-40h0m1-11h0m0 16h0m0 49h0m0-5h0m0-12h0m0 1h0m0-42h0m0 27h0m0-18h0m0 23h0m0 5h0m0 24h0m1 5h0m0-32h0m0-20h0m0 45h0m0-30h0m0-22h0m0 11h0m0-4h0m0-1h0m0-14h0m0 13h0m1-6h0m0 35h0m0-4h0m0-6h0m0-44h0m0 6h0m0 25h0m0 43h0m0-33h0m0-14h0m0 23h0m0-15h0m0-20h0m1 26h0m0-19h0m0 8h0m0-14h0m0 8h0m1 28h0m0-1h0m0-12h0m0 29h0m0 4h0m0-21h0m0-5h0m0-8h0m1-3h0m0 13h0m0-18h0m0-4h0m0-31h0m0 23h0m0-3h0m0 55h0m0-71h0m0 43h0m0 14h0m1-19h0m0-31h0m0 4h0m0 30h0m0 26h0m0-7h0m0-12h0m0 29h0m0-12h0m0-71h0m0 38h0m0 20h0m0 9h0m1-9h0m0-6h0m0 18h0m0-36h0m0 4h0m0 36h0m0 16h0m0-91h0m0 70h0m0-11h0m0-1h0m0-9h0m1 37h0m0-51h0m0 22h0m0-6h0m0-32h0m0-11h0m0 9h0m0-27h0m0 15h0m0 61h0m0-16h0m0 33h0m1-50h0m0-19h0m0 9h0m0-26h0m0 60h0m0-24h0m0-18h0m0 55h0m0-78h0m0 81h0m0-35h0m0 6h0m0 4h0m1 12h0m0-3h0m0 14h0m0-24h0m0-32h0m0 50h0m0 1h0m0-51h0m0 25h0m0 36h0m0-59h0m0 29h0m0-10h0m0 17h0m0 19h0m0-14h0m0 22h0m1-41h0m0 23h0m0-54h0m0 51h0m0-30h0m0 24h0m0 2h0m0-33h0m1 63h0m0-35h0m0 19h0m0 10h0m0-61h0m0 34h0m0-38h0m0 53h0m0-18h0m1-9h0m0-14h0m0-6h0m0 49h0m0-35h0m0 28h0m0-44h0m0 25h0m0-29h0m1 29h0m0-46h0m0 53h0m0-40h0m0 33h0m0 32h0m0-61h0m0 55h0m0 1h0m1-56h0m0 7h0m0 36h0m0-10h0m0 7h0m0-13h0m0-15h0m0 8h0m0 10h0m0 5h0m0-9h0m0 21h0m0-26h0m0 32h0m0-46h0m1 41h0m0-30h0m0-13h0m0 31h0m0-37h0m0 14h0m0 5h0m0 40h0m0-29h0m0 3h0m0 21h0m0-62h0m0 30h0m1 28h0m0-44h0m0 17h0m0 11h0m0 7h0m0 26h0m0-54h0m0 29h0m0 3h0m0-12h0m0-49h0m0 22h0m1 58h0m0-49h0m0 20h0m0-16h0m0 50h0m0-19h0m0-29h0m0-5h0m0 31h0m1 11h0m0-24h0m0 20h0m0-11h0m0 1h0m0 2h0m0-25h0m0 27h0m0 3h0m1-5h0m0 27h0m0-46h0m0 28h0m0 34h0m0-31h0m0 4h0m1-20h0m0 1h0m0 13h0m0-21h0m0-8h0m0 1h0m0 1h0m0 37h0m0-5h0m0 4h0m0-13h0m1 2h0m0-23h0m0 16h0m0 13h0m0-21h0m0-15h0m0 33h0m0-25h0m0 28h0m0-16h0m0-5h0m0 1h0m0 2h0m0 16h0m1 0h0m0 4h0m0-9h0m0 5h0m0-1h0m0-14h0m0-27h0m0 29h0m0-4h0m0-17h0m0 6h0m1 23h0m0-8h0m0-5h0m0 9h0m0 1h0m0 12h0m1-33h0m0 16h0m0 4h0m0-2h0m0-29h0m0 51h0m0-42h0m0 26h0m1-18h0m0-5h0m0 30h0m0-31h0m0 5h0m0-27h0m0 60h0m0-34h0m0-5h0m0 26h0m0-79h0m0 63h0m0-34h0m1 48h0m0-27h0m0 22h0m0-19h0m0-24h0m0 13h0m0 15h0m0 7h0m0 17h0m1 7h0m0-30h0m0 38h0m0-31h0m0 8h0m0-3h0m0-58h0m0 22h0m0 55h0m0-43h0m1 58h0m0-98h0m0 37h0m0-4h0m0 6h0m0 3h0m0 4h0m0 22h0m0 3h0m0 1h0m0 9h0m0-7h0m0-1h0m0-9h0m0 21h0m0-23h0m0-30h0m1 14h0m0 35h0m0-27h0m0-5h0m0 28h0m0-17h0m0-1h0m0-2h0m1 24h0m0 24h0m0-47h0m0-1h0m0-12h0m0 5h0m0 34h0m1-32h0m0 19h0m0 43h0m0-71h0m0-7h0m1 14h0m0 19h0m0-26h0m0 2h0m0-2h0m0-3h0m0-25h0m0 39h0m1 19h0m0-9h0m0-16h0m0-25h0m0 26h0m0-13h0m0 23h0m0-34h0m0 46h0m1-24h0m0-24h0m0 53h0m0-76h0m0 12h0m0 30h0m0-19h0m0 52h0m0-43h0m1 17h0m0-3h0m0 43h0m0-57h0m0-14h0m0 75h0m0-49h0m0 1h0m1 30h0m0 8h0m0-35h0m0 13h0m0-5h0m0 2h0m0 30h0m0-29h0" stroke="#000" stroke-width="3.90" stroke-linecap="round" fill="none"/>
<path d="M164.5 452.5h0m8 0h0m1-8h0m0 4h0m0-14h0m1 8h0m0 8h0m0-21h0m0 26h0m0-6h0m0-19h0m0 19h0m0 6h0m0-29h0m2 29h0m26-13h0m0 4h0m3 7h0m8-5h0m0 4h0m0-11h0m1 8h0m0-3h0m1 9h0m0-6h0m0-15h0m0 1h0m1 3h0m0 17h0m4-1h0m8 137h0m24-137h0m1-5h0m5 6h0m21-16h0m1 16h0m1-4h0m0-5h0m0-4h0m0-6h0m0 11h0m1 0h0m0-1h0m1-1h0m38 3h0m0 6h0m1 1h0m0-17h0m0 16h0m0-27h0m0 10h0m0 15h0m0-15h0m1 18h0m0-32h0m0 8h0m0 1h0m1-4h0m0 2h0m0 14h0m25 1h0m1 6h0m0-1h0m10-10h0m0-1h0m1 8h0m0-26h0m0 33h0m0-22h0m0-2h0m0 24h0m0-26h0m1 9h0m0-17h0m0 15h0m0 13h0m1-12h0m0 15h0m1-31h0m37 31h0m0-15h0m0-18h0m0-8h0m1 37h0m0-15h0m0-30h0m0 48h0m0-41h0m0 31h0m0 13h0m1-43h0m0 42h0m0-36h0m0 31h0m0-24h0m0-7h0m1 9h0m0 7h0m0 4h0m0-5h0m1-23h0m18 187h0m4-144h0m3-5h0m0 9h0m1-11h0m9-21h0m1 32h0m0-6h0m0-18h0m0-12h0m0-1h0m0 34h0m0-23h0m1-7h0m0 12h0m0 19h0m0-9h0m0 11h0m1 0h0m0-17h0m1 6h0m15-1h0m2 2h0m1-2h0m0 8h0m0 4h0m0-2h0m0-17h0m0 15h0m1-13h0m5 17h0m2-3h0m11-11h0m1 1h0m1 6h0m0-1h0m24-6h0m1-4h0m0 6h0m1-10h0m0-23h0m0 20h0m0-3h0m0 3h0m0 9h0m0 11h0m0-47h0m1 19h0m0 13h0m0-6h0m0-4h0m0 27h0m0-19h0m0-8h0m0 30h0m0-14h0m0 10h0m1-25h0m34 20h0m0 7h0m1-47h0m1 45h0m0 4h0m0-35h0m0 25h0m0-20h0m0-5h0m0 35h0m0-20h0m0 14h0m0-23h0m0 3h0m0 23h0m1-43h0m0 21h0m0 6h0m0-21h0m0 18h0m1 3h0m39-26h0m0 39h0m0-22h0m0-16h0m1 18h0m0-9h0m0 25h0m0 9h0m1-31h0m0 14h0m0 15h0m0-18h0m0 3h0m0 18h0m0-38h0m1 19h0m0-6h0m0 13h0m0-18h0m0 25h0m21 145h0m15-144h0m0 1h0m0-41h0m0 13h0m0 29h0m0-27h0m0 10h0m0 8h0m1 8h0m0 3h0m0-1h0m0-24h0m0 15h0m0-8h0m0-22h0m0 29h0m0-7h0m0 18h0m0-10h0m27-12h0m0 9h0m0 5h0m1-18h0m0 25h0m0-9h0m0-15h0m0 13h0m1-17h0m0 6h0m0-7h0m0 25h0m1-10h0m0 9h0m10-22h0m0 11h0m0 14h0m0-10h0m1-14h0m0 22h0m0-34h0m0 35h0m0 4h0m0-9h0m0 9h0m0-7h0m0-10h0m0 15h0m1 2h0m1-25h0m0 8h0m6 16h0m18-12h0m1-8h0m0 21h0m0-19h0m0 8h0m1 0h0m0 11h0m0-14h0m0 6h0m0 7h0m2-17h0m9 170h0m1-154h0m0-12h0m1-3h0m1 14h0m13 137h0m11-142h0m0-9h0m1 3h0m0 1h0m0-1h0m0 1h0m0 12h0m0-1h0m0-27h0m0 17h0m1 11h0m0-33h0m0 12h0m1-8h0m24 167h0m6 59h0m8-214h0m0 18h0m1-22h0m0 21h0m0-19h0m0 14h0m0 6h0m1-3h0m0-17h0m0-8h0m0 19h0m0 9h0m0-36h0m0 36h0m1-36h0m0 10h0m35 21h0m2-24h0m0 25h0m0-17h0m0-6h0m0 27h0m0-34h0m0 25h0m0 8h0m0-20h0m0-3h0m1 16h0m0 2h0m0-8h0m0-12h0m1 23h0m5 140h0m34-140h0m0 2h0m0-15h0m1 16h0m0-2h0m0-20h0m0 15h0m0 1h0m0-10h0m2-9h0m0-1h0m16 167h0m6-152h0m0 2h0m1 8h0m12-11h0m0 9h0m1-10h0m0 8h0m0-17h0m1 16h0m1-5h0m0 1h0m0 5h0m0-5h0m0 3h0m13 147h0m0 7h0m12-179h0m1 12h0m0 13h0m0 4h0m1-15h0m0-6h0m0 24h0m0-3h0m0-9h0m0 9h0m1-13h0m0-7h0m0 21h0m1-20h0m16 21h0m19 0h0m1-7h0m1 5h0m0-22h0m0 17h0m1 8h0m0-25h0m0 5h0m0 12h0m0-16h0m0 9h0m0 7h0m0 3h0m1-26h0m35 16h0m1 0h0m0-6h0m0 21h0m0-6h0m0-9h0m1-2h0m0 2h0m0 13h0m0-23h0m0 17h0m1-8h0m0-4h0m0 14h0m40 6h0m0-29h0m1 27h0m0-12h0m0 2h0m0 9h0m0-37h0m0 32h0m0-5h0m0-3h0m0 16h0m1-16h0m0 2h0m1-27h0m0 2h0m0 17h0m0-10h0m1 13h0m4 19h0m0-4h0m18 2h0m1-12h0m0 13h0m1-15h0m0 8h0m0 2h0m1-5h0m0-1h0m0 10h0m10 0h0m0-28h0m1 5h0m0 15h0m0-6h0m0-6h0m0 22h0m0-17h0m0 13h0m0-13h0m1-17h0m0 34h0m0-2h0m0-21h0m1 3h0m17 20h0m9-29h0m0 3h0m0 9h0m0 15h0m0-25h0m1 14h0m0 1h0m0 8h0m0-22h0m1 13h0m8 11h0m28-1h0m1-17h0m0-35h0m1 38h0m0-12h0m0-2h0m0 20h0m0-12h0m0 21h0m0-32h0m0 31h0m1-22h0m0 10h0m0 1h0m0-16h0m0-15h0m0 44h0m0-11h0m0-25h0m0 6h0m0 29h0m0 1h0m1-4h0m0-31h0m10 33h0m1-1h0m19 2h0m5 2h0m0-11h0m1-11h0m0-6h0m1 17h0m0 4h0m0-13h0m0-5h0m0 3h0m0 22h0m0-17h0m0-5h0m1-3h0m0-14h0m0 34h0m0-3h0m19-1h0m0 3h0m1-2h0m0-1h0m18 0h0m1-2h0m0 9h0m0 1h0m1-14h0m0 14h0m0-2h0m0-31h0m0 30h0m0-6h0m0 10h0m1-7h0m0-11h0m0-7h0m0 6h0m1-20h0m0 38h0m0 1h0m36-26h0m0-8h0m1 0h0m1 22h0m0-27h0m0 26h0m0-24h0m0 34h0m0 1h0m1-9h0m0 10h0m0-12h0m0-23h0m0 33h0m0 2h0m0-5h0m1 2h0m0-26h0m17 30h0m3 0h0m6 0h0m0-5h0" stroke="#ffa500" stroke-width="3.90" stroke-linecap="round" fill="none"/>

<rect x="105.5" y="499" width="1255.5" height="48.6" fill="#ff0000" fill-opacity="0.12"/>
<rect x="162.0" y="493" width="1140.81795" height="56" fill="#ffa500" fill-opacity="0.10"/>
<line x1="162.0" y1="521" x2="1302.81795" y2="521" stroke="#ffa500" stroke-width="2.08"/>
<line x1="105.5" y1="522.9" x2="1361" y2="522.9" stroke="#ff0000" stroke-width="2.08"/>
<line x1="162.0" y1="666.5" x2="162.0" y2="380.5" stroke="#800080" stroke-width="2.08" stroke-dasharray="2.09 3.445"/>
<line x1="1302.81795" y1="666.5" x2="1302.81795" y2="380.5" stroke="#800080" stroke-width="2.08" stroke-dasharray="2.09 3.445"/>
<path d="M344.4 660.3h6.2l-3.1 5.6zM508.2 660.3h6.2l-3.1 5.6zM533.2 660.3h6.2l-3.1 5.6zM542.2 660.3h6.2l-3.1 5.6zM564.4 660.3h6.2l-3.1 5.6zM565.4 660.3h6.2l-3.1 5.6zM592.2 660.3h6.2l-3.1 5.6zM616.2 660.3h6.2l-3.1 5.6zM625.2 660.3h6.2l-3.1 5.6zM690.2 660.3h6.2l-3.1 5.6zM741.2 660.3h6.2l-3.1 5.6zM818.2 660.3h6.2l-3.1 5.6zM875.9 660.3h6.2l-3.1 5.6zM900.2 660.3h6.2l-3.1 5.6zM901.2 660.3h6.2l-3.1 5.6zM904.2 660.3h6.2l-3.1 5.6zM922.2 660.3h6.2l-3.1 5.6zM973.2 660.3h6.2l-3.1 5.6zM996.2 660.3h6.2l-3.1 5.6zM1017.2 660.3h6.2l-3.1 5.6zM1130.2 660.3h6.2l-3.1 5.6zM1240.2 660.3h6.2l-3.1 5.6zM1255.2 660.3h6.2l-3.1 5.6z" fill="#ffa500"/>
</g>
<text x="732.30" y="657.00" font-size="14.58" text-anchor="middle" textLength="35.35" lengthAdjust="spacingAndGlyphs" fill="#000">7744</text>
<line x1="105.5" y1="921.5" x2="1485.5" y2="921.5" stroke="#b0b0b0" stroke-width="1.11" stroke-dasharray="1.11 1.83"/>
<line x1="105.5" y1="889.5" x2="1485.5" y2="889.5" stroke="#b0b0b0" stroke-width="1.11" stroke-dasharray="1.11 1.83"/>
<line x1="105.5" y1="856.5" x2="1485.5" y2="856.5" stroke="#b0b0b0" stroke-width="1.11" stroke-dasharray="1.11 1.83"/>
<line x1="105.5" y1="823.5" x2="1485.5" y2="823.5" stroke="#b0b0b0" stroke-width="1.11" stroke-dasharray="1.11 1.83"/>
<line x1="105.5" y1="791.5" x2="1485.5" y2="791.5" stroke="#b0b0b0" stroke-width="1.11" stroke-dasharray="1.11 1.83"/>
<line x1="105.5" y1="758.5" x2="1485.5" y2="758.5" stroke="#b0b0b0" stroke-width="1.11" stroke-dasharray="1.11 1.83"/>
<g clip-path="url(#c3)">
<g fill="none" stroke="#000" stroke-width="1.2"><circle cx="347.5" cy="856.5" r="1.15"/><circle cx="511.5" cy="856.5" r="1.15"/><circle cx="536.5" cy="856.5" r="1.15"/><circle cx="545.5" cy="856.5" r="1.15"/><circle cx="568.5" cy="856.5" r="1.15"/><circle cx="595.5" cy="856.5" r="1.15"/><circle cx="619.5" cy="856.5" r="1.15"/><circle cx="628.5" cy="856.5" r="1.15"/><circle cx="693.5" cy="856.5" r="1.15"/><circle cx="744.5" cy="856.5" r="1.15"/><circle cx="821.5" cy="856.5" r="1.15"/><circle cx="879.5" cy="856.5" r="1.15"/><circle cx="903.5" cy="856.5" r="1.15"/><circle cx="907.5" cy="856.5" r="1.15"/><circle cx="926.5" cy="856.5" r="1.15"/><circle cx="976.5" cy="856.5" r="1.15"/><circle cx="999.5" cy="856.5" r="1.15"/><circle cx="1020.5" cy="856.5" r="1.15"/><circle cx="1102.5" cy="856.5" r="1.15"/><circle cx="1133.5" cy="856.5" r="1.15"/><circle cx="1243.5" cy="856.5" r="1.15"/><circle cx="1258.5" cy="856.5" r="1.15"/><circle cx="347.5" cy="889.5" r="1.15"/><circle cx="511.5" cy="889.5" r="1.15"/><circle cx="536.5" cy="889.5" r="1.15"/><circle cx="545.5" cy="889.5" r="1.15"/><circle cx="568.5" cy="889.5" r="1.15"/><circle cx="595.5" cy="889.5" r="1.15"/><circle cx="619.5" cy="889.5" r="1.15"/><circle cx="628.5" cy="889.5" r="1.15"/><circle cx="693.5" cy="889.5" r="1.15"/><circle cx="744.5" cy="889.5" r="1.15"/><circle cx="821.5" cy="889.5" r="1.15"/><circle cx="879.5" cy="889.5" r="1.15"/><circle cx="903.5" cy="889.5" r="1.15"/><circle cx="907.5" cy="889.5" r="1.15"/><circle cx="926.5" cy="889.5" r="1.15"/><circle cx="976.5" cy="889.5" r="1.15"/><circle cx="999.5" cy="889.5" r="1.15"/><circle cx="1020.5" cy="889.5" r="1.15"/><circle cx="1102.5" cy="889.5" r="1.15"/><circle cx="1133.5" cy="889.5" r="1.15"/><circle cx="1243.5" cy="889.5" r="1.15"/><circle cx="1258.5" cy="889.5" r="1.15"/></g>
<path d="M1303.5 758.5h0" stroke="#000" stroke-width="2.60" stroke-linecap="round" fill="none"/>
<line x1="162.0" y1="954.5" x2="162.0" y2="725.5" stroke="#800080" stroke-width="2.08" stroke-dasharray="2.09 3.445"/>
<line x1="1302.81795" y1="954.5" x2="1302.81795" y2="725.5" stroke="#800080" stroke-width="2.08" stroke-dasharray="2.09 3.445"/>
</g>
<line x1="105.5" y1="1009.4" x2="1485.5" y2="1009.4" stroke="#b0b0b0" stroke-width="1.11" stroke-dasharray="1.11 1.83"/>
<line x1="105.5" y1="983.4" x2="1485.5" y2="983.4" stroke="#b0b0b0" stroke-width="1.11" stroke-dasharray="1.11 1.83"/>
<line x1="105.5" y1="957.4" x2="1485.5" y2="957.4" stroke="#b0b0b0" stroke-width="1.11" stroke-dasharray="1.11 1.83"/>
<g clip-path="url(#c4)">
<rect x="162.3" y="1004.8" width="1140.5179500000002" height="5.0" fill="#000"/>
<path d="M168.5 1004.5h0m17 0h0m8 0h0m1-1h0m1 1h0m6-1h0m7 1h0m20 0h0m2-1h0m3 1h0m1 0h0m7 0h0m6 0h0m22 0h0m2 0h0m3 0h0m5-1h0m9 0h0m6 2h0m2-1h0m38-1h0m2 1h0m4-1h0m9 2h0m10-1h0m21 0h0m5-1h0m12 1h0m6 0h0m1 0h0m33 0h0m6 0h0m6 0h0m2 1h0m2 0h0m11-2h0m3 1h0m6 1h0m4-1h0m12-1h0m3 1h0m3-1h0m5 0h0m4 1h0m5 1h0m2-2h0m18 0h0m5 1h0m23 0h0m3 0h0m1 0h0m7 0h0m1 0h0m7 0h0m4 0h0m4 0h0m1 0h0m7 0h0m3 0h0m5 0h0m4 0h0m1 0h0m5-1h0m3 1h0m10-1h0m5 0h0m1 1h0m3 0h0m2 0h0m11 0h0m0 1h0m1-2h0m10 1h0m7-1h0m11 0h0m10 1h0m1 1h0m9-1h0m13 0h0m12 0h0m7 0h0m2 1h0m2-2h0m2 0h0m6 1h0m1-1h0m11 2h0m4-2h0m3 0h0m3 1h0m14 0h0m6 0h0m2 0h0m18 0h0m3 0h0m4-1h0m7 0h0m2 0h0m6 1h0m2-1h0m4 1h0m24 0h0m4 0h0m10 0h0m4 0h0m3-1h0m5 1h0m2 0h0m1 0h0m4-1h0m2 0h0m22 1h0m4-1h0m34 1h0m18-1h0m14 1h0m13 0h0m10 0h0m17 0h0m17-1h0m1 1h0m2 0h0m0-1h0m0 1h0m3 0h0m5-1h0m4 1h0m1-1h0m15 1h0m28-1h0m41 1h0m25 0h0m1 0h0m3 0h0m3 0h0m1-1h0m2 1h0m1-1h0m8 1h0m15-1h0m10 1h0m4 0h0m9-1h0m1 1h0m2 0h0m8-1h0m22 0h0m9 1h0m4 0h0m12 0h0m6 0h0m5 0h0" stroke="#000" stroke-width="2.20" stroke-linecap="round" fill="none"/>
<path d="M345.3 959h4l-2 -3.6zM509.2 959h4l-2 -3.6zM534.5 959h4l-2 -3.6zM543.6 959h4l-2 -3.6zM566.5 959h4l-2 -3.6zM593.3 959h4l-2 -3.6zM617.3 959h4l-2 -3.6zM626.3 959h4l-2 -3.6zM691.3 959h4l-2 -3.6zM742.3 959h4l-2 -3.6zM819.1 959h4l-2 -3.6zM877.3 959h4l-2 -3.6zM901.0 959h4l-2 -3.6zM905.0 959h4l-2 -3.6zM924.2 959h4l-2 -3.6zM974.2 959h4l-2 -3.6zM997.3 959h4l-2 -3.6zM1018.4 959h4l-2 -3.6zM1100.4 959h4l-2 -3.6zM1131.3 959h4l-2 -3.6zM1241.2 959h4l-2 -3.6zM1256.5 959h4l-2 -3.6zM1301.4 959h4l-2 -3.6z" fill="#ff0000"/>
<path d="M568.5 987.5h0m51 4h0m74-4h0m211 4h0m72 0h0m126-14h0m156 13h0" stroke="#ff0000" stroke-width="2.60" stroke-linecap="round" fill="none"/>
<path d="M347.5 1002.5h0m161 2h0m28-7h0m9 2h0m22 2h0m28-4h0m33 0h0m116 2h0m77 2h0m58-3h0m24 4h0m4-4h0m18-1h0m74 4h0m21 2h0m113-1h0m110-7h0" stroke="#000" stroke-width="2.60" stroke-linecap="round" fill="none"/>
<line x1="162.0" y1="1011.5" x2="162.0" y2="954.5" stroke="#800080" stroke-width="2.08" stroke-dasharray="2.09 3.445"/>
<line x1="1302.81795" y1="1011.5" x2="1302.81795" y2="954.5" stroke="#800080" stroke-width="2.08" stroke-dasharray="2.09 3.445"/>
</g>
<rect x="105.5" y="35.5" width="1380.0" height="286.0" fill="none" stroke="#000" stroke-width="1"/>
<rect x="105.5" y="380.5" width="1380.0" height="286.0" fill="none" stroke="#000" stroke-width="1"/>
<rect x="105.5" y="725.5" width="1380.0" height="286.0" fill="none" stroke="#000" stroke-width="1"/>
<line x1="105.5" y1="954.5" x2="1485.5" y2="954.5" stroke="#000" stroke-width="1"/>
<text x="162.50" y="342.30" font-size="14.58" text-anchor="middle" textLength="8.84" lengthAdjust="spacingAndGlyphs" fill="#000">0</text>
<text x="317.50" y="342.30" font-size="14.58" text-anchor="middle" textLength="35.35" lengthAdjust="spacingAndGlyphs" fill="#000">2000</text>
<text x="472.50" y="342.30" font-size="14.58" text-anchor="middle" textLength="35.35" lengthAdjust="spacingAndGlyphs" fill="#000">4000</text>
<text x="628.50" y="342.30" font-size="14.58" text-anchor="middle" textLength="35.35" lengthAdjust="spacingAndGlyphs" fill="#000">6000</text>
<text x="783.50" y="342.30" font-size="14.58" text-anchor="middle" textLength="35.35" lengthAdjust="spacingAndGlyphs" fill="#000">8000</text>
<text x="938.50" y="342.30" font-size="14.58" text-anchor="middle" textLength="44.19" lengthAdjust="spacingAndGlyphs" fill="#000">10000</text>
<text x="1093.50" y="342.30" font-size="14.58" text-anchor="middle" textLength="44.19" lengthAdjust="spacingAndGlyphs" fill="#000">12000</text>
<text x="1248.50" y="342.30" font-size="14.58" text-anchor="middle" textLength="44.19" lengthAdjust="spacingAndGlyphs" fill="#000">14000</text>
<text x="1403.50" y="342.30" font-size="14.58" text-anchor="middle" textLength="44.19" lengthAdjust="spacingAndGlyphs" fill="#000">16000</text>
<text x="162.50" y="687.30" font-size="14.58" text-anchor="middle" textLength="8.84" lengthAdjust="spacingAndGlyphs" fill="#000">0</text>
<text x="317.50" y="687.30" font-size="14.58" text-anchor="middle" textLength="35.35" lengthAdjust="spacingAndGlyphs" fill="#000">2000</text>
<text x="472.50" y="687.30" font-size="14.58" text-anchor="middle" textLength="35.35" lengthAdjust="spacingAndGlyphs" fill="#000">4000</text>
<text x="628.50" y="687.30" font-size="14.58" text-anchor="middle" textLength="35.35" lengthAdjust="spacingAndGlyphs" fill="#000">6000</text>
<text x="783.50" y="687.30" font-size="14.58" text-anchor="middle" textLength="35.35" lengthAdjust="spacingAndGlyphs" fill="#000">8000</text>
<text x="938.50" y="687.30" font-size="14.58" text-anchor="middle" textLength="44.19" lengthAdjust="spacingAndGlyphs" fill="#000">10000</text>
<text x="1093.50" y="687.30" font-size="14.58" text-anchor="middle" textLength="44.19" lengthAdjust="spacingAndGlyphs" fill="#000">12000</text>
<text x="1248.50" y="687.30" font-size="14.58" text-anchor="middle" textLength="44.19" lengthAdjust="spacingAndGlyphs" fill="#000">14000</text>
<text x="1403.50" y="687.30" font-size="14.58" text-anchor="middle" textLength="44.19" lengthAdjust="spacingAndGlyphs" fill="#000">16000</text>
<text x="162.50" y="1032.30" font-size="14.58" text-anchor="middle" textLength="8.84" lengthAdjust="spacingAndGlyphs" fill="#000">0</text>
<text x="317.50" y="1032.30" font-size="14.58" text-anchor="middle" textLength="35.35" lengthAdjust="spacingAndGlyphs" fill="#000">2000</text>
<text x="472.50" y="1032.30" font-size="14.58" text-anchor="middle" textLength="35.35" lengthAdjust="spacingAndGlyphs" fill="#000">4000</text>
<text x="628.50" y="1032.30" font-size="14.58" text-anchor="middle" textLength="35.35" lengthAdjust="spacingAndGlyphs" fill="#000">6000</text>
<text x="783.50" y="1032.30" font-size="14.58" text-anchor="middle" textLength="35.35" lengthAdjust="spacingAndGlyphs" fill="#000">8000</text>
<text x="938.50" y="1032.30" font-size="14.58" text-anchor="middle" textLength="44.19" lengthAdjust="spacingAndGlyphs" fill="#000">10000</text>
<text x="1093.50" y="1032.30" font-size="14.58" text-anchor="middle" textLength="44.19" lengthAdjust="spacingAndGlyphs" fill="#000">12000</text>
<text x="1248.50" y="1032.30" font-size="14.58" text-anchor="middle" textLength="44.19" lengthAdjust="spacingAndGlyphs" fill="#000">14000</text>
<text x="1403.50" y="1032.30" font-size="14.58" text-anchor="middle" textLength="44.19" lengthAdjust="spacingAndGlyphs" fill="#000">16000</text>
<text x="95.00" y="60.50" font-size="14.58" text-anchor="end" textLength="30.93" lengthAdjust="spacingAndGlyphs" fill="#000">10.0</text>
<text x="95.00" y="94.79" font-size="14.58" text-anchor="end" textLength="22.09" lengthAdjust="spacingAndGlyphs" fill="#000">9.8</text>
<text x="95.00" y="129.07" font-size="14.58" text-anchor="end" textLength="22.09" lengthAdjust="spacingAndGlyphs" fill="#000">9.6</text>
<text x="95.00" y="163.36" font-size="14.58" text-anchor="end" textLength="22.09" lengthAdjust="spacingAndGlyphs" fill="#000">9.4</text>
<text x="95.00" y="197.64" font-size="14.58" text-anchor="end" textLength="22.09" lengthAdjust="spacingAndGlyphs" fill="#000">9.2</text>
<text x="95.00" y="231.93" font-size="14.58" text-anchor="end" textLength="22.09" lengthAdjust="spacingAndGlyphs" fill="#000">9.0</text>
<text x="95.00" y="266.22" font-size="14.58" text-anchor="end" textLength="22.09" lengthAdjust="spacingAndGlyphs" fill="#000">8.8</text>
<text x="95.00" y="300.50" font-size="14.58" text-anchor="end" textLength="22.09" lengthAdjust="spacingAndGlyphs" fill="#000">8.6</text>
<text x="95.00" y="395.50" font-size="14.58" text-anchor="end" textLength="30.93" lengthAdjust="spacingAndGlyphs" fill="#000">9.98</text>
<text x="95.00" y="428.50" font-size="14.58" text-anchor="end" textLength="30.93" lengthAdjust="spacingAndGlyphs" fill="#000">9.96</text>
<text x="95.00" y="461.50" font-size="14.58" text-anchor="end" textLength="30.93" lengthAdjust="spacingAndGlyphs" fill="#000">9.94</text>
<text x="95.00" y="494.50" font-size="14.58" text-anchor="end" textLength="30.93" lengthAdjust="spacingAndGlyphs" fill="#000">9.92</text>
<text x="95.00" y="527.50" font-size="14.58" text-anchor="end" textLength="30.93" lengthAdjust="spacingAndGlyphs" fill="#000">9.90</text>
<text x="95.00" y="560.50" font-size="14.58" text-anchor="end" textLength="30.93" lengthAdjust="spacingAndGlyphs" fill="#000">9.88</text>
<text x="95.00" y="593.50" font-size="14.58" text-anchor="end" textLength="30.93" lengthAdjust="spacingAndGlyphs" fill="#000">9.86</text>
<text x="95.00" y="626.50" font-size="14.58" text-anchor="end" textLength="30.93" lengthAdjust="spacingAndGlyphs" fill="#000">9.84</text>
<text x="95.00" y="659.50" font-size="14.58" text-anchor="end" textLength="30.93" lengthAdjust="spacingAndGlyphs" fill="#000">9.82</text>
<text x="95.00" y="927.00" font-size="14.58" text-anchor="end" textLength="80.65" lengthAdjust="spacingAndGlyphs" fill="#000">OBS not OK</text>
<text x="95.00" y="895.00" font-size="14.58" text-anchor="end" textLength="43.83" lengthAdjust="spacingAndGlyphs" fill="#000">dr &gt; 5</text>
<text x="95.00" y="862.00" font-size="14.58" text-anchor="end" textLength="57.68" lengthAdjust="spacingAndGlyphs" fill="#000">Ion. rad.</text>
<text x="95.00" y="829.00" font-size="14.58" text-anchor="end" textLength="68.89" lengthAdjust="spacingAndGlyphs" fill="#000">Sat. pixel.</text>
<text x="95.00" y="797.00" font-size="14.58" text-anchor="end" textLength="62.51" lengthAdjust="spacingAndGlyphs" fill="#000">not track</text>
<text x="95.00" y="764.00" font-size="14.58" text-anchor="end" textLength="79.24" lengthAdjust="spacingAndGlyphs" fill="#000">not Kalman</text>
<text x="95.00" y="1014.90" font-size="14.58" text-anchor="end" textLength="8.84" lengthAdjust="spacingAndGlyphs" fill="#000">0</text>
<text x="95.00" y="988.90" font-size="14.58" text-anchor="end" textLength="8.84" lengthAdjust="spacingAndGlyphs" fill="#000">5</text>
<text x="95.00" y="962.90" font-size="14.58" text-anchor="end" textLength="17.67" lengthAdjust="spacingAndGlyphs" fill="#000">10</text>
<path d="M162.50 321.5v5M317.50 321.5v5M472.50 321.5v5M628.50 321.5v5M783.50 321.5v5M938.50 321.5v5M1093.50 321.5v5M1248.50 321.5v5M1403.50 321.5v5M162.50 666.5v5M317.50 666.5v5M472.50 666.5v5M628.50 666.5v5M783.50 666.5v5M938.50 666.5v5M1093.50 666.5v5M1248.50 666.5v5M1403.50 666.5v5M162.50 1011.5v5M317.50 1011.5v5M472.50 1011.5v5M628.50 1011.5v5M783.50 1011.5v5M938.50 1011.5v5M1093.50 1011.5v5M1248.50 1011.5v5M1403.50 1011.5v5M105.5 55.50h-5.3M105.5 89.50h-5.3M105.5 123.50h-5.3M105.5 157.50h-5.3M105.5 192.50h-5.3M105.5 226.50h-5.3M105.5 260.50h-5.3M105.5 295.50h-5.3M105.5 390.50h-5.3M105.5 422.50h-5.3M105.5 455.50h-5.3M105.5 489.50h-5.3M105.5 522.50h-5.3M105.5 554.50h-5.3M105.5 587.50h-5.3M105.5 621.50h-5.3M105.5 654.50h-5.3M105.5 921.50h-5.3M105.5 889.50h-5.3M105.5 856.50h-5.3M105.5 823.50h-5.3M105.5 791.50h-5.3M105.5 758.50h-5.3M105.5 1009.50h-5.3M105.5 983.50h-5.3M105.5 957.50h-5.3" stroke="#000" stroke-width="1" fill="none"/>
<path d="M105.5 996.50h-3M105.5 970.50h-3" stroke="#000" stroke-width="1" fill="none"/>
<g transform="translate(69.1 983.5) rotate(-90)"><text x="0.00" y="0.00" font-size="14.58" text-anchor="middle" textLength="14.53" lengthAdjust="spacingAndGlyphs" fill="#000">dr</text></g>
<text x="794.90" y="26.50" font-size="16.67" text-anchor="middle" textLength="197.36" lengthAdjust="spacingAndGlyphs" fill="#000">AGASC ID 724175656.0</text>
<text x="794.90" y="371.80" font-size="16.67" text-anchor="middle" textLength="175.93" lengthAdjust="spacingAndGlyphs" fill="#000">Magnitude Estimates</text>
<rect x="1361.5" y="42.5" width="117.0" height="27.0" rx="2.8" fill="#fff" fill-opacity="0.8" stroke="#d6d6d6" stroke-width="1.11"/>
<line x1="1366" y1="53.8" x2="1396" y2="53.8" stroke="#008000" stroke-width="2.08"/>
<text x="1407.50" y="58.50" font-size="14.58" text-anchor="start" textLength="30.86" lengthAdjust="spacingAndGlyphs" fill="#000">mag</text>
<text x="1437.60" y="60.90" font-size="10.21" text-anchor="start" textLength="33.79" lengthAdjust="spacingAndGlyphs" font-style="italic" fill="#000">AGASC</text>
<rect x="1348.5" y="247.5" width="130.0" height="67.0" rx="2.8" fill="#fff" fill-opacity="0.8" stroke="#d6d6d6" stroke-width="1.11"/>
<path d="M1367.5 260.5h0" stroke="#ff0000" stroke-width="3.90" stroke-linecap="round" fill="none"/>
<path d="M1367.5 281.5h0" stroke="#ffa500" stroke-width="3.90" stroke-linecap="round" fill="none"/>
<path d="M1367.5 302.5h0" stroke="#000" stroke-width="3.90" stroke-linecap="round" fill="none"/>
<text x="1393.00" y="263.80" font-size="14.58" text-anchor="start" textLength="47.20" lengthAdjust="spacingAndGlyphs" fill="#000">not OK</text>
<text x="1393.00" y="284.80" font-size="14.58" text-anchor="start" textLength="80.07" lengthAdjust="spacingAndGlyphs" fill="#000">Highlighted</text>
<text x="1393.00" y="305.80" font-size="14.58" text-anchor="start" textLength="20.04" lengthAdjust="spacingAndGlyphs" fill="#000">OK</text>
<rect x="1365.5" y="387.5" width="113.0" height="48.0" rx="2.8" fill="#fff" fill-opacity="0.8" stroke="#d6d6d6" stroke-width="1.11"/>
<line x1="1369" y1="399.5" x2="1399" y2="399.5" stroke="#ffa500" stroke-width="2.6"/>
<line x1="1369" y1="421.5" x2="1399" y2="421.5" stroke="#ff0000" stroke-width="2.08"/>
<text x="1409.50" y="404.00" font-size="14.58" text-anchor="start" textLength="30.86" lengthAdjust="spacingAndGlyphs" fill="#000">mag</text>
<text x="1440.00" y="407.00" font-size="10.21" text-anchor="start" textLength="30.84" lengthAdjust="spacingAndGlyphs" font-style="italic" fill="#000">OBSID</text>
<text x="1409.50" y="426.80" font-size="14.58" text-anchor="start" textLength="30.86" lengthAdjust="spacingAndGlyphs" fill="#000">mag</text>
<rect x="1348.5" y="613.5" width="130.0" height="46.0" rx="2.8" fill="#fff" fill-opacity="0.8" stroke="#d6d6d6" stroke-width="1.11"/>
<path d="M1367.5 626.5h0" stroke="#ffa500" stroke-width="3.90" stroke-linecap="round" fill="none"/>
<path d="M1367.5 647.5h0" stroke="#000" stroke-width="3.90" stroke-linecap="round" fill="none"/>
<text x="1393.00" y="629.80" font-size="14.58" text-anchor="start" textLength="80.07" lengthAdjust="spacingAndGlyphs" fill="#000">Highlighted</text>
<text x="1393.00" y="650.80" font-size="14.58" text-anchor="start" textLength="20.04" lengthAdjust="spacingAndGlyphs" fill="#000">OK</text>
</svg>
</body></html>
